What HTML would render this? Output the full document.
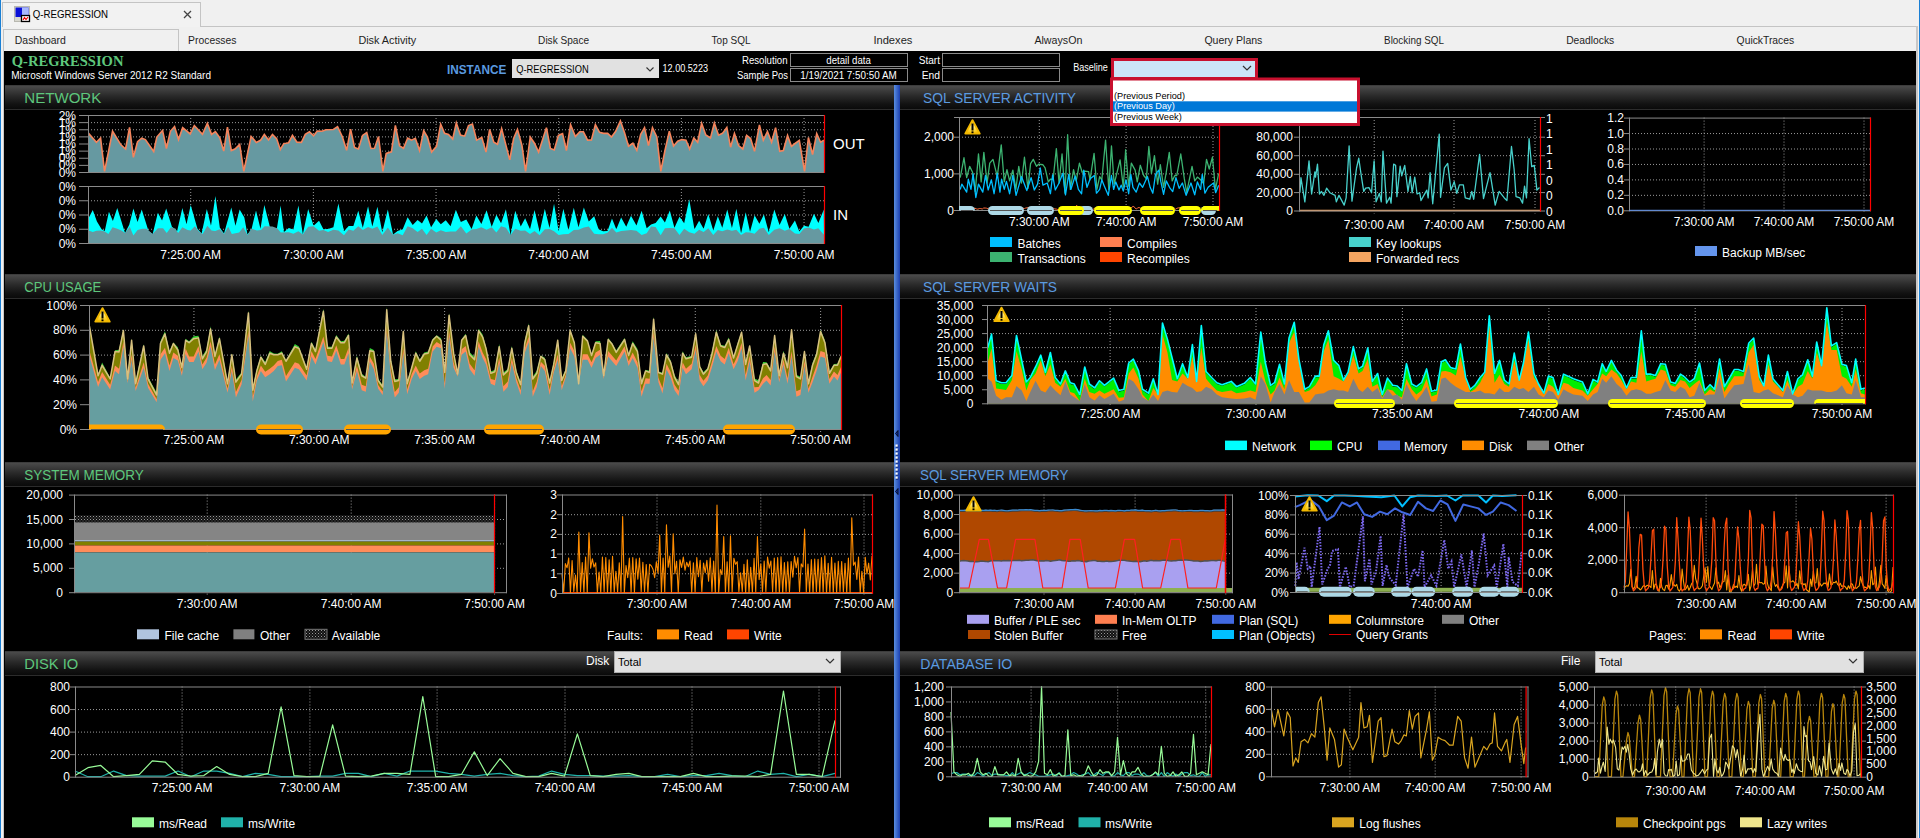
<!DOCTYPE html>
<html><head><meta charset="utf-8"><style>
html,body{margin:0;padding:0;width:1920px;height:838px;overflow:hidden;background:#f0f0f0;font-family:"Liberation Sans",sans-serif;}
.a{position:absolute;white-space:nowrap;}
</style></head><body>
<div class="a" style="left:0;top:0;width:1px;height:838px;background:#1a7fd4"></div><div class="a" style="left:1919px;top:0;width:1px;height:838px;background:#1a7fd4"></div><div class="a" style="left:200px;top:26px;width:1718px;height:1px;background:#c4c4c4"></div><div class="a" style="left:2px;top:2px;width:199px;height:25px;background:#f2f2f2;border:1px solid #c4c4c4;border-bottom:none;box-sizing:border-box"></div><div class="a" style="left:3px;top:29px;width:176px;height:22px;background:#f0f0f0;border:1px solid #c4c4c4;border-bottom:none;box-sizing:border-box"></div><div class="a" style="left:1916px;top:26px;width:2px;height:812px;background:#c8c8c8"></div><div class="a" style="left:3px;top:50px;width:1px;height:788px;background:#c8c8c8"></div><div class="a" style="left:4px;top:51px;width:1912px;height:787px;background:#000"></div>
<svg class="a" style="left:0;top:0" width="1920" height="838" shape-rendering="auto">
<defs>
<pattern id="dots" width="3" height="3" patternUnits="userSpaceOnUse"><rect width="3" height="3" fill="#111"/><rect x="0" y="0" width="1" height="1" fill="#9a9a9a"/><rect x="1.5" y="1.5" width="1" height="1" fill="#666"/></pattern>
<linearGradient id="hdr" x1="0" y1="0" x2="0" y2="1">
<stop offset="0" stop-color="#333"/><stop offset="0.05" stop-color="#4a4a4a"/><stop offset="0.45" stop-color="#2a2a2a"/><stop offset="0.8" stop-color="#121212"/><stop offset="1" stop-color="#0a0a0a"/>
</linearGradient>
<radialGradient id="wgrad" cx="0.5" cy="0.45" r="0.6"><stop offset="0" stop-color="#fff6b0"/><stop offset="0.5" stop-color="#ffd83a"/><stop offset="1" stop-color="#f4bc00"/></radialGradient>
<linearGradient id="split" x1="0" y1="0" x2="1" y2="0">
<stop offset="0" stop-color="#5a8ee0"/><stop offset="1" stop-color="#1a3fb0"/>
</linearGradient>
</defs>
<text x="32.8" y="17.8" font-size="11" fill="#000" text-anchor="start" font-weight="normal" font-family='"Liberation Sans", sans-serif' textLength="75.3" lengthAdjust="spacingAndGlyphs" >Q-REGRESSION</text><path d="M184,11 L191,18 M191,11 L184,18" stroke="#444" stroke-width="1.3"/><rect x="14.5" y="6.5" width="15" height="15" fill="#d8d8d0" stroke="#b8b8b0" stroke-width="1"/><rect x="15.5" y="7.5" width="13" height="9.5" fill="#0a10d8"/><rect x="22" y="7.5" width="6.5" height="9.5" fill="#a8b8ff"/><rect x="21.5" y="15.5" width="8" height="6" fill="#fff" stroke="#000" stroke-width="1.3"/><polyline points="23,20 24.5,17.5 26,19.5 28,17" fill="none" stroke="#e00" stroke-width="1.2"/><text x="14.8" y="43.8" font-size="11.2" fill="#1e1e1e" text-anchor="start" font-weight="normal" font-family='"Liberation Sans", sans-serif' textLength="51.1" lengthAdjust="spacingAndGlyphs" >Dashboard</text><text x="188.1" y="43.8" font-size="11.2" fill="#1e1e1e" text-anchor="start" font-weight="normal" font-family='"Liberation Sans", sans-serif' textLength="48.4" lengthAdjust="spacingAndGlyphs" >Processes</text><text x="358.4" y="43.8" font-size="11.2" fill="#1e1e1e" text-anchor="start" font-weight="normal" font-family='"Liberation Sans", sans-serif' textLength="57.8" lengthAdjust="spacingAndGlyphs" >Disk Activity</text><text x="538.1" y="43.8" font-size="11.2" fill="#1e1e1e" text-anchor="start" font-weight="normal" font-family='"Liberation Sans", sans-serif' textLength="51" lengthAdjust="spacingAndGlyphs" >Disk Space</text><text x="711.6" y="43.8" font-size="11.2" fill="#1e1e1e" text-anchor="start" font-weight="normal" font-family='"Liberation Sans", sans-serif' textLength="39" lengthAdjust="spacingAndGlyphs" >Top SQL</text><text x="873.4" y="43.8" font-size="11.2" fill="#1e1e1e" text-anchor="start" font-weight="normal" font-family='"Liberation Sans", sans-serif' textLength="39" lengthAdjust="spacingAndGlyphs" >Indexes</text><text x="1034.4" y="43.8" font-size="11.2" fill="#1e1e1e" text-anchor="start" font-weight="normal" font-family='"Liberation Sans", sans-serif' textLength="48" lengthAdjust="spacingAndGlyphs" >AlwaysOn</text><text x="1204.4" y="43.8" font-size="11.2" fill="#1e1e1e" text-anchor="start" font-weight="normal" font-family='"Liberation Sans", sans-serif' textLength="58" lengthAdjust="spacingAndGlyphs" >Query Plans</text><text x="1384.1" y="43.8" font-size="11.2" fill="#1e1e1e" text-anchor="start" font-weight="normal" font-family='"Liberation Sans", sans-serif' textLength="59.8" lengthAdjust="spacingAndGlyphs" >Blocking SQL</text><text x="1566.2" y="43.8" font-size="11.2" fill="#1e1e1e" text-anchor="start" font-weight="normal" font-family='"Liberation Sans", sans-serif' textLength="48" lengthAdjust="spacingAndGlyphs" >Deadlocks</text><text x="1736.6" y="43.8" font-size="11.2" fill="#1e1e1e" text-anchor="start" font-weight="normal" font-family='"Liberation Sans", sans-serif' textLength="57.6" lengthAdjust="spacingAndGlyphs" >QuickTraces</text><text x="11.8" y="65.8" font-size="14.5" fill="#5ec77c" text-anchor="start" font-weight="bold" font-family='"Liberation Serif", serif' textLength="111.6" lengthAdjust="spacingAndGlyphs" >Q-REGRESSION</text><text x="11.3" y="78.6" font-size="10" fill="#fff" text-anchor="start" font-weight="normal" font-family='"Liberation Sans", sans-serif' textLength="199.7" lengthAdjust="spacingAndGlyphs" >Microsoft Windows Server 2012 R2 Standard</text><text x="447" y="74.3" font-size="13" fill="#5b9be0" text-anchor="start" font-weight="bold" font-family='"Liberation Sans", sans-serif' textLength="59.3" lengthAdjust="spacingAndGlyphs" >INSTANCE</text><rect x="512" y="59" width="147" height="19" fill="#e1e1e1"/><text x="516.2" y="72.5" font-size="11" fill="#000" text-anchor="start" font-weight="normal" font-family='"Liberation Sans", sans-serif' textLength="72.5" lengthAdjust="spacingAndGlyphs" >Q-REGRESSION</text><polyline points="646.5,67.5 650,71 653.5,67.5" fill="none" stroke="#333" stroke-width="1.1"/><text x="662.5" y="71.7" font-size="10" fill="#fff" text-anchor="start" font-weight="normal" font-family='"Liberation Sans", sans-serif' textLength="45.5" lengthAdjust="spacingAndGlyphs" >12.00.5223</text><text x="742" y="64.2" font-size="10" fill="#fff" text-anchor="start" font-weight="normal" font-family='"Liberation Sans", sans-serif' textLength="45.5" lengthAdjust="spacingAndGlyphs" >Resolution</text><text x="737" y="79.2" font-size="10" fill="#fff" text-anchor="start" font-weight="normal" font-family='"Liberation Sans", sans-serif' textLength="51" lengthAdjust="spacingAndGlyphs" >Sample Pos</text><rect x="790.5" y="53.5" width="117" height="13" fill="#000" stroke="#8a8a8a" stroke-width="1"/><text x="826.3" y="64.2" font-size="10" fill="#fff" text-anchor="start" font-weight="normal" font-family='"Liberation Sans", sans-serif' textLength="44.5" lengthAdjust="spacingAndGlyphs" >detail data</text><rect x="790.5" y="68.5" width="117" height="13" fill="#000" stroke="#8a8a8a" stroke-width="1"/><text x="800.3" y="79.2" font-size="10" fill="#fff" text-anchor="start" font-weight="normal" font-family='"Liberation Sans", sans-serif' textLength="96.4" lengthAdjust="spacingAndGlyphs" >1/19/2021 7:50:50 AM</text><text x="918.7" y="64.2" font-size="10" fill="#fff" text-anchor="start" font-weight="normal" font-family='"Liberation Sans", sans-serif' textLength="21.3" lengthAdjust="spacingAndGlyphs" >Start</text><text x="921.7" y="79.2" font-size="10" fill="#fff" text-anchor="start" font-weight="normal" font-family='"Liberation Sans", sans-serif' textLength="18.3" lengthAdjust="spacingAndGlyphs" >End</text><rect x="942.5" y="53.5" width="117" height="13" fill="#000" stroke="#8a8a8a" stroke-width="1"/><rect x="942.5" y="68.5" width="117" height="13" fill="#000" stroke="#8a8a8a" stroke-width="1"/><text x="1073.2" y="71" font-size="10" fill="#fff" text-anchor="start" font-weight="normal" font-family='"Liberation Sans", sans-serif' textLength="34.7" lengthAdjust="spacingAndGlyphs" >Baseline</text><rect x="5" y="85" width="889" height="24" fill="url(#hdr)"/><rect x="5" y="109" width="889" height="1" fill="#2c2c2c"/><text x="24.3" y="103" font-size="15" fill="#5ec77c" text-anchor="start" font-weight="normal" font-family='"Liberation Sans", sans-serif' textLength="77" lengthAdjust="spacingAndGlyphs" >NETWORK</text><rect x="900" y="85" width="1016" height="24" fill="url(#hdr)"/><rect x="900" y="109" width="1016" height="1" fill="#2c2c2c"/><text x="923" y="103" font-size="15" fill="#5b9be0" text-anchor="start" font-weight="normal" font-family='"Liberation Sans", sans-serif' textLength="153" lengthAdjust="spacingAndGlyphs" >SQL SERVER ACTIVITY</text><rect x="5" y="274" width="889" height="24" fill="url(#hdr)"/><rect x="5" y="298" width="889" height="1" fill="#2c2c2c"/><text x="24.3" y="292" font-size="15" fill="#5ec77c" text-anchor="start" font-weight="normal" font-family='"Liberation Sans", sans-serif' textLength="77" lengthAdjust="spacingAndGlyphs" >CPU USAGE</text><rect x="900" y="274" width="1016" height="24" fill="url(#hdr)"/><rect x="900" y="298" width="1016" height="1" fill="#2c2c2c"/><text x="923" y="292" font-size="15" fill="#5b9be0" text-anchor="start" font-weight="normal" font-family='"Liberation Sans", sans-serif' textLength="134" lengthAdjust="spacingAndGlyphs" >SQL SERVER WAITS</text><rect x="5" y="462" width="889" height="24" fill="url(#hdr)"/><rect x="5" y="486" width="889" height="1" fill="#2c2c2c"/><text x="24.3" y="480" font-size="15" fill="#5ec77c" text-anchor="start" font-weight="normal" font-family='"Liberation Sans", sans-serif' textLength="119.5" lengthAdjust="spacingAndGlyphs" >SYSTEM MEMORY</text><rect x="900" y="462" width="1016" height="24" fill="url(#hdr)"/><rect x="900" y="486" width="1016" height="1" fill="#2c2c2c"/><text x="920" y="480" font-size="15" fill="#5b9be0" text-anchor="start" font-weight="normal" font-family='"Liberation Sans", sans-serif' textLength="148.4" lengthAdjust="spacingAndGlyphs" >SQL SERVER MEMORY</text><rect x="5" y="651" width="889" height="24" fill="url(#hdr)"/><rect x="5" y="675" width="889" height="1" fill="#2c2c2c"/><text x="24.3" y="669" font-size="15" fill="#5ec77c" text-anchor="start" font-weight="normal" font-family='"Liberation Sans", sans-serif' textLength="54" lengthAdjust="spacingAndGlyphs" >DISK IO</text><rect x="900" y="651" width="1016" height="24" fill="url(#hdr)"/><rect x="900" y="675" width="1016" height="1" fill="#2c2c2c"/><text x="920.3" y="669" font-size="15" fill="#5b9be0" text-anchor="start" font-weight="normal" font-family='"Liberation Sans", sans-serif' textLength="92" lengthAdjust="spacingAndGlyphs" >DATABASE IO</text><rect x="894" y="85" width="6" height="753" fill="url(#split)"/><path d="M895.5,433.5 L898,430.5 L898,436.5 Z" fill="#1030a0" stroke="#000" stroke-width="0.8"/><path d="M895.5,491.5 L898,488.5 L898,494.5 Z" fill="#1030a0" stroke="#000" stroke-width="0.8"/><rect x="896" y="445.3" width="2.4" height="2.4" fill="#102a80"/><rect x="895.5" y="444.5" width="2.2" height="2.2" fill="#fff"/><rect x="896" y="449.3" width="2.4" height="2.4" fill="#102a80"/><rect x="895.5" y="448.5" width="2.2" height="2.2" fill="#fff"/><rect x="896" y="453.3" width="2.4" height="2.4" fill="#102a80"/><rect x="895.5" y="452.5" width="2.2" height="2.2" fill="#fff"/><rect x="896" y="457.3" width="2.4" height="2.4" fill="#102a80"/><rect x="895.5" y="456.5" width="2.2" height="2.2" fill="#fff"/><rect x="896" y="461.3" width="2.4" height="2.4" fill="#102a80"/><rect x="895.5" y="460.5" width="2.2" height="2.2" fill="#fff"/><rect x="896" y="465.3" width="2.4" height="2.4" fill="#102a80"/><rect x="895.5" y="464.5" width="2.2" height="2.2" fill="#fff"/><rect x="896" y="469.3" width="2.4" height="2.4" fill="#102a80"/><rect x="895.5" y="468.5" width="2.2" height="2.2" fill="#fff"/><rect x="896" y="473.3" width="2.4" height="2.4" fill="#102a80"/><rect x="895.5" y="472.5" width="2.2" height="2.2" fill="#fff"/><rect x="896" y="477.3" width="2.4" height="2.4" fill="#102a80"/><rect x="895.5" y="476.5" width="2.2" height="2.2" fill="#fff"/><line x1="88" y1="122.625" x2="824" y2="122.625" stroke="#9a9a9a" stroke-width="1" stroke-dasharray="1 2"/><line x1="88" y1="129.75" x2="824" y2="129.75" stroke="#9a9a9a" stroke-width="1" stroke-dasharray="1 2"/><line x1="88" y1="136.875" x2="824" y2="136.875" stroke="#9a9a9a" stroke-width="1" stroke-dasharray="1 2"/><line x1="88" y1="144.0" x2="824" y2="144.0" stroke="#9a9a9a" stroke-width="1" stroke-dasharray="1 2"/><line x1="88" y1="151.125" x2="824" y2="151.125" stroke="#9a9a9a" stroke-width="1" stroke-dasharray="1 2"/><line x1="88" y1="158.25" x2="824" y2="158.25" stroke="#9a9a9a" stroke-width="1" stroke-dasharray="1 2"/><line x1="88" y1="165.375" x2="824" y2="165.375" stroke="#9a9a9a" stroke-width="1" stroke-dasharray="1 2"/><line x1="190.72222222222223" y1="115" x2="190.72222222222223" y2="175" stroke="#9a9a9a" stroke-width="1" stroke-dasharray="1 2"/><line x1="313.3888888888889" y1="115" x2="313.3888888888889" y2="175" stroke="#9a9a9a" stroke-width="1" stroke-dasharray="1 2"/><line x1="436.05555555555554" y1="115" x2="436.05555555555554" y2="175" stroke="#9a9a9a" stroke-width="1" stroke-dasharray="1 2"/><line x1="558.7222222222222" y1="115" x2="558.7222222222222" y2="175" stroke="#9a9a9a" stroke-width="1" stroke-dasharray="1 2"/><line x1="681.3888888888889" y1="115" x2="681.3888888888889" y2="175" stroke="#9a9a9a" stroke-width="1" stroke-dasharray="1 2"/><line x1="804.0555555555555" y1="115" x2="804.0555555555555" y2="175" stroke="#9a9a9a" stroke-width="1" stroke-dasharray="1 2"/><path d="M88,172 L88,133.35 L88.6,133.35 L96.42,142.21 L100.58,138.04 L104.54,171.38 L112.56,131.27 L120.9,144.81 L125.58,148.98 L129.54,127.42 L133.4,157.31 L137.56,141.69 L141.73,138.25 L145.38,139.6 L153.71,151.58 L156.83,137.0 L162.56,130.54 L166.42,148.46 L170.38,131.27 L174.54,126.58 L178.5,139.6 L182.67,127.62 L190.17,133.88 L194.33,125.54 L202.46,134.4 L207.35,123.46 L211.52,134.4 L215.38,131.58 L219.85,137.83 L223.71,151.06 L227.46,127.1 L231.31,150.54 L234.96,148.98 L239.65,144.5 L243.81,171.38 L251.1,136.48 L256.31,142.42 L260.48,140.33 L264.33,134.4 L268.5,139.92 L272.46,134.4 L276.62,138.56 L280.27,149.5 L283.92,143.46 L286.0,143.25 L288.6,142.73 L292.46,135.44 L296.94,142.21 L301.42,142.42 L305.27,134.4 L309.44,131.79 L313.6,135.75 L317.25,131.06 L321.94,131.27 L326.1,129.71 L333.4,129.5 L337.56,126.58 L342.25,136.48 L346.62,150.33 L350.58,129.19 L354.54,147.42 L358.4,148.98 L362.56,135.44 L366.73,132.62 L370.9,148.46 L374.54,148.25 L378.5,136.48 L382.88,171.38 L386.21,153.46 L391.42,151.79 L395.38,125.33 L399.54,145.85 L403.5,148.25 L407.67,138.04 L411.52,140.12 L415.38,138.25 L419.54,150.54 L423.71,130.75 L427.46,137.0 L431.62,152.1 L436.52,146.38 L440.69,124.29 L444.54,133.35 L448.5,134.4 L452.67,139.08 L456.31,122.94 L460.48,135.12 L464.65,136.17 L468.5,125.54 L472.46,123.98 L476.62,140.12 L481.83,137.52 L486.0,152.1 L489.65,129.5 L493.81,142.21 L497.46,144.29 L501.62,128.67 L509.75,159.92 L513.6,138.56 L517.46,129.5 L521.94,145.33 L525.58,171.38 L530.27,137.0 L534.44,143.25 L538.6,152.1 L546.42,127.62 L550.38,148.46 L554.23,150.02 L558.4,135.44 L562.56,133.67 L566.42,150.54 L570.58,124.71 L575.38,136.48 L579.75,131.79 L583.4,131.79 L587.56,140.12 L591.42,139.92 L595.38,124.71 L599.54,132.31 L603.5,133.35 L607.67,133.35 L611.52,137.0 L615.69,131.27 L620.38,120.85 L624.54,132.83 L628.5,146.17 L632.88,143.25 L636.83,150.33 L640.69,134.4 L644.54,127.62 L648.5,145.54 L652.46,127.62 L656.83,137.0 L660.79,171.38 L664.96,150.54 L669.33,131.27 L673.5,146.17 L677.67,141.17 L681.83,139.6 L686.0,140.12 L689.65,148.98 L693.81,138.04 L697.67,142.21 L701.62,123.25 L705.79,134.92 L710.48,138.04 L714.33,122.94 L718.5,135.12 L722.46,133.35 L726.83,127.42 L730.58,147.21 L734.44,133.35 L738.6,145.54 L742.77,148.98 L746.62,135.44 L750.58,138.56 L754.54,151.38 L759.44,125.02 L763.29,140.12 L767.46,131.58 L771.62,142.21 L775.58,127.62 L779.75,151.38 L783.4,150.54 L787.56,135.44 L791.42,146.38 L795.38,143.25 L799.33,140.33 L804.54,171.38 L808.4,137.52 L812.56,154.5 L816.73,133.67 L820.58,142.21 L824,140.12 L824,172 Z" fill="#6699a1" stroke="none"/><polyline points="88,133.35 88.6,133.35 96.42,142.21 100.58,138.04 104.54,171.38 112.56,131.27 120.9,144.81 125.58,148.98 129.54,127.42 133.4,157.31 137.56,141.69 141.73,138.25 145.38,139.6 153.71,151.58 156.83,137.0 162.56,130.54 166.42,148.46 170.38,131.27 174.54,126.58 178.5,139.6 182.67,127.62 190.17,133.88 194.33,125.54 202.46,134.4 207.35,123.46 211.52,134.4 215.38,131.58 219.85,137.83 223.71,151.06 227.46,127.1 231.31,150.54 234.96,148.98 239.65,144.5 243.81,171.38 251.1,136.48 256.31,142.42 260.48,140.33 264.33,134.4 268.5,139.92 272.46,134.4 276.62,138.56 280.27,149.5 283.92,143.46 286.0,143.25 288.6,142.73 292.46,135.44 296.94,142.21 301.42,142.42 305.27,134.4 309.44,131.79 313.6,135.75 317.25,131.06 321.94,131.27 326.1,129.71 333.4,129.5 337.56,126.58 342.25,136.48 346.62,150.33 350.58,129.19 354.54,147.42 358.4,148.98 362.56,135.44 366.73,132.62 370.9,148.46 374.54,148.25 378.5,136.48 382.88,171.38 386.21,153.46 391.42,151.79 395.38,125.33 399.54,145.85 403.5,148.25 407.67,138.04 411.52,140.12 415.38,138.25 419.54,150.54 423.71,130.75 427.46,137.0 431.62,152.1 436.52,146.38 440.69,124.29 444.54,133.35 448.5,134.4 452.67,139.08 456.31,122.94 460.48,135.12 464.65,136.17 468.5,125.54 472.46,123.98 476.62,140.12 481.83,137.52 486.0,152.1 489.65,129.5 493.81,142.21 497.46,144.29 501.62,128.67 509.75,159.92 513.6,138.56 517.46,129.5 521.94,145.33 525.58,171.38 530.27,137.0 534.44,143.25 538.6,152.1 546.42,127.62 550.38,148.46 554.23,150.02 558.4,135.44 562.56,133.67 566.42,150.54 570.58,124.71 575.38,136.48 579.75,131.79 583.4,131.79 587.56,140.12 591.42,139.92 595.38,124.71 599.54,132.31 603.5,133.35 607.67,133.35 611.52,137.0 615.69,131.27 620.38,120.85 624.54,132.83 628.5,146.17 632.88,143.25 636.83,150.33 640.69,134.4 644.54,127.62 648.5,145.54 652.46,127.62 656.83,137.0 660.79,171.38 664.96,150.54 669.33,131.27 673.5,146.17 677.67,141.17 681.83,139.6 686.0,140.12 689.65,148.98 693.81,138.04 697.67,142.21 701.62,123.25 705.79,134.92 710.48,138.04 714.33,122.94 718.5,135.12 722.46,133.35 726.83,127.42 730.58,147.21 734.44,133.35 738.6,145.54 742.77,148.98 746.62,135.44 750.58,138.56 754.54,151.38 759.44,125.02 763.29,140.12 767.46,131.58 771.62,142.21 775.58,127.62 779.75,151.38 783.4,150.54 787.56,135.44 791.42,146.38 795.38,143.25 799.33,140.33 804.54,171.38 808.4,137.52 812.56,154.5 816.73,133.67 820.58,142.21 824,140.12" fill="none" stroke="#f4845c" stroke-width="1.6" stroke-linejoin="miter"/><line x1="79" y1="115.5" x2="88" y2="115.5" stroke="#8a8a8a" stroke-width="1"/><line x1="79" y1="122.625" x2="88" y2="122.625" stroke="#8a8a8a" stroke-width="1"/><line x1="79" y1="129.75" x2="88" y2="129.75" stroke="#8a8a8a" stroke-width="1"/><line x1="79" y1="136.875" x2="88" y2="136.875" stroke="#8a8a8a" stroke-width="1"/><line x1="79" y1="144.0" x2="88" y2="144.0" stroke="#8a8a8a" stroke-width="1"/><line x1="79" y1="151.125" x2="88" y2="151.125" stroke="#8a8a8a" stroke-width="1"/><line x1="79" y1="158.25" x2="88" y2="158.25" stroke="#8a8a8a" stroke-width="1"/><line x1="79" y1="165.375" x2="88" y2="165.375" stroke="#8a8a8a" stroke-width="1"/><line x1="79" y1="172.5" x2="88" y2="172.5" stroke="#8a8a8a" stroke-width="1"/><line x1="88.5" y1="115" x2="88.5" y2="173" stroke="#8a8a8a" stroke-width="1"/><line x1="88" y1="115.5" x2="825" y2="115.5" stroke="#8a8a8a" stroke-width="1"/><line x1="88" y1="172.5" x2="825" y2="172.5" stroke="#8a8a8a" stroke-width="1"/><line x1="824.5" y1="115" x2="824.5" y2="173" stroke="#ff0000" stroke-width="1.2"/><text x="76" y="119.5" font-size="12" fill="#fff" text-anchor="end" font-weight="normal" font-family='"Liberation Sans", sans-serif' >2%</text><text x="76" y="126.6" font-size="12" fill="#fff" text-anchor="end" font-weight="normal" font-family='"Liberation Sans", sans-serif' >1%</text><text x="76" y="133.8" font-size="12" fill="#fff" text-anchor="end" font-weight="normal" font-family='"Liberation Sans", sans-serif' >1%</text><text x="76" y="140.9" font-size="12" fill="#fff" text-anchor="end" font-weight="normal" font-family='"Liberation Sans", sans-serif' >1%</text><text x="76" y="148.0" font-size="12" fill="#fff" text-anchor="end" font-weight="normal" font-family='"Liberation Sans", sans-serif' >1%</text><text x="76" y="155.1" font-size="12" fill="#fff" text-anchor="end" font-weight="normal" font-family='"Liberation Sans", sans-serif' >1%</text><text x="76" y="162.2" font-size="12" fill="#fff" text-anchor="end" font-weight="normal" font-family='"Liberation Sans", sans-serif' >0%</text><text x="76" y="169.4" font-size="12" fill="#fff" text-anchor="end" font-weight="normal" font-family='"Liberation Sans", sans-serif' >0%</text><text x="76" y="176.5" font-size="12" fill="#fff" text-anchor="end" font-weight="normal" font-family='"Liberation Sans", sans-serif' >0%</text><line x1="88" y1="200.75" x2="824" y2="200.75" stroke="#9a9a9a" stroke-width="1" stroke-dasharray="1 2"/><line x1="88" y1="215.0" x2="824" y2="215.0" stroke="#9a9a9a" stroke-width="1" stroke-dasharray="1 2"/><line x1="88" y1="229.25" x2="824" y2="229.25" stroke="#9a9a9a" stroke-width="1" stroke-dasharray="1 2"/><line x1="190.72222222222223" y1="186" x2="190.72222222222223" y2="246" stroke="#9a9a9a" stroke-width="1" stroke-dasharray="1 2"/><line x1="313.3888888888889" y1="186" x2="313.3888888888889" y2="246" stroke="#9a9a9a" stroke-width="1" stroke-dasharray="1 2"/><line x1="436.05555555555554" y1="186" x2="436.05555555555554" y2="246" stroke="#9a9a9a" stroke-width="1" stroke-dasharray="1 2"/><line x1="558.7222222222222" y1="186" x2="558.7222222222222" y2="246" stroke="#9a9a9a" stroke-width="1" stroke-dasharray="1 2"/><line x1="681.3888888888889" y1="186" x2="681.3888888888889" y2="246" stroke="#9a9a9a" stroke-width="1" stroke-dasharray="1 2"/><line x1="804.0555555555555" y1="186" x2="804.0555555555555" y2="246" stroke="#9a9a9a" stroke-width="1" stroke-dasharray="1 2"/><path d="M88,243 L88,217.9 L88.6,217.9 L92.77,210.08 L96.94,221.54 L101.62,229.35 L104.75,230.92 L108.92,211.65 L112.88,221.02 L117.25,208.0 L125.06,233.0 L129.23,224.67 L133.4,208.52 L137.56,222.06 L141.73,209.56 L148.5,230.92 L152.67,234.04 L157.88,212.69 L162.04,220.5 L166.21,208.52 L171.94,226.75 L177.15,230.92 L182.35,208.0 L186.52,224.15 L190.69,204.88 L197.46,228.83 L201.62,233.52 L206.83,209.04 L211.0,225.71 L215.38,196.02 L219.85,227.79 L224.02,233.52 L231.31,207.48 L235.48,225.71 L239.65,209.56 L244.33,217.38 L247.46,234.56 L251.62,228.83 L256.0,210.6 L260.48,228.83 L264.33,204.88 L269.85,226.75 L276.83,228.83 L280.58,205.4 L283.92,231.96 L288.78,228.0 L293.37,229.55 L298.41,205.62 L302.84,234.25 L308.18,209.07 L313.56,225.81 L319.04,220.77 L323.4,229.21 L328.04,228.88 L333.38,227.29 L338.42,203.55 L343.97,231.29 L348.67,226.04 L353.38,226.0 L358.28,210.74 L362.79,227.73 L368.07,206.2 L372.32,226.56 L377.41,206.76 L382.28,232.22 L387.82,209.56 L393.07,234.62 L397.64,231.08 L402.71,229.36 L407.61,217.17 L412.71,225.02 L417.58,220.04 L422.0,223.53 L426.59,215.53 L431.09,227.18 L436.25,218.96 L440.79,224.26 L445.77,220.32 L450.56,226.18 L455.86,209.63 L460.85,221.9 L466.31,219.39 L471.62,229.02 L476.31,215.4 L481.38,223.98 L486.57,210.32 L491.72,226.8 L496.36,214.87 L501.07,223.36 L505.9,209.14 L510.55,234.92 L515.26,210.78 L520.74,226.57 L525.17,218.17 L530.02,229.13 L534.53,210.12 L539.66,231.91 L544.82,208.8 L549.52,228.1 L554.04,203.83 L558.64,231.3 L563.38,208.78 L568.48,230.35 L573.78,207.74 L578.51,227.26 L583.84,207.58 L588.77,221.49 L594.19,216.22 L598.59,229.22 L603.08,231.33 L607.51,231.02 L611.98,218.52 L616.32,229.29 L621.15,217.41 L626.24,226.63 L630.98,215.87 L636.48,225.54 L641.64,210.68 L646.69,228.13 L651.07,224.54 L655.62,222.96 L660.68,216.44 L664.92,222.61 L669.79,210.62 L674.43,227.77 L679.48,216.77 L684.19,223.29 L689.23,199.37 L694.45,229.3 L699.13,220.81 L703.6,228.72 L708.31,214.02 L713.26,230.58 L717.82,216.27 L722.26,227.63 L727.27,209.39 L731.93,228.01 L736.37,208.8 L741.06,233.13 L745.73,212.28 L750.03,231.77 L754.58,215.13 L759.39,223.64 L763.92,214.47 L768.79,232.36 L774.3,209.47 L779.56,225.12 L784.77,214.09 L789.47,228.76 L794.92,220.41 L799.33,231.42 L803.97,225.76 L808.6,226.77 L813.96,213.82 L818.37,223.0 L823.84,209.61 L824,229.96 L824,243 Z" fill="#00ffff" stroke="none"/><path d="M88,243 L88,230.4 L88.6,230.4 L92.77,231.96 L96.42,230.71 L100.58,230.4 L104.75,231.44 L108.4,234.04 L112.56,227.27 L117.25,228.83 L121.42,230.4 L125.06,233.0 L129.75,226.75 L133.4,235.6 L137.56,229.88 L142.25,228.83 L146.42,228.83 L152.67,234.04 L157.88,228.31 L163.08,228.31 L166.73,233.0 L170.9,227.27 L174.54,228.31 L178.19,233.0 L182.35,227.27 L187.56,229.88 L190.69,230.4 L194.85,226.23 L199.54,231.96 L202.67,234.04 L207.35,225.71 L211.52,230.4 L215.17,230.92 L219.85,229.35 L224.02,234.04 L228.19,226.75 L231.83,234.04 L239.12,232.48 L243.29,227.27 L247.46,235.08 L251.62,228.83 L256.83,230.4 L261.0,229.88 L264.65,226.23 L272.46,226.54 L277.15,228.31 L280.79,232.48 L288.78,232.25 L293.37,233.7 L298.41,231.3 L302.84,234.61 L308.18,226.71 L313.56,226.18 L319.04,230.83 L323.4,230.02 L328.04,231.9 L333.38,229.8 L338.42,230.53 L343.97,235.27 L348.67,229.45 L353.38,230.86 L358.28,226.27 L362.79,230.06 L368.07,226.97 L372.32,228.63 L377.41,226.49 L382.28,235.11 L387.82,227.59 L393.07,234.66 L397.64,233.32 L402.71,235.35 L407.61,226.23 L412.71,228.18 L417.58,231.96 L422.0,228.77 L426.59,234.97 L431.09,228.71 L436.25,232.59 L440.79,230.14 L445.77,231.94 L450.56,231.59 L455.86,231.51 L460.85,226.16 L466.31,233.58 L471.62,229.6 L476.31,228.97 L481.38,227.18 L486.57,229.74 L491.72,227.35 L496.36,232.61 L501.07,226.28 L505.9,227.7 L510.55,234.97 L515.26,228.66 L520.74,230.76 L525.17,230.41 L530.02,234.12 L534.53,231.11 L539.66,235.24 L544.82,229.33 L549.52,228.92 L554.04,231.17 L558.64,234.89 L563.38,234.29 L568.48,234.01 L573.78,229.92 L578.51,229.65 L583.84,227.61 L588.77,226.5 L594.19,233.8 L598.59,234.22 L603.08,234.36 L607.51,232.8 L611.98,227.75 L616.32,232.51 L621.15,231.01 L626.24,230.44 L630.98,229.94 L636.48,230.67 L641.64,235.09 L646.69,233.16 L651.07,226.59 L655.62,227.08 L660.68,235.17 L664.92,228.17 L669.79,227.96 L674.43,228.3 L679.48,235.05 L684.19,228.83 L689.23,232.36 L694.45,233.85 L699.13,229.63 L703.6,231.93 L708.31,228.19 L713.26,235.05 L717.82,229.98 L722.26,231.21 L727.27,229.59 L731.93,230.77 L736.37,229.8 L741.06,234.91 L745.73,232.25 L750.03,232.38 L754.58,233.69 L759.39,228.69 L763.92,227.86 L768.79,235.11 L774.3,229.72 L779.56,228.27 L784.77,230.76 L789.47,228.91 L794.92,233.5 L799.33,233.95 L803.97,228.46 L808.6,227.51 L813.96,229.61 L818.37,228.17 L823.84,234.85 L824,233.27 L824,243 Z" fill="#6699a1" stroke="none"/><line x1="79" y1="186.5" x2="88" y2="186.5" stroke="#8a8a8a" stroke-width="1"/><line x1="79" y1="200.75" x2="88" y2="200.75" stroke="#8a8a8a" stroke-width="1"/><line x1="79" y1="215.0" x2="88" y2="215.0" stroke="#8a8a8a" stroke-width="1"/><line x1="79" y1="229.25" x2="88" y2="229.25" stroke="#8a8a8a" stroke-width="1"/><line x1="79" y1="243.5" x2="88" y2="243.5" stroke="#8a8a8a" stroke-width="1"/><line x1="88.5" y1="186" x2="88.5" y2="244" stroke="#8a8a8a" stroke-width="1"/><line x1="88" y1="186.5" x2="825" y2="186.5" stroke="#8a8a8a" stroke-width="1"/><line x1="88" y1="243.5" x2="825" y2="243.5" stroke="#8a8a8a" stroke-width="1"/><line x1="824.5" y1="186" x2="824.5" y2="244" stroke="#ff0000" stroke-width="1.2"/><text x="76" y="190.5" font-size="12" fill="#fff" text-anchor="end" font-weight="normal" font-family='"Liberation Sans", sans-serif' >0%</text><text x="76" y="204.8" font-size="12" fill="#fff" text-anchor="end" font-weight="normal" font-family='"Liberation Sans", sans-serif' >0%</text><text x="76" y="219.0" font-size="12" fill="#fff" text-anchor="end" font-weight="normal" font-family='"Liberation Sans", sans-serif' >0%</text><text x="76" y="233.2" font-size="12" fill="#fff" text-anchor="end" font-weight="normal" font-family='"Liberation Sans", sans-serif' >0%</text><text x="76" y="247.5" font-size="12" fill="#fff" text-anchor="end" font-weight="normal" font-family='"Liberation Sans", sans-serif' >0%</text><text x="190.72222222222223" y="259.1" font-size="12" fill="#fff" text-anchor="middle" font-weight="normal" font-family='"Liberation Sans", sans-serif' >7:25:00 AM</text><text x="313.3888888888889" y="259.1" font-size="12" fill="#fff" text-anchor="middle" font-weight="normal" font-family='"Liberation Sans", sans-serif' >7:30:00 AM</text><text x="436.05555555555554" y="259.1" font-size="12" fill="#fff" text-anchor="middle" font-weight="normal" font-family='"Liberation Sans", sans-serif' >7:35:00 AM</text><text x="558.7222222222222" y="259.1" font-size="12" fill="#fff" text-anchor="middle" font-weight="normal" font-family='"Liberation Sans", sans-serif' >7:40:00 AM</text><text x="681.3888888888889" y="259.1" font-size="12" fill="#fff" text-anchor="middle" font-weight="normal" font-family='"Liberation Sans", sans-serif' >7:45:00 AM</text><text x="804.0555555555555" y="259.1" font-size="12" fill="#fff" text-anchor="middle" font-weight="normal" font-family='"Liberation Sans", sans-serif' >7:50:00 AM</text><text x="833" y="149" font-size="15" fill="#fff" text-anchor="start" font-weight="normal" font-family='"Liberation Sans", sans-serif' >OUT</text><text x="833" y="220" font-size="15" fill="#fff" text-anchor="start" font-weight="normal" font-family='"Liberation Sans", sans-serif' >IN</text><line x1="89" y1="330.3" x2="841" y2="330.3" stroke="#9a9a9a" stroke-width="1" stroke-dasharray="1 2"/><line x1="89" y1="355.1" x2="841" y2="355.1" stroke="#9a9a9a" stroke-width="1" stroke-dasharray="1 2"/><line x1="89" y1="379.9" x2="841" y2="379.9" stroke="#9a9a9a" stroke-width="1" stroke-dasharray="1 2"/><line x1="89" y1="404.7" x2="841" y2="404.7" stroke="#9a9a9a" stroke-width="1" stroke-dasharray="1 2"/><line x1="193.94444444444446" y1="305" x2="193.94444444444446" y2="432" stroke="#9a9a9a" stroke-width="1" stroke-dasharray="1 2"/><line x1="319.27777777777777" y1="305" x2="319.27777777777777" y2="432" stroke="#9a9a9a" stroke-width="1" stroke-dasharray="1 2"/><line x1="444.6111111111111" y1="305" x2="444.6111111111111" y2="432" stroke="#9a9a9a" stroke-width="1" stroke-dasharray="1 2"/><line x1="569.9444444444443" y1="305" x2="569.9444444444443" y2="432" stroke="#9a9a9a" stroke-width="1" stroke-dasharray="1 2"/><line x1="695.2777777777778" y1="305" x2="695.2777777777778" y2="432" stroke="#9a9a9a" stroke-width="1" stroke-dasharray="1 2"/><line x1="820.6111111111111" y1="305" x2="820.6111111111111" y2="432" stroke="#9a9a9a" stroke-width="1" stroke-dasharray="1 2"/><path d="M89,429 L89,323.8652231163289 L89.55,325.3373365378625 L98.09,374.70749093515013 L102.12,362.47246482338875 L110.17,377.6383434377349 L115.01,350.3529342862124 L119.04,349.7174417669957 L123.39,328.99783929238737 L127.58,376.3688083083676 L131.61,338.8728653180251 L135.64,381.0729268886939 L143.7,344.35498669060325 L148.05,376.8879438805398 L156.59,392.402242312181 L160.46,341.2765313369063 L164.97,331.1770714964418 L169.48,350.9053930345889 L173.35,342.42280739874496 L177.86,347.37353870601675 L181.89,365.6287995297078 L185.6,338.73077383161535 L189.14,341.3677609365809 L193.66,336.15034474014624 L198.49,335.8209169954396 L202.36,356.13161997085814 L206.55,349.17688614569994 L210.58,326.27985431231247 L214.93,354.3906367493413 L219.44,336.42290644535734 L227.5,381.6978156834642 L231.85,353.32486036261906 L235.88,379.4679093555531 L241.52,372.5675497294864 L248.45,310.4840027328783 L252.8,387.531658191078 L256.83,368.7384231250918 L260.86,355.95399789792936 L265.21,361.9745932742425 L269.72,350.9784986286953 L273.75,353.45694893406755 L277.78,353.70157480615114 L281.81,351.22273017181305 L286.0,360.1819242012881 L294.86,344.074854384863 L298.89,346.43869656390183 L306.63,367.36883903601745 L311.46,341.77300417993155 L315.49,349.38020029884547 L323.39,308.63036560049096 L327.58,346.7968486576238 L331.93,346.67719874892396 L336.28,335.0213310414153 L340.79,341.17482667300135 L344.34,340.6378579234306 L348.53,333.48238307335345 L352.08,381.21975068477104 L356.91,355.8081721077965 L361.75,373.79916671537444 L365.77,377.00140297798055 L369.8,347.9763285321092 L373.83,349.92974057333595 L378.18,378.80283318634173 L382.7,385.304954310771 L386.73,306.9968924540719 L390.75,358.52611778948824 L394.78,379.4684117547442 L398.81,378.85881368836635 L403.32,330.25618147711333 L407.19,381.1880992788956 L411.71,366.38148738343807 L415.73,351.19607315184726 L419.76,359.6115502044414 L424.28,352.3990815138996 L428.14,351.5370253257962 L432.66,338.94573139936887 L436.68,335.193444563202 L441.04,338.32618549822075 L444.74,370.0873668831444 L449.09,313.14526030085773 L453.61,351.81728654250475 L457.64,371.88142290456744 L461.66,339.19623424834685 L465.69,333.7206560571522 L469.72,352.2994186509727 L474.56,356.9721728278939 L478.59,328.7909633106158 L482.62,334.546240235447 L486.0,346.4526430392732 L490.83,371.3868801086841 L494.86,369.66782231963003 L499.22,343.95568824476794 L503.41,372.60137915294604 L507.76,369.05853225903877 L511.79,346.0409428066123 L516.3,370.36211810614645 L520.65,382.9732080948461 L524.68,341.0984860426233 L528.71,323.31436864484937 L532.74,376.8748658842893 L536.77,370.6330899106333 L540.79,355.37725895601295 L544.82,357.72998472012245 L549.66,380.85776172343424 L553.69,362.8469671808552 L557.72,338.98151818057727 L561.75,378.3342595082938 L565.77,369.1280813322969 L570.13,329.135805963284 L574.32,341.6346392060996 L578.67,381.05915807528027 L582.7,334.6258977506913 L587.53,339.8874356464473 L591.56,354.21057536332347 L595.59,341.2510933026973 L600.1,340.95084650335866 L603.65,374.4248237442823 L608.16,337.98254223082546 L612.19,343.14476246620967 L616.22,350.5340708444029 L624.6,338.1061159500109 L628.63,353.9805635272594 L632.66,341.1871713149942 L637.49,348.90489171754876 L641.52,381.2985259046797 L645.55,369.8410924781274 L649.58,370.84004187171143 L653.61,316.81190301623747 L658.44,371.4606496854921 L662.47,372.76423135759893 L666.5,352.9080154506635 L670.53,360.3616241314378 L674.56,375.00947809994307 L678.59,382.3173562044287 L682.62,351.34396893816483 L686.0,357.3717675235813 L691.64,355.7946694543764 L695.67,332.36070570543063 L699.7,365.76262929711163 L703.41,371.9316391350408 L707.76,368.01597223489756 L711.79,352.1890666200886 L716.3,330.0672858839191 L720.65,344.82777998138994 L724.68,345.64223437186297 L728.71,337.39340200078465 L733.54,356.943941419089 L737.57,343.2438840292337 L741.6,331.1762773613726 L745.63,362.0807029045866 L749.66,344.922675930354 L754.49,378.442415305817 L758.52,380.2260150073817 L763.03,361.93651866830726 L766.58,362.24002437355006 L770.61,368.94781612982126 L774.64,334.2082777234962 L779.15,374.13387794445265 L783.5,350.62504696467477 L787.53,365.21807969718776 L791.56,328.79362185906456 L796.39,374.86621098298565 L800.42,376.81757803236707 L804.45,350.25413101194107 L808.48,381.3552753216179 L812.51,362.662468578235 L816.54,352.7974827837564 L820.57,329.77827556236133 L824.92,340.18269378215047 L829.43,371.40690557335637 L833.95,363.93097449014596 L837.49,363.77001917372826 L841,355.1235696707202 L841,429 Z" fill="#33cc33" stroke="none"/><path d="M89,429 L89,326.59 L89.55,326.59 L98.09,375.75 L102.12,365.27 L110.17,378.97 L115.01,351.57 L119.04,351.89 L123.39,330.62 L127.58,378.97 L131.61,340.29 L135.64,383.8 L143.7,345.93 L148.05,378.97 L156.59,395.08 L160.46,343.51 L164.97,333.84 L169.48,353.18 L173.35,343.51 L177.86,349.96 L181.89,367.69 L185.6,340.29 L189.14,342.71 L193.66,338.68 L198.49,337.87 L202.36,358.82 L206.55,351.57 L210.58,329.01 L214.93,356.41 L219.44,338.68 L227.5,383.8 L231.85,354.79 L235.88,382.19 L241.52,374.13 L248.45,312.89 L252.8,390.25 L256.83,370.91 L260.86,357.21 L265.21,364.46 L269.72,353.18 L273.75,354.79 L277.78,354.79 L281.81,353.18 L286.0,361.24 L294.86,346.74 L298.89,348.35 L306.63,369.3 L311.46,343.51 L315.49,351.57 L323.39,311.28 L327.58,348.35 L331.93,348.35 L336.28,337.07 L340.79,342.71 L344.34,342.71 L348.53,335.46 L352.08,383.0 L356.91,358.02 L361.75,375.75 L365.77,378.16 L369.8,350.77 L373.83,351.57 L378.18,380.58 L382.7,387.03 L386.73,309.67 L390.75,361.24 L394.78,381.39 L398.81,380.58 L403.32,331.43 L407.19,383.8 L411.71,367.69 L415.73,353.18 L419.76,361.24 L424.28,353.99 L428.14,353.18 L432.66,340.29 L436.68,336.26 L441.04,340.29 L444.74,372.52 L449.09,315.31 L453.61,353.18 L457.64,374.13 L461.66,340.29 L465.69,335.46 L469.72,354.79 L474.56,359.63 L478.59,330.62 L482.62,337.07 L486.0,348.35 L490.83,373.33 L494.86,371.72 L499.22,346.74 L503.41,374.94 L507.76,370.91 L511.79,348.35 L516.3,372.52 L520.65,384.61 L524.68,343.51 L528.71,325.79 L532.74,378.97 L536.77,373.33 L540.79,356.41 L544.82,359.63 L549.66,383.0 L553.69,364.46 L557.72,340.29 L561.75,380.58 L565.77,370.91 L570.13,330.62 L574.32,342.71 L578.67,383.8 L582.7,336.26 L587.53,341.1 L591.56,355.6 L595.59,342.71 L600.1,343.51 L603.65,375.75 L608.16,339.48 L612.19,344.32 L616.22,352.38 L624.6,339.48 L628.63,355.6 L632.66,343.51 L637.49,351.57 L641.52,383.8 L645.55,370.91 L649.58,372.52 L653.61,319.34 L658.44,372.52 L662.47,374.13 L666.5,354.79 L670.53,362.05 L674.56,377.36 L678.59,384.61 L682.62,353.18 L686.0,358.82 L691.64,357.21 L695.67,333.84 L699.7,366.88 L703.41,374.13 L707.76,369.3 L711.79,354.79 L716.3,332.23 L720.65,345.93 L724.68,347.54 L728.71,339.48 L733.54,358.02 L737.57,345.12 L741.6,332.23 L745.63,364.46 L749.66,345.93 L754.49,380.58 L758.52,383.0 L763.03,364.46 L766.58,363.66 L770.61,370.91 L774.64,335.46 L779.15,375.75 L783.5,353.18 L787.53,367.69 L791.56,329.81 L796.39,376.55 L800.42,378.97 L804.45,351.57 L808.48,383.8 L812.51,365.27 L816.54,354.79 L820.57,331.43 L824.92,342.71 L829.43,373.33 L833.95,365.27 L837.49,365.27 L841,356.41 L841,429 Z" fill="#808000" stroke="none"/><path d="M89,429 L89,350.91 L89.55,350.91 L98.09,381.954 L102.12,371.91949999999997 L110.17,384.7285 L115.01,365.41 L119.04,368.63 L123.39,341.24 L127.58,381.1865 L131.61,354.13 L135.64,387.793 L143.7,362.19 L148.05,383.843 L156.59,399.073 L160.46,354.13 L164.97,347.68 L169.48,365.41 L173.35,352.52 L177.86,355.724 L181.89,372.123 L185.6,348.49 L189.14,356.55 L193.66,356.55 L198.49,346.07 L202.36,364.584 L206.55,357.774 L210.58,341.24 L214.93,364.6 L219.44,354.13 L227.5,388.6785 L231.85,365.41 L235.88,392.0 L241.52,379.894 L248.45,329.96 L252.8,396.454 L256.83,376.2285 L260.86,365.41 L265.21,371.86 L269.72,368.63 L273.75,365.41 L277.78,360.9995 L281.81,359.8295 L286.0,375.89 L294.86,362.19 L298.89,363.8 L306.63,375.504 L311.46,350.91 L315.49,358.96 L323.39,336.4 L327.58,355.74 L331.93,356.55 L336.28,345.27 L340.79,358.96 L344.34,358.96 L348.53,347.68 L352.08,386.542 L356.91,365.41 L361.75,384.75 L365.77,386.36 L369.8,356.5285 L373.83,363.8 L378.18,385.013 L382.7,391.4575 L386.73,326.73 L390.75,368.63 L394.78,392.0 L398.81,387.22950000000003 L403.32,347.68 L407.19,389.56399999999996 L411.71,373.894 L415.73,365.41 L419.76,373.47 L424.28,370.25 L428.14,368.63 L432.66,346.494 L436.68,342.024 L441.04,344.723 L444.74,383.14 L449.09,330.76 L453.61,362.19 L457.64,375.461 L461.66,349.29 L465.69,346.07 L469.72,363.8 L474.56,370.25 L478.59,341.24 L482.62,352.52 L486.0,358.96 L490.83,379.0885 L494.86,379.91 L499.22,357.35 L503.41,386.36 L507.76,381.53 L511.79,357.35 L516.3,377.8385 L520.65,390.3685 L524.68,348.8285 L528.71,336.4 L532.74,391.2 L536.77,381.53 L540.79,361.7285 L544.82,365.834 L549.66,389.644 L553.69,368.893 L557.72,354.13 L561.75,385.8985 L565.77,374.45750000000004 L570.13,342.85 L574.32,350.91 L578.67,384.3 L582.7,354.13 L587.53,354.13 L591.56,362.2495 L595.59,352.52 L600.1,349.714 L603.65,377.521 L608.16,350.91 L612.19,355.74 L616.22,360.58 L624.6,346.1295 L628.63,361.364 L632.66,352.52 L637.49,362.19 L641.52,391.2 L645.55,378.3 L649.58,378.724 L653.61,331.57 L658.44,377.8385 L662.47,387.97 L666.5,363.8 L670.53,371.86 L674.56,384.75 L678.59,390.814 L682.62,362.19 L686.0,368.63 L691.64,363.8595 L695.67,344.46 L699.7,375.08 L703.41,380.7795 L707.76,375.504 L711.79,362.19 L716.3,346.07 L720.65,355.74 L724.68,358.96 L728.71,347.68 L733.54,364.224 L737.57,355.74 L741.6,342.85 L745.63,375.08 L749.66,355.74 L754.49,387.22950000000003 L758.52,386.9875 L763.03,378.3 L766.58,375.08 L770.61,379.91 L774.64,346.07 L779.15,379.292 L783.5,359.384 L787.53,378.3 L791.56,350.91 L796.39,391.2 L800.42,389.58 L804.45,360.58 L808.48,388.6785 L812.51,376.69 L816.54,365.41 L820.57,350.91 L824.92,352.52 L829.43,379.0885 L833.95,371.474 L837.49,375.08 L841,367.02 L841,429 Z" fill="#ff8c5a" stroke="none"/><path d="M89,429 L89,356.41 L89.55,356.41 L98.09,387.03 L102.12,377.36 L110.17,389.44 L115.01,370.91 L119.04,374.13 L123.39,346.74 L127.58,383.0 L131.61,359.63 L135.64,391.06 L143.7,367.69 L148.05,387.83 L156.59,402.34 L160.46,359.63 L164.97,353.18 L169.48,370.91 L173.35,358.02 L177.86,360.44 L181.89,375.75 L185.6,353.99 L189.14,362.05 L193.66,362.05 L198.49,351.57 L202.36,369.3 L206.55,362.85 L210.58,346.74 L214.93,370.1 L219.44,359.63 L227.5,392.67 L231.85,370.91 L235.88,397.5 L241.52,384.61 L248.45,335.46 L252.8,401.53 L256.83,380.58 L260.86,370.91 L265.21,377.36 L269.72,374.13 L273.75,370.91 L277.78,366.08 L281.81,365.27 L286.0,381.39 L294.86,367.69 L298.89,369.3 L306.63,380.58 L311.46,356.41 L315.49,364.46 L323.39,341.9 L327.58,361.24 L331.93,362.05 L336.28,350.77 L340.79,364.46 L344.34,364.46 L348.53,353.18 L352.08,389.44 L356.91,370.91 L361.75,390.25 L365.77,391.86 L369.8,361.24 L373.83,369.3 L378.18,388.64 L382.7,395.08 L386.73,332.23 L390.75,374.13 L394.78,397.5 L398.81,392.67 L403.32,353.18 L407.19,394.28 L411.71,378.97 L415.73,370.91 L419.76,378.97 L424.28,375.75 L428.14,374.13 L432.66,351.57 L436.68,346.74 L441.04,348.35 L444.74,388.64 L449.09,336.26 L453.61,367.69 L457.64,376.55 L461.66,354.79 L465.69,351.57 L469.72,369.3 L474.56,375.75 L478.59,346.74 L482.62,358.02 L486.0,364.46 L490.83,383.8 L494.86,385.41 L499.22,362.85 L503.41,391.86 L507.76,387.03 L511.79,362.85 L516.3,382.19 L520.65,395.08 L524.68,353.18 L528.71,341.9 L532.74,396.7 L536.77,387.03 L540.79,366.08 L544.82,370.91 L549.66,395.08 L553.69,372.52 L557.72,359.63 L561.75,390.25 L565.77,377.36 L570.13,348.35 L574.32,356.41 L578.67,383.8 L582.7,359.63 L587.53,359.63 L591.56,367.69 L595.59,358.02 L600.1,354.79 L603.65,378.97 L608.16,356.41 L612.19,361.24 L616.22,366.08 L624.6,351.57 L628.63,366.08 L632.66,358.02 L637.49,367.69 L641.52,396.7 L645.55,383.8 L649.58,383.8 L653.61,337.07 L658.44,382.19 L662.47,393.47 L666.5,369.3 L670.53,377.36 L674.56,390.25 L678.59,395.89 L682.62,367.69 L686.0,374.13 L691.64,369.3 L695.67,349.96 L699.7,380.58 L703.41,386.22 L707.76,380.58 L711.79,367.69 L716.3,351.57 L720.65,361.24 L724.68,364.46 L728.71,353.18 L733.54,369.3 L737.57,361.24 L741.6,348.35 L745.63,380.58 L749.66,361.24 L754.49,392.67 L758.52,390.25 L763.03,383.8 L766.58,380.58 L770.61,385.41 L774.64,351.57 L779.15,382.19 L783.5,364.46 L787.53,383.8 L791.56,356.41 L796.39,396.7 L800.42,395.08 L804.45,366.08 L808.48,392.67 L812.51,382.19 L816.54,370.91 L820.57,356.41 L824.92,358.02 L829.43,383.8 L833.95,376.55 L837.49,380.58 L841,372.52 L841,429 Z" fill="#669ea0" stroke="none"/><polyline points="89,326.59 89.55,326.59 98.09,375.75 102.12,365.27 110.17,378.97 115.01,351.57 119.04,351.89 123.39,330.62 127.58,378.97 131.61,340.29 135.64,383.8 143.7,345.93 148.05,378.97 156.59,395.08 160.46,343.51 164.97,333.84 169.48,353.18 173.35,343.51 177.86,349.96 181.89,367.69 185.6,340.29 189.14,342.71 193.66,338.68 198.49,337.87 202.36,358.82 206.55,351.57 210.58,329.01 214.93,356.41 219.44,338.68 227.5,383.8 231.85,354.79 235.88,382.19 241.52,374.13 248.45,312.89 252.8,390.25 256.83,370.91 260.86,357.21 265.21,364.46 269.72,353.18 273.75,354.79 277.78,354.79 281.81,353.18 286.0,361.24 294.86,346.74 298.89,348.35 306.63,369.3 311.46,343.51 315.49,351.57 323.39,311.28 327.58,348.35 331.93,348.35 336.28,337.07 340.79,342.71 344.34,342.71 348.53,335.46 352.08,383.0 356.91,358.02 361.75,375.75 365.77,378.16 369.8,350.77 373.83,351.57 378.18,380.58 382.7,387.03 386.73,309.67 390.75,361.24 394.78,381.39 398.81,380.58 403.32,331.43 407.19,383.8 411.71,367.69 415.73,353.18 419.76,361.24 424.28,353.99 428.14,353.18 432.66,340.29 436.68,336.26 441.04,340.29 444.74,372.52 449.09,315.31 453.61,353.18 457.64,374.13 461.66,340.29 465.69,335.46 469.72,354.79 474.56,359.63 478.59,330.62 482.62,337.07 486.0,348.35 490.83,373.33 494.86,371.72 499.22,346.74 503.41,374.94 507.76,370.91 511.79,348.35 516.3,372.52 520.65,384.61 524.68,343.51 528.71,325.79 532.74,378.97 536.77,373.33 540.79,356.41 544.82,359.63 549.66,383.0 553.69,364.46 557.72,340.29 561.75,380.58 565.77,370.91 570.13,330.62 574.32,342.71 578.67,383.8 582.7,336.26 587.53,341.1 591.56,355.6 595.59,342.71 600.1,343.51 603.65,375.75 608.16,339.48 612.19,344.32 616.22,352.38 624.6,339.48 628.63,355.6 632.66,343.51 637.49,351.57 641.52,383.8 645.55,370.91 649.58,372.52 653.61,319.34 658.44,372.52 662.47,374.13 666.5,354.79 670.53,362.05 674.56,377.36 678.59,384.61 682.62,353.18 686.0,358.82 691.64,357.21 695.67,333.84 699.7,366.88 703.41,374.13 707.76,369.3 711.79,354.79 716.3,332.23 720.65,345.93 724.68,347.54 728.71,339.48 733.54,358.02 737.57,345.12 741.6,332.23 745.63,364.46 749.66,345.93 754.49,380.58 758.52,383.0 763.03,364.46 766.58,363.66 770.61,370.91 774.64,335.46 779.15,375.75 783.5,353.18 787.53,367.69 791.56,329.81 796.39,376.55 800.42,378.97 804.45,351.57 808.48,383.8 812.51,365.27 816.54,354.79 820.57,331.43 824.92,342.71 829.43,373.33 833.95,365.27 837.49,365.27 841,356.41" fill="none" stroke="#d8c080" stroke-width="1.5" stroke-linejoin="round" /><line x1="80" y1="305.5" x2="89" y2="305.5" stroke="#8a8a8a" stroke-width="1"/><line x1="80" y1="330.3" x2="89" y2="330.3" stroke="#8a8a8a" stroke-width="1"/><line x1="80" y1="355.1" x2="89" y2="355.1" stroke="#8a8a8a" stroke-width="1"/><line x1="80" y1="379.9" x2="89" y2="379.9" stroke="#8a8a8a" stroke-width="1"/><line x1="80" y1="404.7" x2="89" y2="404.7" stroke="#8a8a8a" stroke-width="1"/><line x1="80" y1="429.5" x2="89" y2="429.5" stroke="#8a8a8a" stroke-width="1"/><line x1="89.5" y1="305" x2="89.5" y2="430" stroke="#8a8a8a" stroke-width="1"/><line x1="89" y1="305.5" x2="842" y2="305.5" stroke="#8a8a8a" stroke-width="1"/><line x1="89" y1="429.5" x2="842" y2="429.5" stroke="#8a8a8a" stroke-width="1"/><line x1="841.5" y1="305" x2="841.5" y2="430" stroke="#ff0000" stroke-width="1.2"/><text x="77" y="309.5" font-size="12" fill="#fff" text-anchor="end" font-weight="normal" font-family='"Liberation Sans", sans-serif' >100%</text><text x="77" y="334.3" font-size="12" fill="#fff" text-anchor="end" font-weight="normal" font-family='"Liberation Sans", sans-serif' >80%</text><text x="77" y="359.1" font-size="12" fill="#fff" text-anchor="end" font-weight="normal" font-family='"Liberation Sans", sans-serif' >60%</text><text x="77" y="383.9" font-size="12" fill="#fff" text-anchor="end" font-weight="normal" font-family='"Liberation Sans", sans-serif' >40%</text><text x="77" y="408.7" font-size="12" fill="#fff" text-anchor="end" font-weight="normal" font-family='"Liberation Sans", sans-serif' >20%</text><text x="77" y="433.5" font-size="12" fill="#fff" text-anchor="end" font-weight="normal" font-family='"Liberation Sans", sans-serif' >0%</text><text x="193.94444444444446" y="444.4" font-size="12" fill="#fff" text-anchor="middle" font-weight="normal" font-family='"Liberation Sans", sans-serif' >7:25:00 AM</text><text x="319.27777777777777" y="444.4" font-size="12" fill="#fff" text-anchor="middle" font-weight="normal" font-family='"Liberation Sans", sans-serif' >7:30:00 AM</text><text x="444.6111111111111" y="444.4" font-size="12" fill="#fff" text-anchor="middle" font-weight="normal" font-family='"Liberation Sans", sans-serif' >7:35:00 AM</text><text x="569.9444444444443" y="444.4" font-size="12" fill="#fff" text-anchor="middle" font-weight="normal" font-family='"Liberation Sans", sans-serif' >7:40:00 AM</text><text x="695.2777777777778" y="444.4" font-size="12" fill="#fff" text-anchor="middle" font-weight="normal" font-family='"Liberation Sans", sans-serif' >7:45:00 AM</text><text x="820.6111111111111" y="444.4" font-size="12" fill="#fff" text-anchor="middle" font-weight="normal" font-family='"Liberation Sans", sans-serif' >7:50:00 AM</text><path d="M102.5,308.2 L109.7,321.6 L95.3,321.6 Z" fill="url(#wgrad)" stroke="#f2b800" stroke-width="2" stroke-linejoin="round"/><rect x="101.5" y="311.5" width="2" height="7" fill="#000"/><rect x="101.5" y="319.4" width="2" height="1.8" fill="#000"/><path d="M89,429.5 L89,424.5 L160.0,424.5 A5.0,5.0 0 0 1 165,429.5 Z" fill="#ffa500"/><line x1="91" y1="429.5" x2="163" y2="429.5" stroke="#555" stroke-width="1"/><rect x="256" y="424.5" width="47" height="10" rx="5.0" ry="5.0" fill="#ffa500"/><line x1="258" y1="429.5" x2="301" y2="429.5" stroke="#555" stroke-width="1"/><rect x="344" y="424.5" width="47" height="10" rx="5.0" ry="5.0" fill="#ffa500"/><line x1="346" y1="429.5" x2="389" y2="429.5" stroke="#555" stroke-width="1"/><rect x="484" y="424.5" width="60" height="10" rx="5.0" ry="5.0" fill="#ffa500"/><line x1="486" y1="429.5" x2="542" y2="429.5" stroke="#555" stroke-width="1"/><rect x="723" y="424.5" width="72" height="10" rx="5.0" ry="5.0" fill="#ffa500"/><line x1="725" y1="429.5" x2="793" y2="429.5" stroke="#555" stroke-width="1"/><line x1="74" y1="519.5" x2="506" y2="519.5" stroke="#9a9a9a" stroke-width="1" stroke-dasharray="1 2"/><line x1="74" y1="543.9000000000001" x2="506" y2="543.9000000000001" stroke="#9a9a9a" stroke-width="1" stroke-dasharray="1 2"/><line x1="74" y1="568.3000000000001" x2="506" y2="568.3000000000001" stroke="#9a9a9a" stroke-width="1" stroke-dasharray="1 2"/><line x1="207.2" y1="494.6" x2="207.2" y2="595.2" stroke="#9a9a9a" stroke-width="1" stroke-dasharray="1 2"/><line x1="351.2" y1="494.6" x2="351.2" y2="595.2" stroke="#9a9a9a" stroke-width="1" stroke-dasharray="1 2"/><line x1="494.6" y1="494.6" x2="494.6" y2="595.2" stroke="#9a9a9a" stroke-width="1" stroke-dasharray="1 2"/><rect x="74" y="515.4" width="420" height="7" fill="url(#dots)"/><rect x="74" y="522.4" width="420" height="18" fill="#858585"/><rect x="74" y="540.1" width="420" height="1.5" fill="#b0c4de"/><rect x="74" y="541.6" width="420" height="3.8" fill="#808000"/><rect x="74" y="545.4" width="420" height="7" fill="#ff8c5a"/><rect x="74" y="552.4" width="420" height="39.80000000000007" fill="#669ea0"/><line x1="69" y1="495.1" x2="74" y2="495.1" stroke="#8a8a8a" stroke-width="1"/><line x1="69" y1="519.5" x2="74" y2="519.5" stroke="#8a8a8a" stroke-width="1"/><line x1="69" y1="543.9000000000001" x2="74" y2="543.9000000000001" stroke="#8a8a8a" stroke-width="1"/><line x1="69" y1="568.3000000000001" x2="74" y2="568.3000000000001" stroke="#8a8a8a" stroke-width="1"/><line x1="69" y1="592.7" x2="74" y2="592.7" stroke="#8a8a8a" stroke-width="1"/><line x1="74.5" y1="494.6" x2="74.5" y2="593.2" stroke="#8a8a8a" stroke-width="1"/><line x1="74" y1="495.1" x2="507" y2="495.1" stroke="#8a8a8a" stroke-width="1"/><line x1="74" y1="592.7" x2="507" y2="592.7" stroke="#8a8a8a" stroke-width="1"/><line x1="506.5" y1="494.6" x2="506.5" y2="593.2" stroke="#8a8a8a" stroke-width="1"/><line x1="494.5" y1="494.6" x2="494.5" y2="593.2" stroke="#ff0000" stroke-width="1.2"/><text x="63" y="499.1" font-size="12" fill="#fff" text-anchor="end" font-weight="normal" font-family='"Liberation Sans", sans-serif' >20,000</text><text x="63" y="523.5" font-size="12" fill="#fff" text-anchor="end" font-weight="normal" font-family='"Liberation Sans", sans-serif' >15,000</text><text x="63" y="547.9" font-size="12" fill="#fff" text-anchor="end" font-weight="normal" font-family='"Liberation Sans", sans-serif' >10,000</text><text x="63" y="572.3" font-size="12" fill="#fff" text-anchor="end" font-weight="normal" font-family='"Liberation Sans", sans-serif' >5,000</text><text x="63" y="596.7" font-size="12" fill="#fff" text-anchor="end" font-weight="normal" font-family='"Liberation Sans", sans-serif' >0</text><text x="207.2" y="607.9" font-size="12" fill="#fff" text-anchor="middle" font-weight="normal" font-family='"Liberation Sans", sans-serif' >7:30:00 AM</text><text x="351.2" y="607.9" font-size="12" fill="#fff" text-anchor="middle" font-weight="normal" font-family='"Liberation Sans", sans-serif' >7:40:00 AM</text><text x="494.6" y="607.9" font-size="12" fill="#fff" text-anchor="middle" font-weight="normal" font-family='"Liberation Sans", sans-serif' >7:50:00 AM</text><rect x="137" y="629.3" width="22" height="10" fill="#b0c4de"/><text x="164.5" y="640.1" font-size="12" fill="#fff" text-anchor="start" font-weight="normal" font-family='"Liberation Sans", sans-serif' >File cache</text><rect x="233.4" y="629.3" width="21" height="10" fill="#808080"/><text x="260" y="640.1" font-size="12" fill="#fff" text-anchor="start" font-weight="normal" font-family='"Liberation Sans", sans-serif' >Other</text><rect x="305" y="629.3" width="22" height="10" fill="url(#dots)" stroke="#777" stroke-width="1"/><text x="331.8" y="640.1" font-size="12" fill="#fff" text-anchor="start" font-weight="normal" font-family='"Liberation Sans", sans-serif' >Available</text><line x1="562" y1="514.7" x2="872" y2="514.7" stroke="#9a9a9a" stroke-width="1" stroke-dasharray="1 2"/><line x1="562" y1="534.4" x2="872" y2="534.4" stroke="#9a9a9a" stroke-width="1" stroke-dasharray="1 2"/><line x1="562" y1="554.1" x2="872" y2="554.1" stroke="#9a9a9a" stroke-width="1" stroke-dasharray="1 2"/><line x1="562" y1="573.8" x2="872" y2="573.8" stroke="#9a9a9a" stroke-width="1" stroke-dasharray="1 2"/><line x1="657.0" y1="494.5" x2="657.0" y2="596" stroke="#9a9a9a" stroke-width="1" stroke-dasharray="1 2"/><line x1="760.8" y1="494.5" x2="760.8" y2="596" stroke="#9a9a9a" stroke-width="1" stroke-dasharray="1 2"/><line x1="864.0" y1="494.5" x2="864.0" y2="596" stroke="#9a9a9a" stroke-width="1" stroke-dasharray="1 2"/><line x1="562" y1="592.5" x2="872" y2="592.5" stroke="#ff4500" stroke-width="1"/><polyline points="562.0,574.16 563.68,591.92 565.37,563.61 567.05,567.75 568.74,557.92 570.42,592.78 572.11,560.57 573.79,591.43 575.48,575.07 577.16,592.36 578.85,531.93 580.53,591.49 582.22,562.67 583.9,592.14 585.59,557.03 587.27,592.68 588.96,532.72 590.64,568.15 592.33,558.73 594.01,567.06 595.7,562.88 597.38,592.65 599.07,571.96 600.75,592.38 602.43,557.05 604.12,591.46 605.8,557.47 607.49,592.72 609.17,559.69 610.86,592.85 612.54,556.29 614.23,591.9 615.91,571.34 617.6,591.98 619.28,562.85 620.97,591.74 622.65,516.56 624.34,592.81 626.02,565.59 627.71,577.74 629.39,558.17 631.08,592.25 632.76,557.49 634.45,592.41 636.13,558.87 637.82,579.19 639.5,558.06 641.18,591.47 642.87,562.32 644.55,591.45 646.24,564.53 647.92,592.55 649.61,564.22 651.29,565.84 652.98,569.22 654.66,577.75 656.35,561.92 658.03,573.12 659.72,535.08 661.4,592.37 663.09,558.13 664.77,591.87 666.46,524.84 668.14,567.3 669.83,556.09 671.51,592.09 673.2,533.9 674.88,573.65 676.57,561.18 678.25,592.33 679.93,559.72 681.62,567.37 683.3,557.14 684.99,570.28 686.67,562.29 688.36,566.75 690.04,561.0 691.73,592.39 693.41,562.69 695.1,591.9 696.78,557.64 698.47,576.76 700.15,560.29 701.84,591.53 703.52,562.99 705.21,572.63 706.89,560.34 708.58,581.18 710.26,557.77 711.95,591.56 713.63,560.98 715.32,592.63 717.0,505.14 718.68,592.5 720.37,569.61 722.05,574.56 723.74,536.66 725.42,592.18 727.11,561.84 728.79,591.93 730.48,535.87 732.16,591.7 733.85,558.24 735.53,564.25 737.22,561.7 738.9,591.74 740.59,572.82 742.27,591.43 743.96,564.2 745.64,592.93 747.33,559.75 749.01,592.78 750.7,567.36 752.38,592.24 754.07,558.42 755.75,591.7 757.43,536.66 759.12,579.59 760.8,564.12 762.49,591.57 764.17,561.11 765.86,591.51 767.54,557.03 769.23,568.23 770.91,560.99 772.6,591.84 774.28,557.94 775.97,592.33 777.65,557.52 779.34,592.78 781.02,556.74 782.71,592.8 784.39,562.56 786.08,591.49 787.76,561.79 789.45,592.31 791.13,561.53 792.82,577.17 794.5,556.42 796.18,567.81 797.87,557.51 799.55,591.77 801.24,563.92 802.92,567.0 804.61,529.17 806.29,591.91 807.98,564.07 809.66,592.51 811.35,559.66 813.03,592.81 814.72,559.1 816.4,591.61 818.09,559.27 819.77,592.58 821.46,557.5 823.14,592.15 824.83,555.79 826.51,592.88 828.2,563.29 829.88,592.25 831.57,557.23 833.25,592.78 834.93,563.0 836.62,592.79 838.3,561.41 839.99,591.59 841.67,561.59 843.36,591.95 845.04,563.4 846.73,592.74 848.41,557.94 850.1,592.45 851.78,517.75 853.47,565.27 855.15,562.01 856.84,579.44 858.52,556.95 860.21,592.72 861.89,571.19 863.58,592.92 865.26,557.19 866.95,574.02 868.63,563.17 870.32,579.86 872.0,555.8" fill="none" stroke="#ff8c00" stroke-width="1.1" stroke-linejoin="round" /><line x1="557" y1="495.0" x2="562" y2="495.0" stroke="#8a8a8a" stroke-width="1"/><line x1="557" y1="514.7" x2="562" y2="514.7" stroke="#8a8a8a" stroke-width="1"/><line x1="557" y1="534.4" x2="562" y2="534.4" stroke="#8a8a8a" stroke-width="1"/><line x1="557" y1="554.1" x2="562" y2="554.1" stroke="#8a8a8a" stroke-width="1"/><line x1="557" y1="573.8" x2="562" y2="573.8" stroke="#8a8a8a" stroke-width="1"/><line x1="557" y1="593.5" x2="562" y2="593.5" stroke="#8a8a8a" stroke-width="1"/><line x1="562.5" y1="494.5" x2="562.5" y2="594" stroke="#8a8a8a" stroke-width="1"/><line x1="562" y1="495.0" x2="873" y2="495.0" stroke="#8a8a8a" stroke-width="1"/><line x1="562" y1="593.5" x2="873" y2="593.5" stroke="#8a8a8a" stroke-width="1"/><line x1="872.5" y1="494.5" x2="872.5" y2="594" stroke="#ff0000" stroke-width="1.2"/><text x="557" y="499.0" font-size="12" fill="#fff" text-anchor="end" font-weight="normal" font-family='"Liberation Sans", sans-serif' >3</text><text x="557" y="518.7" font-size="12" fill="#fff" text-anchor="end" font-weight="normal" font-family='"Liberation Sans", sans-serif' >2</text><text x="557" y="538.4" font-size="12" fill="#fff" text-anchor="end" font-weight="normal" font-family='"Liberation Sans", sans-serif' >2</text><text x="557" y="558.1" font-size="12" fill="#fff" text-anchor="end" font-weight="normal" font-family='"Liberation Sans", sans-serif' >1</text><text x="557" y="577.8" font-size="12" fill="#fff" text-anchor="end" font-weight="normal" font-family='"Liberation Sans", sans-serif' >1</text><text x="557" y="597.5" font-size="12" fill="#fff" text-anchor="end" font-weight="normal" font-family='"Liberation Sans", sans-serif' >0</text><text x="657.0" y="607.8" font-size="12" fill="#fff" text-anchor="middle" font-weight="normal" font-family='"Liberation Sans", sans-serif' >7:30:00 AM</text><text x="760.8" y="607.8" font-size="12" fill="#fff" text-anchor="middle" font-weight="normal" font-family='"Liberation Sans", sans-serif' >7:40:00 AM</text><text x="864.0" y="607.8" font-size="12" fill="#fff" text-anchor="middle" font-weight="normal" font-family='"Liberation Sans", sans-serif' >7:50:00 AM</text><text x="607" y="640" font-size="12" fill="#fff" text-anchor="start" font-weight="normal" font-family='"Liberation Sans", sans-serif' >Faults:</text><rect x="657" y="629.4" width="22" height="10" fill="#ff8c00"/><text x="684" y="640.2" font-size="12" fill="#fff" text-anchor="start" font-weight="normal" font-family='"Liberation Sans", sans-serif' >Read</text><rect x="727" y="629.4" width="22" height="10" fill="#ff4500"/><text x="754" y="640.2" font-size="12" fill="#fff" text-anchor="start" font-weight="normal" font-family='"Liberation Sans", sans-serif' >Write</text><line x1="75" y1="709.55" x2="840" y2="709.55" stroke="#9a9a9a" stroke-width="1" stroke-dasharray="1 2"/><line x1="75" y1="732.1" x2="840" y2="732.1" stroke="#9a9a9a" stroke-width="1" stroke-dasharray="1 2"/><line x1="75" y1="754.6500000000001" x2="840" y2="754.6500000000001" stroke="#9a9a9a" stroke-width="1" stroke-dasharray="1 2"/><line x1="182.1" y1="686.5" x2="182.1" y2="779.7" stroke="#9a9a9a" stroke-width="1" stroke-dasharray="1 2"/><line x1="309.9" y1="686.5" x2="309.9" y2="779.7" stroke="#9a9a9a" stroke-width="1" stroke-dasharray="1 2"/><line x1="437.1" y1="686.5" x2="437.1" y2="779.7" stroke="#9a9a9a" stroke-width="1" stroke-dasharray="1 2"/><line x1="565.0" y1="686.5" x2="565.0" y2="779.7" stroke="#9a9a9a" stroke-width="1" stroke-dasharray="1 2"/><line x1="692.0" y1="686.5" x2="692.0" y2="779.7" stroke="#9a9a9a" stroke-width="1" stroke-dasharray="1 2"/><line x1="819.0" y1="686.5" x2="819.0" y2="779.7" stroke="#9a9a9a" stroke-width="1" stroke-dasharray="1 2"/><polyline points="75.0,771.06 87.88,776.7 100.76,776.7 113.64,771.06 126.53,775.57 139.41,776.14 152.29,776.14 165.17,776.14 178.05,771.06 190.93,776.7 203.81,771.06 216.69,771.06 229.58,773.32 242.46,776.7 255.34,773.32 268.22,774.45 281.1,776.7 293.98,776.7 306.86,776.7 319.75,776.14 332.63,776.14 345.51,773.32 358.39,773.32 371.27,776.7 384.15,773.32 397.03,776.14 409.92,771.06 422.8,771.06 435.68,771.06 448.56,773.32 461.44,774.45 474.32,776.14 487.2,774.45 500.08,773.32 512.97,775.57 525.85,776.7 538.73,776.14 551.61,771.06 564.49,774.45 577.37,775.57 590.25,775.57 603.14,776.14 616.02,776.14 628.9,775.57 641.78,776.7 654.66,776.7 667.54,774.45 680.42,776.7 693.31,775.57 706.19,775.57 719.07,773.32 731.95,775.57 744.83,776.7 757.71,771.06 770.59,774.45 783.47,773.32 796.36,776.7 809.24,774.45 822.12,776.7 835.0,773.32" fill="none" stroke="#20b2aa" stroke-width="1.2" stroke-linejoin="round" /><polyline points="75.0,775.57 87.88,767.68 100.76,765.43 113.64,776.7 126.53,775.57 139.41,774.45 152.29,760.92 165.17,762.04 178.05,774.45 190.93,776.14 203.81,775.57 216.69,766.55 229.58,774.45 242.46,776.7 255.34,776.7 268.22,773.32 281.1,706.8 293.98,775.57 306.86,776.7 319.75,776.7 332.63,724.84 345.51,776.14 358.39,776.7 371.27,776.14 384.15,773.32 397.03,773.32 409.92,774.45 422.8,696.65 435.68,776.7 448.56,776.7 461.44,774.45 474.32,751.89 487.2,775.57 500.08,758.66 512.97,773.32 525.85,776.7 538.73,776.7 551.61,773.32 564.49,776.14 577.37,733.86 590.25,775.57 603.14,776.7 616.02,774.45 628.9,773.32 641.78,776.7 654.66,776.7 667.54,776.7 680.42,776.7 693.31,773.32 706.19,776.7 719.07,776.7 731.95,776.14 744.83,776.14 757.71,776.7 770.59,774.45 783.47,691.01 796.36,774.45 809.24,774.45 822.12,776.7 835.0,720.33" fill="none" stroke="#98fb98" stroke-width="1.2" stroke-linejoin="round" /><line x1="70" y1="687.0" x2="75" y2="687.0" stroke="#8a8a8a" stroke-width="1"/><line x1="70" y1="709.55" x2="75" y2="709.55" stroke="#8a8a8a" stroke-width="1"/><line x1="70" y1="732.1" x2="75" y2="732.1" stroke="#8a8a8a" stroke-width="1"/><line x1="70" y1="754.6500000000001" x2="75" y2="754.6500000000001" stroke="#8a8a8a" stroke-width="1"/><line x1="70" y1="777.2" x2="75" y2="777.2" stroke="#8a8a8a" stroke-width="1"/><line x1="75.5" y1="686.5" x2="75.5" y2="777.7" stroke="#8a8a8a" stroke-width="1"/><line x1="75" y1="687.0" x2="841" y2="687.0" stroke="#8a8a8a" stroke-width="1"/><line x1="75" y1="777.2" x2="841" y2="777.2" stroke="#8a8a8a" stroke-width="1"/><line x1="840.5" y1="686.5" x2="840.5" y2="777.7" stroke="#8a8a8a" stroke-width="1"/><line x1="835.5" y1="686.5" x2="835.5" y2="777.7" stroke="#ff0000" stroke-width="1.2"/><text x="70" y="691.0" font-size="12" fill="#fff" text-anchor="end" font-weight="normal" font-family='"Liberation Sans", sans-serif' >800</text><text x="70" y="713.5" font-size="12" fill="#fff" text-anchor="end" font-weight="normal" font-family='"Liberation Sans", sans-serif' >600</text><text x="70" y="736.1" font-size="12" fill="#fff" text-anchor="end" font-weight="normal" font-family='"Liberation Sans", sans-serif' >400</text><text x="70" y="758.7" font-size="12" fill="#fff" text-anchor="end" font-weight="normal" font-family='"Liberation Sans", sans-serif' >200</text><text x="70" y="781.2" font-size="12" fill="#fff" text-anchor="end" font-weight="normal" font-family='"Liberation Sans", sans-serif' >0</text><text x="182.1" y="791.8" font-size="12" fill="#fff" text-anchor="middle" font-weight="normal" font-family='"Liberation Sans", sans-serif' >7:25:00 AM</text><text x="309.9" y="791.8" font-size="12" fill="#fff" text-anchor="middle" font-weight="normal" font-family='"Liberation Sans", sans-serif' >7:30:00 AM</text><text x="437.1" y="791.8" font-size="12" fill="#fff" text-anchor="middle" font-weight="normal" font-family='"Liberation Sans", sans-serif' >7:35:00 AM</text><text x="565.0" y="791.8" font-size="12" fill="#fff" text-anchor="middle" font-weight="normal" font-family='"Liberation Sans", sans-serif' >7:40:00 AM</text><text x="692.0" y="791.8" font-size="12" fill="#fff" text-anchor="middle" font-weight="normal" font-family='"Liberation Sans", sans-serif' >7:45:00 AM</text><text x="819.0" y="791.8" font-size="12" fill="#fff" text-anchor="middle" font-weight="normal" font-family='"Liberation Sans", sans-serif' >7:50:00 AM</text><text x="586" y="665" font-size="12" fill="#fff" text-anchor="start" font-weight="normal" font-family='"Liberation Sans", sans-serif' >Disk</text><rect x="614.5" y="651.5" width="226" height="21" fill="#e1e1e1" stroke="#adadad" stroke-width="1"/><text x="618" y="666" font-size="11" fill="#000" text-anchor="start" font-weight="normal" font-family='"Liberation Sans", sans-serif' >Total</text><polyline points="826,659 830,663 834,659" fill="none" stroke="#333" stroke-width="1.2"/><rect x="132" y="817.3" width="22" height="10" fill="#98fb98"/><text x="159" y="828.1" font-size="12" fill="#fff" text-anchor="start" font-weight="normal" font-family='"Liberation Sans", sans-serif' >ms/Read</text><rect x="221" y="817.3" width="22" height="10" fill="#20b2aa"/><text x="248" y="828.1" font-size="12" fill="#fff" text-anchor="start" font-weight="normal" font-family='"Liberation Sans", sans-serif' >ms/Write</text><line x1="959" y1="137.2" x2="1219" y2="137.2" stroke="#9a9a9a" stroke-width="1" stroke-dasharray="1 2"/><line x1="959" y1="173.9" x2="1219" y2="173.9" stroke="#9a9a9a" stroke-width="1" stroke-dasharray="1 2"/><line x1="1039.3" y1="117" x2="1039.3" y2="213" stroke="#9a9a9a" stroke-width="1" stroke-dasharray="1 2"/><line x1="1126.1" y1="117" x2="1126.1" y2="213" stroke="#9a9a9a" stroke-width="1" stroke-dasharray="1 2"/><line x1="1213.0" y1="117" x2="1213.0" y2="213" stroke="#9a9a9a" stroke-width="1" stroke-dasharray="1 2"/><polyline points="959.0,208.32 960.45,208.04 961.91,207.86 963.36,209.04 964.81,208.34 966.26,209.04 967.72,209.28 969.17,208.64 970.62,207.7 972.07,208.87 973.53,208.81 974.98,208.2 976.43,208.86 977.88,209.19 979.34,208.55 980.79,208.58 982.24,209.04 983.69,208.02 985.15,208.02 986.6,208.23 988.05,208.93 989.5,208.87 990.96,209.39 992.41,209.03 993.86,209.35 995.31,208.97 996.77,208.64 998.22,207.76 999.67,208.89 1001.12,208.59 1002.58,208.79 1004.03,209.11 1005.48,208.05 1006.93,208.92 1008.39,209.01 1009.84,208.9 1011.29,208.84 1012.74,208.39 1014.2,208.98 1015.65,209.19 1017.1,208.67 1018.55,209.37 1020.01,209.78 1021.46,209.12 1022.91,208.55 1024.36,208.5 1025.82,208.01 1027.27,207.76 1028.72,207.38 1030.17,207.41 1031.63,208.64 1033.08,208.63 1034.53,206.41 1035.98,209.02 1037.44,208.86 1038.89,208.79 1040.34,208.48 1041.79,208.74 1043.25,209.31 1044.7,209.22 1046.15,209.05 1047.6,208.15 1049.06,209.15 1050.51,209.09 1051.96,208.34 1053.41,208.5 1054.87,208.92 1056.32,209.09 1057.77,209.49 1059.22,209.32 1060.68,206.91 1062.13,209.06 1063.58,208.98 1065.03,207.98 1066.49,208.96 1067.94,208.72 1069.39,208.66 1070.84,207.8 1072.3,207.29 1073.75,208.51 1075.2,208.78 1076.65,205.29 1078.11,207.36 1079.56,207.9 1081.01,208.52 1082.46,207.75 1083.92,207.42 1085.37,208.35 1086.82,208.24 1088.27,208.83 1089.73,208.2 1091.18,209.19 1092.63,209.72 1094.08,208.7 1095.54,208.3 1096.99,207.68 1098.44,207.99 1099.89,208.44 1101.35,209.29 1102.8,208.29 1104.25,208.62 1105.7,208.38 1107.16,208.45 1108.61,209.16 1110.06,209.46 1111.51,208.2 1112.97,208.57 1114.42,208.41 1115.87,207.63 1117.32,207.91 1118.78,208.67 1120.23,207.8 1121.68,208.22 1123.13,207.93 1124.59,208.32 1126.04,208.09 1127.49,208.1 1128.94,207.73 1130.4,207.58 1131.85,207.59 1133.3,205.98 1134.75,207.78 1136.21,208.9 1137.66,208.05 1139.11,207.39 1140.56,208.65 1142.02,208.74 1143.47,208.38 1144.92,208.63 1146.37,208.89 1147.83,208.21 1149.28,208.99 1150.73,208.82 1152.18,209.15 1153.64,208.73 1155.09,208.91 1156.54,207.92 1157.99,207.37 1159.45,208.38 1160.9,208.38 1162.35,208.8 1163.8,208.48 1165.26,208.29 1166.71,208.9 1168.16,206.34 1169.61,209.05 1171.07,208.19 1172.52,207.51 1173.97,208.84 1175.42,209.22 1176.88,208.33 1178.33,207.85 1179.78,207.82 1181.23,208.29 1182.69,207.71 1184.14,207.35 1185.59,208.25 1187.04,209.31 1188.5,208.1 1189.95,207.77 1191.4,208.57 1192.85,209.41 1194.31,209.18 1195.76,209.64 1197.21,209.67 1198.66,208.65 1200.12,209.11 1201.57,209.48 1203.02,209.35 1204.47,208.38 1205.93,207.62 1207.38,207.59 1208.83,208.84 1210.28,208.33 1211.74,208.3 1213.19,207.67 1214.64,208.38 1216.09,207.58 1217.55,208.61 1219.0,208.54" fill="none" stroke="#ff6a3a" stroke-width="1.0" stroke-linejoin="round" /><polyline points="960.22,177.63 963.98,157.76 966.67,177.63 969.67,166.35 972.57,172.26 975.26,191.6 978.48,154.0 981.17,181.93 983.85,152.39 987.08,183.0 989.76,163.13 992.98,159.37 997.28,176.56 1001.25,144.87 1004.26,181.93 1006.95,169.58 1009.63,180.85 1012.85,170.11 1015.86,189.45 1018.76,166.35 1021.45,183.0 1024.45,157.22 1027.89,188.37 1030.58,163.67 1033.26,159.37 1036.48,166.35 1038.63,164.21 1042.93,164.74 1045.08,167.96 1048.3,181.93 1050.45,179.24 1053.13,179.24 1056.36,148.63 1059.04,183.0 1062.05,154.0 1064.95,193.21 1067.63,134.67 1070.32,189.45 1073.54,169.58 1076.23,180.85 1079.45,163.13 1082.13,172.26 1084.82,171.19 1088.58,171.72 1090.0,179.78 1094.08,153.46 1096.98,189.45 1099.67,176.56 1101.82,179.78 1105.57,140.04 1108.8,189.45 1111.48,145.95 1114.17,184.08 1120.08,159.91 1123.3,187.3 1125.66,149.7 1128.67,186.22 1131.35,163.13 1135.11,170.11 1137.26,181.93 1140.27,165.28 1143.71,175.48 1146.39,178.71 1148.86,146.48 1151.44,173.34 1154.45,155.61 1157.67,184.08 1160.35,164.74 1163.58,187.3 1166.26,172.26 1169.27,152.39 1172.17,180.85 1174.85,175.48 1176.79,175.48 1180.76,154.0 1184.31,178.71 1186.67,192.67 1192.04,166.35 1194.73,180.85 1197.41,177.09 1200.63,179.78 1203.64,183.54 1206.54,159.37 1209.23,169.04 1212.45,157.22 1215.46,189.45 1218.68,173.34" fill="none" stroke="#3cb371" stroke-width="1.3" stroke-linejoin="round" /><polyline points="960.22,189.45 961.83,184.08 966.67,192.13 968.28,179.24 970.96,189.45 973.11,173.87 975.8,197.5 978.48,184.08 982.78,192.13 985.46,175.48 988.15,189.98 991.37,179.78 994.06,193.74 997.28,173.34 999.96,192.13 1001.58,179.24 1004.26,189.45 1006.41,181.39 1009.63,193.74 1012.85,175.48 1016.08,195.35 1019.3,184.08 1021.45,176.56 1024.13,183.54 1026.82,190.52 1031.11,177.63 1034.34,189.98 1037.56,184.08 1040.24,167.96 1042.93,185.15 1047.23,183.0 1050.45,193.74 1052.6,174.95 1055.28,189.98 1059.04,183.0 1062.8,173.34 1065.49,194.82 1068.71,174.41 1070.86,189.45 1075.15,176.02 1078.37,189.45 1081.6,193.74 1083.75,170.11 1086.97,187.3 1090.19,178.71 1094.3,175.48 1096.44,193.21 1099.67,189.45 1101.82,179.78 1103.96,185.15 1108.26,195.35 1111.48,175.48 1113.63,189.45 1115.78,181.93 1119.0,189.98 1121.15,185.15 1123.3,191.06 1125.98,179.78 1128.67,193.74 1130.82,174.41 1132.96,187.3 1136.19,192.13 1139.41,183.0 1142.63,187.3 1147.47,176.56 1150.15,187.3 1152.84,193.21 1155.52,174.41 1158.74,170.11 1160.89,181.93 1163.58,194.28 1166.26,180.85 1169.48,187.3 1172.71,191.6 1175.93,177.63 1179.15,188.37 1182.37,183.0 1186.13,195.35 1190.97,183.0 1194.73,194.82 1197.41,181.93 1200.63,189.45 1202.24,174.41 1204.93,193.21 1208.15,187.3 1213.52,183.0 1215.67,192.67 1218.68,185.15" fill="none" stroke="#00bfff" stroke-width="1.3" stroke-linejoin="round" /><line x1="954" y1="117.5" x2="959" y2="117.5" stroke="#8a8a8a" stroke-width="1"/><line x1="954" y1="137.2" x2="959" y2="137.2" stroke="#8a8a8a" stroke-width="1"/><line x1="954" y1="173.9" x2="959" y2="173.9" stroke="#8a8a8a" stroke-width="1"/><line x1="954" y1="210.5" x2="959" y2="210.5" stroke="#8a8a8a" stroke-width="1"/><line x1="959.5" y1="117" x2="959.5" y2="211" stroke="#8a8a8a" stroke-width="1"/><line x1="959" y1="117.5" x2="1220" y2="117.5" stroke="#8a8a8a" stroke-width="1"/><line x1="959" y1="210.5" x2="1220" y2="210.5" stroke="#8a8a8a" stroke-width="1"/><line x1="1219.5" y1="117" x2="1219.5" y2="211" stroke="#ff0000" stroke-width="1.2"/><text x="954" y="141.2" font-size="12" fill="#fff" text-anchor="end" font-weight="normal" font-family='"Liberation Sans", sans-serif' >2,000</text><text x="954" y="177.9" font-size="12" fill="#fff" text-anchor="end" font-weight="normal" font-family='"Liberation Sans", sans-serif' >1,000</text><text x="954" y="214.5" font-size="12" fill="#fff" text-anchor="end" font-weight="normal" font-family='"Liberation Sans", sans-serif' >0</text><text x="1039.3" y="226.2" font-size="12" fill="#fff" text-anchor="middle" font-weight="normal" font-family='"Liberation Sans", sans-serif' >7:30:00 AM</text><text x="1126.1" y="226.2" font-size="12" fill="#fff" text-anchor="middle" font-weight="normal" font-family='"Liberation Sans", sans-serif' >7:40:00 AM</text><text x="1213.0" y="226.2" font-size="12" fill="#fff" text-anchor="middle" font-weight="normal" font-family='"Liberation Sans", sans-serif' >7:50:00 AM</text><path d="M972.5,120.2 L979.7,133.6 L965.3,133.6 Z" fill="url(#wgrad)" stroke="#f2b800" stroke-width="2" stroke-linejoin="round"/><rect x="971.5" y="123.5" width="2" height="7" fill="#000"/><rect x="971.5" y="131.4" width="2" height="1.8" fill="#000"/><path d="M959,210.5 L959,206.0 L970.5,206.0 A4.5,4.5 0 0 1 975,210.5 Z" fill="#add8e6"/><line x1="961" y1="210.5" x2="973" y2="210.5" stroke="#555" stroke-width="1"/><rect x="988" y="206.0" width="36" height="9" rx="4.5" ry="4.5" fill="#add8e6"/><line x1="990" y1="210.5" x2="1022" y2="210.5" stroke="#555" stroke-width="1"/><rect x="1027" y="206.0" width="27" height="9" rx="4.5" ry="4.5" fill="#add8e6"/><line x1="1029" y1="210.5" x2="1052" y2="210.5" stroke="#555" stroke-width="1"/><rect x="1079" y="206.0" width="14" height="9" rx="4.5" ry="4.5" fill="#add8e6"/><line x1="1081" y1="210.5" x2="1091" y2="210.5" stroke="#555" stroke-width="1"/><rect x="1201" y="206.0" width="15" height="9" rx="4.5" ry="4.5" fill="#add8e6"/><line x1="1203" y1="210.5" x2="1214" y2="210.5" stroke="#555" stroke-width="1"/><rect x="1058" y="206.0" width="26" height="9" rx="4.5" ry="4.5" fill="#ffff00"/><line x1="1060" y1="210.5" x2="1082" y2="210.5" stroke="#555" stroke-width="1"/><rect x="1094" y="206.0" width="38" height="9" rx="4.5" ry="4.5" fill="#ffff00"/><line x1="1096" y1="210.5" x2="1130" y2="210.5" stroke="#555" stroke-width="1"/><rect x="1140" y="206.0" width="35" height="9" rx="4.5" ry="4.5" fill="#ffff00"/><line x1="1142" y1="210.5" x2="1173" y2="210.5" stroke="#555" stroke-width="1"/><rect x="1179" y="206.0" width="22" height="9" rx="4.5" ry="4.5" fill="#ffff00"/><line x1="1181" y1="210.5" x2="1199" y2="210.5" stroke="#555" stroke-width="1"/><path d="M1219,210.5 L1219,206.0 L1205.5,206.0 A4.5,4.5 0 0 0 1201,210.5 Z" fill="#ffff00"/><line x1="1203" y1="210.5" x2="1217" y2="210.5" stroke="#555" stroke-width="1"/><rect x="990" y="237" width="22" height="10" fill="#00bfff"/><text x="1017.4" y="247.8" font-size="12" fill="#fff" text-anchor="start" font-weight="normal" font-family='"Liberation Sans", sans-serif' >Batches</text><rect x="990" y="252" width="22" height="10" fill="#3cb371"/><text x="1017.4" y="262.8" font-size="12" fill="#fff" text-anchor="start" font-weight="normal" font-family='"Liberation Sans", sans-serif' >Transactions</text><rect x="1100" y="237" width="22" height="10" fill="#ff7f50"/><text x="1127" y="247.8" font-size="12" fill="#fff" text-anchor="start" font-weight="normal" font-family='"Liberation Sans", sans-serif' >Compiles</text><rect x="1100" y="252" width="22" height="10" fill="#ff4500"/><text x="1127" y="262.8" font-size="12" fill="#fff" text-anchor="start" font-weight="normal" font-family='"Liberation Sans", sans-serif' >Recompiles</text><line x1="1299" y1="137.2" x2="1540" y2="137.2" stroke="#9a9a9a" stroke-width="1" stroke-dasharray="1 2"/><line x1="1299" y1="155.7" x2="1540" y2="155.7" stroke="#9a9a9a" stroke-width="1" stroke-dasharray="1 2"/><line x1="1299" y1="174.3" x2="1540" y2="174.3" stroke="#9a9a9a" stroke-width="1" stroke-dasharray="1 2"/><line x1="1299" y1="192.6" x2="1540" y2="192.6" stroke="#9a9a9a" stroke-width="1" stroke-dasharray="1 2"/><line x1="1374.2" y1="117" x2="1374.2" y2="213.5" stroke="#9a9a9a" stroke-width="1" stroke-dasharray="1 2"/><line x1="1454.0" y1="117" x2="1454.0" y2="213.5" stroke="#9a9a9a" stroke-width="1" stroke-dasharray="1 2"/><line x1="1535.0" y1="117" x2="1535.0" y2="213.5" stroke="#9a9a9a" stroke-width="1" stroke-dasharray="1 2"/><polyline points="1299.91,192.73 1300.95,177.76 1304.85,201.84 1309.02,160.83 1311.62,194.03 1314.88,171.9 1315.53,177.1 1317.48,164.08 1319.44,194.03 1321.39,191.43 1323.99,195.33 1326.6,188.17 1329.85,192.73 1335.06,195.33 1336.36,201.84 1338.97,195.33 1344.18,205.1 1346.13,197.94 1349.12,145.85 1351.99,201.19 1356.55,167.99 1358.76,158.22 1361.1,174.5 1363.71,191.43 1365.66,188.17 1368.92,187.52 1371.52,192.73 1374.12,160.83 1376.08,201.84 1379.33,193.38 1381.29,201.84 1382.98,151.06 1386.49,203.15 1389.75,197.29 1391.05,203.15 1393.66,164.08 1395.61,165.39 1396.91,196.64 1400.17,166.04 1401.73,175.8 1404.72,165.39 1407.98,191.43 1410.32,176.45 1412.15,192.73 1414.75,177.1 1417.09,194.03 1419.7,192.73 1421.0,200.54 1424.26,194.68 1426.86,190.12 1428.16,197.94 1430.11,172.55 1432.72,203.8 1439.23,134.14 1440.53,197.29 1444.44,167.99 1447.69,163.43 1450.95,190.12 1454.2,181.66 1456.81,193.38 1459.41,184.92 1463.32,184.92 1465.27,197.94 1469.83,199.24 1471.78,191.43 1473.73,199.24 1479.59,154.32 1483.5,198.59 1490.01,172.55 1495.22,205.1 1499.12,191.43 1504.33,197.94 1506.94,200.54 1511.49,146.51 1514.1,169.29 1516.05,196.64 1519.96,197.94 1522.56,203.15 1524.52,186.22 1526.47,197.94 1529.07,138.69 1531.68,166.69 1534.28,165.39 1536.89,190.12 1539.49,187.52" fill="none" stroke="#48d1cc" stroke-width="1.3" stroke-linejoin="round" /><line x1="1299" y1="210.5" x2="1540" y2="210.5" stroke="#f4a460" stroke-width="1.5"/><line x1="1294" y1="117.5" x2="1299" y2="117.5" stroke="#8a8a8a" stroke-width="1"/><line x1="1294" y1="137.2" x2="1299" y2="137.2" stroke="#8a8a8a" stroke-width="1"/><line x1="1294" y1="155.7" x2="1299" y2="155.7" stroke="#8a8a8a" stroke-width="1"/><line x1="1294" y1="174.3" x2="1299" y2="174.3" stroke="#8a8a8a" stroke-width="1"/><line x1="1294" y1="192.6" x2="1299" y2="192.6" stroke="#8a8a8a" stroke-width="1"/><line x1="1294" y1="211.0" x2="1299" y2="211.0" stroke="#8a8a8a" stroke-width="1"/><line x1="1540" y1="117.5" x2="1545" y2="117.5" stroke="#8a8a8a" stroke-width="1"/><line x1="1540" y1="137.2" x2="1545" y2="137.2" stroke="#8a8a8a" stroke-width="1"/><line x1="1540" y1="155.7" x2="1545" y2="155.7" stroke="#8a8a8a" stroke-width="1"/><line x1="1540" y1="174.3" x2="1545" y2="174.3" stroke="#8a8a8a" stroke-width="1"/><line x1="1540" y1="192.6" x2="1545" y2="192.6" stroke="#8a8a8a" stroke-width="1"/><line x1="1540" y1="211.0" x2="1545" y2="211.0" stroke="#8a8a8a" stroke-width="1"/><line x1="1299.5" y1="117" x2="1299.5" y2="211.5" stroke="#8a8a8a" stroke-width="1"/><line x1="1299" y1="117.5" x2="1541" y2="117.5" stroke="#8a8a8a" stroke-width="1"/><line x1="1299" y1="211.0" x2="1541" y2="211.0" stroke="#8a8a8a" stroke-width="1"/><line x1="1540.5" y1="117" x2="1540.5" y2="211.5" stroke="#ff0000" stroke-width="1.2"/><text x="1293" y="141.2" font-size="12" fill="#fff" text-anchor="end" font-weight="normal" font-family='"Liberation Sans", sans-serif' >80,000</text><text x="1293" y="159.7" font-size="12" fill="#fff" text-anchor="end" font-weight="normal" font-family='"Liberation Sans", sans-serif' >60,000</text><text x="1293" y="178.3" font-size="12" fill="#fff" text-anchor="end" font-weight="normal" font-family='"Liberation Sans", sans-serif' >40,000</text><text x="1293" y="196.6" font-size="12" fill="#fff" text-anchor="end" font-weight="normal" font-family='"Liberation Sans", sans-serif' >20,000</text><text x="1293" y="215.0" font-size="12" fill="#fff" text-anchor="end" font-weight="normal" font-family='"Liberation Sans", sans-serif' >0</text><text x="1546" y="123.1" font-size="12" fill="#fff" text-anchor="start" font-weight="normal" font-family='"Liberation Sans", sans-serif' >1</text><text x="1546" y="138.4" font-size="12" fill="#fff" text-anchor="start" font-weight="normal" font-family='"Liberation Sans", sans-serif' >1</text><text x="1546" y="153.6" font-size="12" fill="#fff" text-anchor="start" font-weight="normal" font-family='"Liberation Sans", sans-serif' >1</text><text x="1546" y="168.9" font-size="12" fill="#fff" text-anchor="start" font-weight="normal" font-family='"Liberation Sans", sans-serif' >1</text><text x="1546" y="184.7" font-size="12" fill="#fff" text-anchor="start" font-weight="normal" font-family='"Liberation Sans", sans-serif' >0</text><text x="1546" y="200.0" font-size="12" fill="#fff" text-anchor="start" font-weight="normal" font-family='"Liberation Sans", sans-serif' >0</text><text x="1546" y="215.7" font-size="12" fill="#fff" text-anchor="start" font-weight="normal" font-family='"Liberation Sans", sans-serif' >0</text><text x="1374.2" y="229.0" font-size="12" fill="#fff" text-anchor="middle" font-weight="normal" font-family='"Liberation Sans", sans-serif' >7:30:00 AM</text><text x="1454.0" y="229.0" font-size="12" fill="#fff" text-anchor="middle" font-weight="normal" font-family='"Liberation Sans", sans-serif' >7:40:00 AM</text><text x="1535.0" y="229.0" font-size="12" fill="#fff" text-anchor="middle" font-weight="normal" font-family='"Liberation Sans", sans-serif' >7:50:00 AM</text><rect x="1349" y="237" width="22" height="10" fill="#48d1cc"/><text x="1376" y="247.8" font-size="12" fill="#fff" text-anchor="start" font-weight="normal" font-family='"Liberation Sans", sans-serif' >Key lookups</text><rect x="1349" y="252" width="22" height="10" fill="#f4a460"/><text x="1376" y="262.8" font-size="12" fill="#fff" text-anchor="start" font-weight="normal" font-family='"Liberation Sans", sans-serif' >Forwarded recs</text><line x1="1629" y1="133.55" x2="1870" y2="133.55" stroke="#9a9a9a" stroke-width="1" stroke-dasharray="1 2"/><line x1="1629" y1="149.0" x2="1870" y2="149.0" stroke="#9a9a9a" stroke-width="1" stroke-dasharray="1 2"/><line x1="1629" y1="164.45" x2="1870" y2="164.45" stroke="#9a9a9a" stroke-width="1" stroke-dasharray="1 2"/><line x1="1629" y1="179.9" x2="1870" y2="179.9" stroke="#9a9a9a" stroke-width="1" stroke-dasharray="1 2"/><line x1="1629" y1="195.35000000000002" x2="1870" y2="195.35000000000002" stroke="#9a9a9a" stroke-width="1" stroke-dasharray="1 2"/><line x1="1704.1" y1="117.6" x2="1704.1" y2="213.3" stroke="#9a9a9a" stroke-width="1" stroke-dasharray="1 2"/><line x1="1784.0" y1="117.6" x2="1784.0" y2="213.3" stroke="#9a9a9a" stroke-width="1" stroke-dasharray="1 2"/><line x1="1864.0" y1="117.6" x2="1864.0" y2="213.3" stroke="#9a9a9a" stroke-width="1" stroke-dasharray="1 2"/><line x1="1624" y1="118.1" x2="1629" y2="118.1" stroke="#8a8a8a" stroke-width="1"/><line x1="1624" y1="133.55" x2="1629" y2="133.55" stroke="#8a8a8a" stroke-width="1"/><line x1="1624" y1="149.0" x2="1629" y2="149.0" stroke="#8a8a8a" stroke-width="1"/><line x1="1624" y1="164.45" x2="1629" y2="164.45" stroke="#8a8a8a" stroke-width="1"/><line x1="1624" y1="179.9" x2="1629" y2="179.9" stroke="#8a8a8a" stroke-width="1"/><line x1="1624" y1="195.35000000000002" x2="1629" y2="195.35000000000002" stroke="#8a8a8a" stroke-width="1"/><line x1="1624" y1="210.8" x2="1629" y2="210.8" stroke="#8a8a8a" stroke-width="1"/><line x1="1629.5" y1="117.6" x2="1629.5" y2="211.3" stroke="#8a8a8a" stroke-width="1"/><line x1="1629" y1="118.1" x2="1871" y2="118.1" stroke="#8a8a8a" stroke-width="1"/><line x1="1629" y1="210.8" x2="1871" y2="210.8" stroke="#8a8a8a" stroke-width="1"/><line x1="1870.5" y1="117.6" x2="1870.5" y2="211.3" stroke="#ff0000" stroke-width="1.2"/><line x1="1629" y1="210.3" x2="1870" y2="210.3" stroke="#6495ed" stroke-width="1"/><text x="1624" y="122.1" font-size="12" fill="#fff" text-anchor="end" font-weight="normal" font-family='"Liberation Sans", sans-serif' >1.2</text><text x="1624" y="137.6" font-size="12" fill="#fff" text-anchor="end" font-weight="normal" font-family='"Liberation Sans", sans-serif' >1.0</text><text x="1624" y="153.0" font-size="12" fill="#fff" text-anchor="end" font-weight="normal" font-family='"Liberation Sans", sans-serif' >0.8</text><text x="1624" y="168.4" font-size="12" fill="#fff" text-anchor="end" font-weight="normal" font-family='"Liberation Sans", sans-serif' >0.6</text><text x="1624" y="183.9" font-size="12" fill="#fff" text-anchor="end" font-weight="normal" font-family='"Liberation Sans", sans-serif' >0.4</text><text x="1624" y="199.4" font-size="12" fill="#fff" text-anchor="end" font-weight="normal" font-family='"Liberation Sans", sans-serif' >0.2</text><text x="1624" y="214.8" font-size="12" fill="#fff" text-anchor="end" font-weight="normal" font-family='"Liberation Sans", sans-serif' >0.0</text><text x="1704.1" y="226.2" font-size="12" fill="#fff" text-anchor="middle" font-weight="normal" font-family='"Liberation Sans", sans-serif' >7:30:00 AM</text><text x="1784.0" y="226.2" font-size="12" fill="#fff" text-anchor="middle" font-weight="normal" font-family='"Liberation Sans", sans-serif' >7:40:00 AM</text><text x="1864.0" y="226.2" font-size="12" fill="#fff" text-anchor="middle" font-weight="normal" font-family='"Liberation Sans", sans-serif' >7:50:00 AM</text><rect x="1695" y="246" width="22" height="10" fill="#6495ed"/><text x="1722" y="256.8" font-size="12" fill="#fff" text-anchor="start" font-weight="normal" font-family='"Liberation Sans", sans-serif' >Backup MB/sec</text><line x1="987" y1="319.54285714285714" x2="1865" y2="319.54285714285714" stroke="#9a9a9a" stroke-width="1" stroke-dasharray="1 2"/><line x1="987" y1="333.5857142857143" x2="1865" y2="333.5857142857143" stroke="#9a9a9a" stroke-width="1" stroke-dasharray="1 2"/><line x1="987" y1="347.62857142857143" x2="1865" y2="347.62857142857143" stroke="#9a9a9a" stroke-width="1" stroke-dasharray="1 2"/><line x1="987" y1="361.6714285714286" x2="1865" y2="361.6714285714286" stroke="#9a9a9a" stroke-width="1" stroke-dasharray="1 2"/><line x1="987" y1="375.7142857142857" x2="1865" y2="375.7142857142857" stroke="#9a9a9a" stroke-width="1" stroke-dasharray="1 2"/><line x1="987" y1="389.75714285714287" x2="1865" y2="389.75714285714287" stroke="#9a9a9a" stroke-width="1" stroke-dasharray="1 2"/><line x1="1110.1" y1="305" x2="1110.1" y2="406.3" stroke="#9a9a9a" stroke-width="1" stroke-dasharray="1 2"/><line x1="1256.0" y1="305" x2="1256.0" y2="406.3" stroke="#9a9a9a" stroke-width="1" stroke-dasharray="1 2"/><line x1="1402.4" y1="305" x2="1402.4" y2="406.3" stroke="#9a9a9a" stroke-width="1" stroke-dasharray="1 2"/><line x1="1548.9" y1="305" x2="1548.9" y2="406.3" stroke="#9a9a9a" stroke-width="1" stroke-dasharray="1 2"/><line x1="1695.2" y1="305" x2="1695.2" y2="406.3" stroke="#9a9a9a" stroke-width="1" stroke-dasharray="1 2"/><line x1="1842.0" y1="305" x2="1842.0" y2="406.3" stroke="#9a9a9a" stroke-width="1" stroke-dasharray="1 2"/><path d="M987,403.3 L987,348.46 L987.89,348.46 L991.56,335.33 L996.16,381.93 L1001.41,383.9 L1006.0,383.9 L1011.91,376.68 L1016.5,336.64 L1021.76,361.58 L1026.35,383.24 L1030.29,378.65 L1035.54,368.15 L1040.79,356.33 L1045.38,373.4 L1050.37,353.71 L1055.23,378.65 L1060.48,385.21 L1065.34,372.08 L1070.32,383.9 L1074.26,385.21 L1079.78,395.71 L1084.76,368.15 L1089.36,385.21 L1094.61,389.15 L1099.47,381.93 L1104.45,386.52 L1113.64,379.3 L1118.89,391.77 L1123.88,390.46 L1128.74,364.21 L1133.33,360.27 L1138.58,372.08 L1142.52,390.46 L1148.43,394.4 L1153.29,379.96 L1158.01,395.71 L1162.47,324.17 L1167.46,340.58 L1172.06,358.96 L1177.31,379.96 L1182.56,364.87 L1187.81,378.65 L1192.4,345.83 L1196.6,382.59 L1201.33,326.8 L1206.05,372.74 L1211.56,378.65 L1216.81,383.9 L1222.06,385.87 L1231.25,382.59 L1236.5,387.84 L1244.38,384.56 L1250.29,378.65 L1255.54,385.21 L1260.79,333.36 L1265.38,364.21 L1270.63,386.52 L1274.57,383.9 L1279.56,365.52 L1284.42,385.21 L1289.01,339.27 L1294.26,323.52 L1298.86,360.27 L1304.76,390.46 L1309.36,387.84 L1315.27,377.34 L1319.2,377.34 L1323.8,345.83 L1328.39,332.05 L1333.64,361.58 L1338.89,366.83 L1343.49,381.27 L1348.08,373.4 L1353.33,347.8 L1358.58,370.12 L1362.52,367.49 L1367.77,349.11 L1372.37,382.59 L1377.62,374.71 L1382.21,395.71 L1387.46,379.3 L1392.71,386.52 L1397.31,387.18 L1401.9,391.77 L1406.5,364.87 L1411.75,385.21 L1416.34,387.84 L1421.59,383.9 L1426.58,370.12 L1431.56,392.43 L1436.81,391.12 L1441.41,362.9 L1445.35,360.93 L1450.6,368.8 L1455.85,370.12 L1460.44,345.17 L1465.69,378.65 L1470.29,390.46 L1474.88,386.52 L1480.13,378.65 L1484.73,373.4 L1489.32,316.95 L1494.57,374.71 L1499.56,361.58 L1504.42,381.27 L1509.01,385.21 L1514.26,354.36 L1519.25,381.27 L1523.45,364.21 L1528.44,333.36 L1533.95,374.71 L1538.55,385.21 L1543.8,394.4 L1548.39,377.34 L1552.99,378.65 L1558.24,395.71 L1563.49,375.37 L1568.08,377.34 L1573.33,379.96 L1582.52,383.24 L1587.77,395.06 L1593.02,380.62 L1597.62,383.24 L1602.21,364.87 L1606.15,372.74 L1611.4,361.58 L1616.65,371.43 L1621.25,376.68 L1626.5,389.15 L1631.09,378.65 L1636.34,378.65 L1641.33,332.05 L1646.31,375.37 L1650.91,375.37 L1655.5,376.68 L1660.75,364.87 L1665.35,365.52 L1670.6,383.24 L1675.19,384.56 L1680.44,375.37 L1685.04,378.65 L1689.63,383.24 L1694.23,379.96 L1699.48,364.21 L1704.73,391.77 L1709.98,385.87 L1714.57,390.46 L1719.56,360.27 L1724.42,387.84 L1729.01,379.96 L1734.26,370.77 L1738.2,370.77 L1743.45,372.74 L1748.7,344.52 L1753.69,339.27 L1759.2,377.34 L1763.8,387.18 L1768.39,356.33 L1772.99,379.96 L1782.83,391.77 L1787.43,372.74 L1792.68,395.06 L1797.93,379.96 L1802.52,376.02 L1807.77,360.93 L1812.37,377.34 L1816.7,343.21 L1821.56,366.83 L1826.81,309.08 L1831.4,347.14 L1836.65,343.86 L1841.9,365.52 L1846.5,366.83 L1851.75,383.9 L1855.69,360.27 L1860.94,390.46 L1864.87,389.15 L1864.87,403.3 Z" fill="#00ee00" stroke="none"/><path d="M987,403.3 L987,361.7 L987.89,361.7 L991.56,348.57 L996.16,388.61 L1001.41,389.26 L1006.0,389.92 L1011.91,380.07 L1016.5,351.19 L1021.76,369.57 L1026.35,390.57 L1030.29,380.07 L1035.54,373.51 L1040.79,360.38 L1045.38,376.14 L1050.37,364.32 L1055.23,382.7 L1060.48,386.64 L1065.34,378.76 L1070.32,391.89 L1074.26,393.2 L1079.78,401.08 L1084.76,378.76 L1089.36,391.89 L1094.61,393.86 L1099.47,390.57 L1104.45,393.86 L1113.64,389.26 L1118.89,397.79 L1123.88,397.14 L1128.74,373.51 L1133.33,367.6 L1138.58,378.76 L1142.52,394.51 L1148.43,401.08 L1153.29,387.95 L1158.01,394.51 L1162.47,334.13 L1167.46,352.51 L1172.06,380.07 L1177.31,381.39 L1182.56,373.51 L1187.81,378.76 L1192.4,356.45 L1196.6,381.39 L1201.33,347.26 L1206.05,378.76 L1211.56,385.32 L1216.81,390.57 L1222.06,391.89 L1231.25,390.57 L1236.5,393.2 L1244.38,391.89 L1250.29,390.57 L1255.54,391.89 L1260.79,361.7 L1265.38,381.39 L1270.63,394.51 L1274.57,390.57 L1279.56,377.45 L1284.42,389.26 L1289.01,343.32 L1294.26,331.5 L1298.86,361.7 L1304.76,391.89 L1309.36,390.57 L1315.27,385.32 L1319.2,378.76 L1323.8,351.19 L1328.39,339.38 L1333.64,376.14 L1338.89,378.76 L1343.49,381.39 L1348.08,373.51 L1353.33,355.13 L1358.58,373.51 L1362.52,370.88 L1367.77,359.07 L1372.37,386.64 L1377.62,384.01 L1382.21,397.14 L1387.46,389.26 L1392.71,390.57 L1397.31,395.83 L1401.9,397.14 L1406.5,378.76 L1411.75,389.26 L1416.34,394.51 L1421.59,390.57 L1426.58,378.76 L1431.56,396.48 L1436.81,394.51 L1441.41,371.54 L1445.35,370.88 L1450.6,372.2 L1455.85,375.48 L1460.44,356.45 L1465.69,378.76 L1470.29,391.89 L1474.88,389.26 L1480.13,382.7 L1484.73,373.51 L1489.32,324.94 L1494.57,382.7 L1499.56,374.82 L1504.42,384.01 L1509.01,386.64 L1514.26,360.38 L1519.25,381.39 L1523.45,364.32 L1528.44,339.38 L1533.95,377.45 L1538.55,384.01 L1543.8,394.51 L1548.39,384.01 L1552.99,386.64 L1558.24,394.51 L1563.49,382.7 L1568.08,384.01 L1573.33,387.95 L1582.52,390.57 L1587.77,395.83 L1593.02,389.26 L1597.62,384.01 L1602.21,373.51 L1606.15,376.14 L1611.4,369.57 L1616.65,373.51 L1621.25,380.07 L1626.5,389.26 L1631.09,381.39 L1636.34,382.7 L1641.33,351.19 L1646.31,381.39 L1650.91,380.07 L1655.5,378.76 L1660.75,369.57 L1665.35,370.88 L1670.6,385.32 L1675.19,386.64 L1680.44,380.07 L1685.04,381.39 L1689.63,387.95 L1694.23,384.01 L1699.48,380.07 L1704.73,394.51 L1709.98,389.26 L1714.57,391.89 L1719.56,368.26 L1724.42,391.89 L1729.01,384.01 L1734.26,376.14 L1738.2,376.14 L1743.45,376.14 L1748.7,352.51 L1753.69,344.63 L1759.2,380.07 L1763.8,386.64 L1768.39,364.32 L1772.99,381.39 L1782.83,391.89 L1787.43,380.07 L1792.68,394.51 L1797.93,386.64 L1802.52,384.01 L1807.77,370.88 L1812.37,378.76 L1816.7,352.51 L1821.56,366.95 L1826.81,322.32 L1831.4,349.88 L1836.65,349.88 L1841.9,376.14 L1846.5,378.76 L1851.75,386.64 L1855.69,369.57 L1860.94,393.2 L1864.87,394.51 L1864.87,403.3 Z" fill="#ff8c00" stroke="none"/><path d="M987,403.3 L987,378.76 L987.89,378.76 L991.56,381.39 L996.16,395.83 L1001.41,399.76 L1006.0,397.14 L1011.91,397.14 L1016.5,385.98 L1021.76,390.57 L1026.35,401.08 L1030.29,391.89 L1035.54,380.73 L1040.79,390.57 L1045.38,392.54 L1050.37,385.32 L1055.23,390.57 L1060.48,395.17 L1065.34,381.39 L1070.32,394.51 L1074.26,397.14 L1079.78,401.08 L1084.76,384.01 L1089.36,397.14 L1094.61,400.42 L1099.47,395.17 L1104.45,399.11 L1113.64,393.86 L1118.89,401.73 L1123.88,399.76 L1128.74,378.76 L1133.33,381.39 L1138.58,389.26 L1142.52,397.14 L1148.43,401.08 L1153.29,394.51 L1158.01,401.08 L1162.47,391.89 L1167.46,390.57 L1172.06,391.89 L1177.31,392.54 L1182.56,382.7 L1187.81,385.98 L1192.4,387.95 L1196.6,391.89 L1201.33,391.23 L1206.05,386.64 L1211.56,389.26 L1216.81,394.51 L1222.06,397.14 L1231.25,398.45 L1236.5,399.11 L1244.38,398.45 L1250.29,397.14 L1255.54,399.76 L1260.79,376.14 L1265.38,384.01 L1270.63,402.39 L1274.57,391.89 L1279.56,384.01 L1284.42,394.51 L1289.01,380.07 L1294.26,391.89 L1298.86,391.89 L1304.76,402.39 L1309.36,402.39 L1315.27,394.51 L1319.2,393.86 L1323.8,393.2 L1328.39,390.57 L1333.64,389.26 L1338.89,390.57 L1343.49,390.57 L1348.08,391.89 L1353.33,378.76 L1358.58,389.26 L1362.52,391.89 L1367.77,386.64 L1372.37,391.89 L1377.62,387.95 L1382.21,398.45 L1387.46,389.26 L1392.71,395.83 L1397.31,394.51 L1401.9,399.76 L1406.5,384.01 L1411.75,394.51 L1416.34,401.08 L1421.59,394.51 L1426.58,386.64 L1431.56,401.73 L1436.81,401.08 L1441.41,378.76 L1445.35,377.45 L1450.6,382.7 L1455.85,386.64 L1460.44,389.26 L1465.69,391.89 L1470.29,391.89 L1474.88,391.89 L1480.13,390.57 L1484.73,393.2 L1489.32,393.2 L1494.57,394.51 L1499.56,387.95 L1504.42,391.89 L1509.01,391.89 L1514.26,386.64 L1519.25,389.26 L1523.45,387.95 L1528.44,391.89 L1533.95,386.64 L1538.55,394.51 L1543.8,397.14 L1548.39,390.57 L1552.99,391.89 L1558.24,399.76 L1563.49,389.26 L1568.08,391.89 L1573.33,394.51 L1582.52,395.83 L1587.77,401.08 L1593.02,394.51 L1597.62,391.89 L1602.21,378.76 L1606.15,382.7 L1611.4,376.14 L1616.65,384.01 L1621.25,387.95 L1626.5,395.83 L1631.09,390.57 L1636.34,389.26 L1641.33,390.57 L1646.31,393.86 L1650.91,393.86 L1655.5,391.89 L1660.75,390.57 L1665.35,380.07 L1670.6,390.57 L1675.19,391.89 L1680.44,386.64 L1685.04,389.26 L1689.63,397.14 L1694.23,395.83 L1699.48,382.7 L1704.73,395.83 L1709.98,394.51 L1714.57,394.51 L1719.56,377.45 L1724.42,398.45 L1729.01,391.89 L1734.26,385.32 L1738.2,384.67 L1743.45,384.01 L1748.7,364.32 L1753.69,391.89 L1759.2,393.2 L1763.8,390.57 L1768.39,389.26 L1772.99,393.2 L1782.83,397.14 L1787.43,385.32 L1792.68,394.51 L1797.93,397.14 L1802.52,395.83 L1807.77,389.26 L1812.37,390.57 L1816.7,390.57 L1821.56,390.57 L1826.81,391.89 L1831.4,391.89 L1836.65,390.57 L1841.9,385.32 L1846.5,393.2 L1851.75,394.51 L1855.69,380.07 L1860.94,397.14 L1864.87,397.14 L1864.87,403.3 Z" fill="#808080" stroke="none"/><polyline points="987,347.26 987.89,347.26 991.56,334.13 996.16,380.73 1001.41,382.7 1006.0,382.7 1011.91,375.48 1016.5,335.44 1021.76,360.38 1026.35,382.04 1030.29,377.45 1035.54,366.95 1040.79,355.13 1045.38,372.2 1050.37,352.51 1055.23,377.45 1060.48,384.01 1065.34,370.88 1070.32,382.7 1074.26,384.01 1079.78,394.51 1084.76,366.95 1089.36,384.01 1094.61,387.95 1099.47,380.73 1104.45,385.32 1113.64,378.1 1118.89,390.57 1123.88,389.26 1128.74,363.01 1133.33,359.07 1138.58,370.88 1142.52,389.26 1148.43,393.2 1153.29,378.76 1158.01,394.51 1162.47,322.97 1167.46,339.38 1172.06,357.76 1177.31,378.76 1182.56,363.67 1187.81,377.45 1192.4,344.63 1196.6,381.39 1201.33,325.6 1206.05,371.54 1211.56,377.45 1216.81,382.7 1222.06,384.67 1231.25,381.39 1236.5,386.64 1244.38,383.36 1250.29,377.45 1255.54,384.01 1260.79,332.16 1265.38,363.01 1270.63,385.32 1274.57,382.7 1279.56,364.32 1284.42,384.01 1289.01,338.07 1294.26,322.32 1298.86,359.07 1304.76,389.26 1309.36,386.64 1315.27,376.14 1319.2,376.14 1323.8,344.63 1328.39,330.85 1333.64,360.38 1338.89,365.63 1343.49,380.07 1348.08,372.2 1353.33,346.6 1358.58,368.92 1362.52,366.29 1367.77,347.91 1372.37,381.39 1377.62,373.51 1382.21,394.51 1387.46,378.1 1392.71,385.32 1397.31,385.98 1401.9,390.57 1406.5,363.67 1411.75,384.01 1416.34,386.64 1421.59,382.7 1426.58,368.92 1431.56,391.23 1436.81,389.92 1441.41,361.7 1445.35,359.73 1450.6,367.6 1455.85,368.92 1460.44,343.97 1465.69,377.45 1470.29,389.26 1474.88,385.32 1480.13,377.45 1484.73,372.2 1489.32,315.75 1494.57,373.51 1499.56,360.38 1504.42,380.07 1509.01,384.01 1514.26,353.16 1519.25,380.07 1523.45,363.01 1528.44,332.16 1533.95,373.51 1538.55,384.01 1543.8,393.2 1548.39,376.14 1552.99,377.45 1558.24,394.51 1563.49,374.17 1568.08,376.14 1573.33,378.76 1582.52,382.04 1587.77,393.86 1593.02,379.42 1597.62,382.04 1602.21,363.67 1606.15,371.54 1611.4,360.38 1616.65,370.23 1621.25,375.48 1626.5,387.95 1631.09,377.45 1636.34,377.45 1641.33,330.85 1646.31,374.17 1650.91,374.17 1655.5,375.48 1660.75,363.67 1665.35,364.32 1670.6,382.04 1675.19,383.36 1680.44,374.17 1685.04,377.45 1689.63,382.04 1694.23,378.76 1699.48,363.01 1704.73,390.57 1709.98,384.67 1714.57,389.26 1719.56,359.07 1724.42,386.64 1729.01,378.76 1734.26,369.57 1738.2,369.57 1743.45,371.54 1748.7,343.32 1753.69,338.07 1759.2,376.14 1763.8,385.98 1768.39,355.13 1772.99,378.76 1782.83,390.57 1787.43,371.54 1792.68,393.86 1797.93,378.76 1802.52,374.82 1807.77,359.73 1812.37,376.14 1816.7,342.01 1821.56,365.63 1826.81,307.88 1831.4,345.94 1836.65,342.66 1841.9,364.32 1846.5,365.63 1851.75,382.7 1855.69,359.07 1860.94,389.26 1864.87,387.95" fill="none" stroke="#00ffff" stroke-width="1.6" stroke-linejoin="round" /><line x1="982" y1="305.5" x2="987" y2="305.5" stroke="#8a8a8a" stroke-width="1"/><line x1="982" y1="319.54285714285714" x2="987" y2="319.54285714285714" stroke="#8a8a8a" stroke-width="1"/><line x1="982" y1="333.5857142857143" x2="987" y2="333.5857142857143" stroke="#8a8a8a" stroke-width="1"/><line x1="982" y1="347.62857142857143" x2="987" y2="347.62857142857143" stroke="#8a8a8a" stroke-width="1"/><line x1="982" y1="361.6714285714286" x2="987" y2="361.6714285714286" stroke="#8a8a8a" stroke-width="1"/><line x1="982" y1="375.7142857142857" x2="987" y2="375.7142857142857" stroke="#8a8a8a" stroke-width="1"/><line x1="982" y1="389.75714285714287" x2="987" y2="389.75714285714287" stroke="#8a8a8a" stroke-width="1"/><line x1="982" y1="403.8" x2="987" y2="403.8" stroke="#8a8a8a" stroke-width="1"/><line x1="987.5" y1="305" x2="987.5" y2="404.3" stroke="#8a8a8a" stroke-width="1"/><line x1="987" y1="305.5" x2="1866" y2="305.5" stroke="#8a8a8a" stroke-width="1"/><line x1="987" y1="403.8" x2="1866" y2="403.8" stroke="#8a8a8a" stroke-width="1"/><line x1="1865.5" y1="305" x2="1865.5" y2="404.3" stroke="#ff0000" stroke-width="1.2"/><text x="973.5" y="309.5" font-size="12" fill="#fff" text-anchor="end" font-weight="normal" font-family='"Liberation Sans", sans-serif' >35,000</text><text x="973.5" y="323.5" font-size="12" fill="#fff" text-anchor="end" font-weight="normal" font-family='"Liberation Sans", sans-serif' >30,000</text><text x="973.5" y="337.6" font-size="12" fill="#fff" text-anchor="end" font-weight="normal" font-family='"Liberation Sans", sans-serif' >25,000</text><text x="973.5" y="351.6" font-size="12" fill="#fff" text-anchor="end" font-weight="normal" font-family='"Liberation Sans", sans-serif' >20,000</text><text x="973.5" y="365.7" font-size="12" fill="#fff" text-anchor="end" font-weight="normal" font-family='"Liberation Sans", sans-serif' >15,000</text><text x="973.5" y="379.7" font-size="12" fill="#fff" text-anchor="end" font-weight="normal" font-family='"Liberation Sans", sans-serif' >10,000</text><text x="973.5" y="393.8" font-size="12" fill="#fff" text-anchor="end" font-weight="normal" font-family='"Liberation Sans", sans-serif' >5,000</text><text x="973.5" y="407.8" font-size="12" fill="#fff" text-anchor="end" font-weight="normal" font-family='"Liberation Sans", sans-serif' >0</text><text x="1110.1" y="417.7" font-size="12" fill="#fff" text-anchor="middle" font-weight="normal" font-family='"Liberation Sans", sans-serif' >7:25:00 AM</text><text x="1256.0" y="417.7" font-size="12" fill="#fff" text-anchor="middle" font-weight="normal" font-family='"Liberation Sans", sans-serif' >7:30:00 AM</text><text x="1402.4" y="417.7" font-size="12" fill="#fff" text-anchor="middle" font-weight="normal" font-family='"Liberation Sans", sans-serif' >7:35:00 AM</text><text x="1548.9" y="417.7" font-size="12" fill="#fff" text-anchor="middle" font-weight="normal" font-family='"Liberation Sans", sans-serif' >7:40:00 AM</text><text x="1695.2" y="417.7" font-size="12" fill="#fff" text-anchor="middle" font-weight="normal" font-family='"Liberation Sans", sans-serif' >7:45:00 AM</text><text x="1842.0" y="417.7" font-size="12" fill="#fff" text-anchor="middle" font-weight="normal" font-family='"Liberation Sans", sans-serif' >7:50:00 AM</text><path d="M1001.5,307.7 L1008.7,321.1 L994.3,321.1 Z" fill="url(#wgrad)" stroke="#f2b800" stroke-width="2" stroke-linejoin="round"/><rect x="1000.5" y="311.0" width="2" height="7" fill="#000"/><rect x="1000.5" y="318.9" width="2" height="1.8" fill="#000"/><rect x="1334" y="399.0" width="61" height="9" rx="4.5" ry="4.5" fill="#ffff00"/><line x1="1336" y1="403.5" x2="1393" y2="403.5" stroke="#555" stroke-width="1"/><rect x="1454" y="399.0" width="104" height="9" rx="4.5" ry="4.5" fill="#ffff00"/><line x1="1456" y1="403.5" x2="1556" y2="403.5" stroke="#555" stroke-width="1"/><rect x="1608" y="399.0" width="98" height="9" rx="4.5" ry="4.5" fill="#ffff00"/><line x1="1610" y1="403.5" x2="1704" y2="403.5" stroke="#555" stroke-width="1"/><rect x="1740" y="399.0" width="54" height="9" rx="4.5" ry="4.5" fill="#ffff00"/><line x1="1742" y1="403.5" x2="1792" y2="403.5" stroke="#555" stroke-width="1"/><path d="M1865,403.5 L1865,399.0 L1818.5,399.0 A4.5,4.5 0 0 0 1814,403.5 Z" fill="#ffff00"/><line x1="1816" y1="403.5" x2="1863" y2="403.5" stroke="#555" stroke-width="1"/><rect x="1225" y="440.6" width="22" height="9.5" fill="#00ffff"/><text x="1252" y="451.2" font-size="12" fill="#fff" text-anchor="start" font-weight="normal" font-family='"Liberation Sans", sans-serif' >Network</text><rect x="1310" y="440.6" width="22" height="9.5" fill="#00ff00"/><text x="1337" y="451.2" font-size="12" fill="#fff" text-anchor="start" font-weight="normal" font-family='"Liberation Sans", sans-serif' >CPU</text><rect x="1378" y="440.6" width="22" height="9.5" fill="#4169e1"/><text x="1404" y="451.2" font-size="12" fill="#fff" text-anchor="start" font-weight="normal" font-family='"Liberation Sans", sans-serif' >Memory</text><rect x="1462" y="440.6" width="22" height="9.5" fill="#ff8c00"/><text x="1489" y="451.2" font-size="12" fill="#fff" text-anchor="start" font-weight="normal" font-family='"Liberation Sans", sans-serif' >Disk</text><rect x="1527" y="440.6" width="22" height="9.5" fill="#808080"/><text x="1554" y="451.2" font-size="12" fill="#fff" text-anchor="start" font-weight="normal" font-family='"Liberation Sans", sans-serif' >Other</text><line x1="959" y1="514.54" x2="1232" y2="514.54" stroke="#9a9a9a" stroke-width="1" stroke-dasharray="1 2"/><line x1="959" y1="534.08" x2="1232" y2="534.08" stroke="#9a9a9a" stroke-width="1" stroke-dasharray="1 2"/><line x1="959" y1="553.62" x2="1232" y2="553.62" stroke="#9a9a9a" stroke-width="1" stroke-dasharray="1 2"/><line x1="959" y1="573.1600000000001" x2="1232" y2="573.1600000000001" stroke="#9a9a9a" stroke-width="1" stroke-dasharray="1 2"/><line x1="1044.0" y1="494.5" x2="1044.0" y2="595.2" stroke="#9a9a9a" stroke-width="1" stroke-dasharray="1 2"/><line x1="1135.1" y1="494.5" x2="1135.1" y2="595.2" stroke="#9a9a9a" stroke-width="1" stroke-dasharray="1 2"/><line x1="1225.8" y1="494.5" x2="1225.8" y2="595.2" stroke="#9a9a9a" stroke-width="1" stroke-dasharray="1 2"/><path d="M959.0,592.2 L959.0,509.93 L961.24,510.02 L963.47,510.04 L965.71,509.69 L967.94,509.92 L970.18,509.91 L972.41,509.56 L974.65,509.8 L976.88,510.05 L979.12,510.06 L981.35,509.84 L983.59,509.99 L985.82,509.8 L988.06,509.9 L990.29,509.66 L992.53,510.06 L994.76,509.85 L997.0,510.25 L999.24,509.88 L1001.47,509.83 L1003.71,510.08 L1005.94,510.35 L1008.18,510.28 L1010.41,509.99 L1012.65,509.82 L1014.88,509.8 L1017.12,509.83 L1019.35,509.5 L1021.59,509.39 L1023.82,509.41 L1026.06,509.18 L1028.29,509.39 L1030.53,509.31 L1032.76,509.65 L1035.0,509.99 L1037.24,510.05 L1039.47,510.24 L1041.71,509.98 L1043.94,510.05 L1046.18,510.07 L1048.41,509.68 L1050.65,509.63 L1052.88,509.62 L1055.12,509.92 L1057.35,510.08 L1059.59,510.28 L1061.82,510.23 L1064.06,509.77 L1066.29,509.62 L1068.53,509.45 L1070.76,509.3 L1073.0,509.13 L1075.24,509.02 L1077.47,509.25 L1079.71,509.78 L1081.94,510.09 L1084.18,510.39 L1086.41,510.53 L1088.65,510.36 L1090.88,510.11 L1093.12,510.36 L1095.35,510.5 L1097.59,510.53 L1099.82,510.06 L1102.06,510.3 L1104.29,510.02 L1106.53,510.01 L1108.76,510.28 L1111.0,510.06 L1113.24,510.2 L1115.47,510.43 L1117.71,510.06 L1119.94,509.91 L1122.18,510.12 L1124.41,510.43 L1126.65,509.92 L1128.88,510.08 L1131.12,509.67 L1133.35,509.67 L1135.59,509.45 L1137.82,509.97 L1140.06,510.0 L1142.29,509.76 L1144.53,510.13 L1146.76,510.22 L1149.0,510.32 L1151.24,510.58 L1153.47,510.15 L1155.71,509.84 L1157.94,510.24 L1160.18,510.5 L1162.41,510.32 L1164.65,510.31 L1166.88,509.92 L1169.12,509.86 L1171.35,509.73 L1173.59,509.6 L1175.82,509.59 L1178.06,509.96 L1180.29,510.19 L1182.53,510.38 L1184.76,510.16 L1187.0,510.1 L1189.24,509.93 L1191.47,510.01 L1193.71,510.3 L1195.94,510.33 L1198.18,510.25 L1200.41,509.98 L1202.65,509.89 L1204.88,510.28 L1207.12,510.12 L1209.35,510.45 L1211.59,510.23 L1213.82,509.82 L1216.06,509.63 L1218.29,509.71 L1220.53,509.75 L1222.76,509.48 L1225.0,509.72 L1225.0,592.2 Z" fill="#5a6a7a" stroke="none"/><path d="M959.0,592.2 L959.0,511.1 L961.24,511.2 L963.47,511.21 L965.71,510.86 L967.94,511.09 L970.18,511.08 L972.41,510.73 L974.65,510.98 L976.88,511.22 L979.12,511.23 L981.35,511.01 L983.59,511.16 L985.82,510.97 L988.06,511.07 L990.29,510.84 L992.53,511.23 L994.76,511.02 L997.0,511.42 L999.24,511.06 L1001.47,511.01 L1003.71,511.25 L1005.94,511.52 L1008.18,511.46 L1010.41,511.16 L1012.65,511.0 L1014.88,510.97 L1017.12,511.0 L1019.35,510.68 L1021.59,510.56 L1023.82,510.58 L1026.06,510.35 L1028.29,510.57 L1030.53,510.48 L1032.76,510.82 L1035.0,511.16 L1037.24,511.23 L1039.47,511.42 L1041.71,511.15 L1043.94,511.23 L1046.18,511.24 L1048.41,510.86 L1050.65,510.8 L1052.88,510.79 L1055.12,511.09 L1057.35,511.25 L1059.59,511.45 L1061.82,511.41 L1064.06,510.94 L1066.29,510.79 L1068.53,510.62 L1070.76,510.47 L1073.0,510.31 L1075.24,510.19 L1077.47,510.43 L1079.71,510.96 L1081.94,511.26 L1084.18,511.56 L1086.41,511.7 L1088.65,511.53 L1090.88,511.29 L1093.12,511.53 L1095.35,511.67 L1097.59,511.7 L1099.82,511.24 L1102.06,511.47 L1104.29,511.19 L1106.53,511.18 L1108.76,511.45 L1111.0,511.23 L1113.24,511.37 L1115.47,511.6 L1117.71,511.23 L1119.94,511.08 L1122.18,511.3 L1124.41,511.6 L1126.65,511.09 L1128.88,511.25 L1131.12,510.84 L1133.35,510.84 L1135.59,510.62 L1137.82,511.15 L1140.06,511.17 L1142.29,510.93 L1144.53,511.31 L1146.76,511.39 L1149.0,511.49 L1151.24,511.75 L1153.47,511.32 L1155.71,511.02 L1157.94,511.41 L1160.18,511.67 L1162.41,511.49 L1164.65,511.49 L1166.88,511.1 L1169.12,511.03 L1171.35,510.91 L1173.59,510.77 L1175.82,510.76 L1178.06,511.13 L1180.29,511.37 L1182.53,511.56 L1184.76,511.33 L1187.0,511.28 L1189.24,511.1 L1191.47,511.19 L1193.71,511.48 L1195.94,511.5 L1198.18,511.42 L1200.41,511.16 L1202.65,511.06 L1204.88,511.46 L1207.12,511.3 L1209.35,511.62 L1211.59,511.4 L1213.82,510.99 L1216.06,510.81 L1218.29,510.89 L1220.53,510.92 L1222.76,510.65 L1225.0,510.89 L1225.0,592.2 Z" fill="#b04800" stroke="none"/><path d="M959.0,592.2 L959.0,561.35 L961.24,560.72 L963.47,560.55 L965.71,560.71 L967.94,560.98 L970.18,561.46 L972.41,561.36 L974.65,561.86 L976.88,561.63 L979.12,561.56 L981.35,560.96 L983.59,561.19 L985.82,561.38 L988.06,561.73 L990.29,561.05 L992.53,560.54 L994.76,560.85 L997.0,560.67 L999.24,560.77 L1001.47,560.91 L1003.71,560.52 L1005.94,560.66 L1008.18,560.49 L1010.41,560.73 L1012.65,560.58 L1014.88,560.42 L1017.12,560.6 L1019.35,560.21 L1021.59,560.64 L1023.82,560.42 L1026.06,560.3 L1028.29,560.24 L1030.53,559.9 L1032.76,559.75 L1035.0,560.24 L1037.24,560.87 L1039.47,561.05 L1041.71,560.81 L1043.94,561.09 L1046.18,560.58 L1048.41,560.77 L1050.65,561.34 L1052.88,560.81 L1055.12,560.56 L1057.35,560.17 L1059.59,559.79 L1061.82,560.53 L1064.06,560.7 L1066.29,560.87 L1068.53,561.22 L1070.76,561.13 L1073.0,560.78 L1075.24,561.06 L1077.47,560.61 L1079.71,560.86 L1081.94,561.37 L1084.18,561.4 L1086.41,561.75 L1088.65,561.05 L1090.88,560.77 L1093.12,560.41 L1095.35,560.52 L1097.59,561.16 L1099.82,561.25 L1102.06,561.51 L1104.29,561.62 L1106.53,561.08 L1108.76,561.52 L1111.0,561.39 L1113.24,561.29 L1115.47,560.93 L1117.71,560.55 L1119.94,560.09 L1122.18,560.35 L1124.41,560.27 L1126.65,560.65 L1128.88,560.91 L1131.12,561.22 L1133.35,561.38 L1135.59,561.27 L1137.82,561.57 L1140.06,561.7 L1142.29,561.2 L1144.53,560.67 L1146.76,561.31 L1149.0,560.81 L1151.24,560.33 L1153.47,560.77 L1155.71,560.62 L1157.94,560.79 L1160.18,560.67 L1162.41,560.16 L1164.65,559.9 L1166.88,560.18 L1169.12,560.82 L1171.35,561.1 L1173.59,560.83 L1175.82,560.67 L1178.06,560.31 L1180.29,560.04 L1182.53,560.19 L1184.76,559.83 L1187.0,559.99 L1189.24,560.35 L1191.47,560.56 L1193.71,560.89 L1195.94,560.91 L1198.18,561.07 L1200.41,561.48 L1202.65,561.35 L1204.88,560.74 L1207.12,560.89 L1209.35,560.66 L1211.59,560.56 L1213.82,560.47 L1216.06,560.66 L1218.29,560.27 L1220.53,560.26 L1222.76,560.87 L1225.0,561.15 L1225.0,592.2 Z" fill="#a9a0f0" stroke="none"/><polyline points="959.0,511.1 961.24,511.2 963.47,511.21 965.71,510.86 967.94,511.09 970.18,511.08 972.41,510.73 974.65,510.98 976.88,511.22 979.12,511.23 981.35,511.01 983.59,511.16 985.82,510.97 988.06,511.07 990.29,510.84 992.53,511.23 994.76,511.02 997.0,511.42 999.24,511.06 1001.47,511.01 1003.71,511.25 1005.94,511.52 1008.18,511.46 1010.41,511.16 1012.65,511.0 1014.88,510.97 1017.12,511.0 1019.35,510.68 1021.59,510.56 1023.82,510.58 1026.06,510.35 1028.29,510.57 1030.53,510.48 1032.76,510.82 1035.0,511.16 1037.24,511.23 1039.47,511.42 1041.71,511.15 1043.94,511.23 1046.18,511.24 1048.41,510.86 1050.65,510.8 1052.88,510.79 1055.12,511.09 1057.35,511.25 1059.59,511.45 1061.82,511.41 1064.06,510.94 1066.29,510.79 1068.53,510.62 1070.76,510.47 1073.0,510.31 1075.24,510.19 1077.47,510.43 1079.71,510.96 1081.94,511.26 1084.18,511.56 1086.41,511.7 1088.65,511.53 1090.88,511.29 1093.12,511.53 1095.35,511.67 1097.59,511.7 1099.82,511.24 1102.06,511.47 1104.29,511.19 1106.53,511.18 1108.76,511.45 1111.0,511.23 1113.24,511.37 1115.47,511.6 1117.71,511.23 1119.94,511.08 1122.18,511.3 1124.41,511.6 1126.65,511.09 1128.88,511.25 1131.12,510.84 1133.35,510.84 1135.59,510.62 1137.82,511.15 1140.06,511.17 1142.29,510.93 1144.53,511.31 1146.76,511.39 1149.0,511.49 1151.24,511.75 1153.47,511.32 1155.71,511.02 1157.94,511.41 1160.18,511.67 1162.41,511.49 1164.65,511.49 1166.88,511.1 1169.12,511.03 1171.35,510.91 1173.59,510.77 1175.82,510.76 1178.06,511.13 1180.29,511.37 1182.53,511.56 1184.76,511.33 1187.0,511.28 1189.24,511.1 1191.47,511.19 1193.71,511.48 1195.94,511.5 1198.18,511.42 1200.41,511.16 1202.65,511.06 1204.88,511.46 1207.12,511.3 1209.35,511.62 1211.59,511.4 1213.82,510.99 1216.06,510.81 1218.29,510.89 1220.53,510.92 1222.76,510.65 1225.0,510.89" fill="none" stroke="#404040" stroke-width="1.5" stroke-linejoin="round" /><polyline points="959.0,510.32 961.24,510.41 963.47,510.43 965.71,510.08 967.94,510.31 970.18,510.3 972.41,509.95 974.65,510.19 976.88,510.44 979.12,510.45 981.35,510.23 983.59,510.38 985.82,510.19 988.06,510.29 990.29,510.05 992.53,510.45 994.76,510.24 997.0,510.64 999.24,510.27 1001.47,510.22 1003.71,510.47 1005.94,510.74 1008.18,510.67 1010.41,510.38 1012.65,510.21 1014.88,510.19 1017.12,510.22 1019.35,509.9 1021.59,509.78 1023.82,509.8 1026.06,509.57 1028.29,509.78 1030.53,509.7 1032.76,510.04 1035.0,510.38 1037.24,510.44 1039.47,510.64 1041.71,510.37 1043.94,510.45 1046.18,510.46 1048.41,510.07 1050.65,510.02 1052.88,510.01 1055.12,510.31 1057.35,510.47 1059.59,510.67 1061.82,510.62 1064.06,510.16 1066.29,510.01 1068.53,509.84 1070.76,509.69 1073.0,509.53 1075.24,509.41 1077.47,509.64 1079.71,510.17 1081.94,510.48 1084.18,510.78 1086.41,510.92 1088.65,510.75 1090.88,510.5 1093.12,510.75 1095.35,510.89 1097.59,510.92 1099.82,510.45 1102.06,510.69 1104.29,510.41 1106.53,510.4 1108.76,510.67 1111.0,510.45 1113.24,510.59 1115.47,510.82 1117.71,510.45 1119.94,510.3 1122.18,510.51 1124.41,510.82 1126.65,510.31 1128.88,510.47 1131.12,510.06 1133.35,510.06 1135.59,509.84 1137.82,510.36 1140.06,510.39 1142.29,510.15 1144.53,510.53 1146.76,510.61 1149.0,510.71 1151.24,510.97 1153.47,510.54 1155.71,510.23 1157.94,510.63 1160.18,510.89 1162.41,510.71 1164.65,510.71 1166.88,510.31 1169.12,510.25 1171.35,510.12 1173.59,509.99 1175.82,509.98 1178.06,510.35 1180.29,510.58 1182.53,510.77 1184.76,510.55 1187.0,510.5 1189.24,510.32 1191.47,510.4 1193.71,510.69 1195.94,510.72 1198.18,510.64 1200.41,510.37 1202.65,510.28 1204.88,510.68 1207.12,510.51 1209.35,510.84 1211.59,510.62 1213.82,510.21 1216.06,510.02 1218.29,510.11 1220.53,510.14 1222.76,509.87 1225.0,510.11" fill="none" stroke="#3a8ad0" stroke-width="1.2" stroke-linejoin="round" /><polyline points="959.0,561.35 961.24,560.72 963.47,560.55 965.71,560.71 967.94,560.98 970.18,561.46 972.41,561.36 974.65,561.86 976.88,561.63 979.12,561.56 981.35,560.96 983.59,561.19 985.82,561.38 988.06,561.73 990.29,561.05 992.53,560.54 994.76,560.85 997.0,560.67 999.24,560.77 1001.47,560.91 1003.71,560.52 1005.94,560.66 1008.18,560.49 1010.41,560.73 1012.65,560.58 1014.88,560.42 1017.12,560.6 1019.35,560.21 1021.59,560.64 1023.82,560.42 1026.06,560.3 1028.29,560.24 1030.53,559.9 1032.76,559.75 1035.0,560.24 1037.24,560.87 1039.47,561.05 1041.71,560.81 1043.94,561.09 1046.18,560.58 1048.41,560.77 1050.65,561.34 1052.88,560.81 1055.12,560.56 1057.35,560.17 1059.59,559.79 1061.82,560.53 1064.06,560.7 1066.29,560.87 1068.53,561.22 1070.76,561.13 1073.0,560.78 1075.24,561.06 1077.47,560.61 1079.71,560.86 1081.94,561.37 1084.18,561.4 1086.41,561.75 1088.65,561.05 1090.88,560.77 1093.12,560.41 1095.35,560.52 1097.59,561.16 1099.82,561.25 1102.06,561.51 1104.29,561.62 1106.53,561.08 1108.76,561.52 1111.0,561.39 1113.24,561.29 1115.47,560.93 1117.71,560.55 1119.94,560.09 1122.18,560.35 1124.41,560.27 1126.65,560.65 1128.88,560.91 1131.12,561.22 1133.35,561.38 1135.59,561.27 1137.82,561.57 1140.06,561.7 1142.29,561.2 1144.53,560.67 1146.76,561.31 1149.0,560.81 1151.24,560.33 1153.47,560.77 1155.71,560.62 1157.94,560.79 1160.18,560.67 1162.41,560.16 1164.65,559.9 1166.88,560.18 1169.12,560.82 1171.35,561.1 1173.59,560.83 1175.82,560.67 1178.06,560.31 1180.29,560.04 1182.53,560.19 1184.76,559.83 1187.0,559.99 1189.24,560.35 1191.47,560.56 1193.71,560.89 1195.94,560.91 1198.18,561.07 1200.41,561.48 1202.65,561.35 1204.88,560.74 1207.12,560.89 1209.35,560.66 1211.59,560.56 1213.82,560.47 1216.06,560.66 1218.29,560.27 1220.53,560.26 1222.76,560.87 1225.0,561.15" fill="none" stroke="#505050" stroke-width="1.5" stroke-linejoin="round" /><rect x="959" y="588" width="273" height="4.2" fill="#8db050"/><polyline points="959,588 969,588 979.3,539.3 988.4,539.3 997.5,588 1006.6,588 1015.6,539.3 1034.9,539.3 1042.8,588 1062.1,588 1070,539.3 1080.2,539.3 1088.2,588 1115.4,588 1124.4,539.3 1134.6,539.3 1142.6,588 1160.7,588 1170.9,539.3 1180,539.3 1187.9,588 1216.3,588 1225.3,539.3" fill="none" stroke="#ff2020" stroke-width="1.2" stroke-linejoin="round" /><line x1="954" y1="495.0" x2="959" y2="495.0" stroke="#8a8a8a" stroke-width="1"/><line x1="954" y1="514.54" x2="959" y2="514.54" stroke="#8a8a8a" stroke-width="1"/><line x1="954" y1="534.08" x2="959" y2="534.08" stroke="#8a8a8a" stroke-width="1"/><line x1="954" y1="553.62" x2="959" y2="553.62" stroke="#8a8a8a" stroke-width="1"/><line x1="954" y1="573.1600000000001" x2="959" y2="573.1600000000001" stroke="#8a8a8a" stroke-width="1"/><line x1="954" y1="592.7" x2="959" y2="592.7" stroke="#8a8a8a" stroke-width="1"/><line x1="959.5" y1="494.5" x2="959.5" y2="593.2" stroke="#8a8a8a" stroke-width="1"/><line x1="959" y1="495.0" x2="1233" y2="495.0" stroke="#8a8a8a" stroke-width="1"/><line x1="959" y1="592.7" x2="1233" y2="592.7" stroke="#8a8a8a" stroke-width="1"/><line x1="1232.5" y1="494.5" x2="1232.5" y2="593.2" stroke="#8a8a8a" stroke-width="1"/><line x1="1225.5" y1="494.5" x2="1225.5" y2="593.2" stroke="#ff0000" stroke-width="1.5"/><text x="953.3" y="499.0" font-size="12" fill="#fff" text-anchor="end" font-weight="normal" font-family='"Liberation Sans", sans-serif' >10,000</text><text x="953.3" y="518.5" font-size="12" fill="#fff" text-anchor="end" font-weight="normal" font-family='"Liberation Sans", sans-serif' >8,000</text><text x="953.3" y="538.1" font-size="12" fill="#fff" text-anchor="end" font-weight="normal" font-family='"Liberation Sans", sans-serif' >6,000</text><text x="953.3" y="557.6" font-size="12" fill="#fff" text-anchor="end" font-weight="normal" font-family='"Liberation Sans", sans-serif' >4,000</text><text x="953.3" y="577.2" font-size="12" fill="#fff" text-anchor="end" font-weight="normal" font-family='"Liberation Sans", sans-serif' >2,000</text><text x="953.3" y="596.7" font-size="12" fill="#fff" text-anchor="end" font-weight="normal" font-family='"Liberation Sans", sans-serif' >0</text><text x="1044.0" y="607.8" font-size="12" fill="#fff" text-anchor="middle" font-weight="normal" font-family='"Liberation Sans", sans-serif' >7:30:00 AM</text><text x="1135.1" y="607.8" font-size="12" fill="#fff" text-anchor="middle" font-weight="normal" font-family='"Liberation Sans", sans-serif' >7:40:00 AM</text><text x="1225.8" y="607.8" font-size="12" fill="#fff" text-anchor="middle" font-weight="normal" font-family='"Liberation Sans", sans-serif' >7:50:00 AM</text><path d="M973.5,497.2 L980.7,510.6 L966.3,510.6 Z" fill="url(#wgrad)" stroke="#f2b800" stroke-width="2" stroke-linejoin="round"/><rect x="972.5" y="500.5" width="2" height="7" fill="#000"/><rect x="972.5" y="508.4" width="2" height="1.8" fill="#000"/><rect x="967" y="614.8" width="22" height="9" fill="#a9a0f0"/><text x="994" y="625.1" font-size="12" fill="#fff" text-anchor="start" font-weight="normal" font-family='"Liberation Sans", sans-serif' >Buffer / PLE sec</text><rect x="968" y="630" width="22" height="9" fill="#b04800"/><text x="994" y="640.3" font-size="12" fill="#fff" text-anchor="start" font-weight="normal" font-family='"Liberation Sans", sans-serif' >Stolen Buffer</text><rect x="1095" y="614.8" width="22" height="9" fill="#ff7f50"/><text x="1122" y="625.1" font-size="12" fill="#fff" text-anchor="start" font-weight="normal" font-family='"Liberation Sans", sans-serif' >In-Mem OLTP</text><rect x="1095" y="630" width="22" height="9" fill="url(#dots)" stroke="#777" stroke-width="1"/><text x="1122" y="640.3" font-size="12" fill="#fff" text-anchor="start" font-weight="normal" font-family='"Liberation Sans", sans-serif' >Free</text><rect x="1212" y="614.8" width="22" height="9" fill="#4169e1"/><text x="1239" y="625.1" font-size="12" fill="#fff" text-anchor="start" font-weight="normal" font-family='"Liberation Sans", sans-serif' >Plan (SQL)</text><rect x="1212" y="630" width="22" height="9" fill="#00bfff"/><text x="1239" y="640.3" font-size="12" fill="#fff" text-anchor="start" font-weight="normal" font-family='"Liberation Sans", sans-serif' >Plan (Objects)</text><rect x="1329" y="614.8" width="22" height="9" fill="#ffa500"/><text x="1356" y="625.1" font-size="12" fill="#fff" text-anchor="start" font-weight="normal" font-family='"Liberation Sans", sans-serif' >Columnstore</text><line x1="1329" y1="634.5" x2="1351" y2="634.5" stroke="#e00000" stroke-width="1"/><text x="1356" y="638.8" font-size="12" fill="#fff" text-anchor="start" font-weight="normal" font-family='"Liberation Sans", sans-serif' >Query Grants</text><rect x="1442" y="614.8" width="22" height="9" fill="#808080"/><text x="1469" y="625.1" font-size="12" fill="#fff" text-anchor="start" font-weight="normal" font-family='"Liberation Sans", sans-serif' >Other</text><line x1="1295" y1="514.9" x2="1522" y2="514.9" stroke="#9a9a9a" stroke-width="1" stroke-dasharray="1 2"/><line x1="1295" y1="534.3" x2="1522" y2="534.3" stroke="#9a9a9a" stroke-width="1" stroke-dasharray="1 2"/><line x1="1295" y1="553.7" x2="1522" y2="553.7" stroke="#9a9a9a" stroke-width="1" stroke-dasharray="1 2"/><line x1="1295" y1="573.1" x2="1522" y2="573.1" stroke="#9a9a9a" stroke-width="1" stroke-dasharray="1 2"/><line x1="1441.1" y1="495" x2="1441.1" y2="595" stroke="#9a9a9a" stroke-width="1" stroke-dasharray="1 2"/><polyline points="1295.28,585.84 1296.59,562.21 1298.56,579.27 1304.47,547.77 1307.75,568.77 1310.38,566.15 1311.69,587.15 1319.57,526.76 1322.2,584.53 1327.45,569.43 1330.07,564.83 1332.04,551.05 1337.95,549.08 1339.92,587.15 1345.83,566.8 1349.77,587.15 1353.7,585.84 1362.89,516.26 1364.86,581.24 1369.46,558.92 1371.43,584.53 1376.02,571.4 1380.62,535.95 1382.59,585.84 1386.53,564.83 1389.15,577.3 1395.72,585.18 1403.59,514.29 1407.53,587.15 1414.1,568.77 1418.03,576.65 1422.63,550.39 1424.6,587.15 1431.16,575.34 1436.41,585.84 1444.29,539.89 1448.23,568.77 1451.51,561.55 1454.14,587.15 1461.36,554.33 1466.61,587.15 1471.86,550.39 1474.49,587.15 1479.08,562.21 1483.68,533.32 1487.62,575.34 1494.18,565.49 1496.81,587.15 1503.37,543.83 1507.31,587.15 1508.62,556.96 1512.56,581.9 1517.81,585.84 1521.75,551.7" fill="none" stroke="#7b68ee" stroke-width="2" stroke-dasharray="1.6 1.4"/><rect x="1295" y="587.8" width="227" height="4" fill="#8db050"/><polyline points="1294.89,507.07 1299.88,505.1 1310.38,499.85 1318.91,506.41 1326.79,520.2 1334.01,515.6 1341.89,502.47 1349.77,506.41 1356.99,502.47 1364.21,514.29 1372.08,516.91 1379.96,511.66 1387.18,514.29 1395.06,508.38 1402.28,512.32 1410.16,514.94 1418.03,501.82 1425.91,508.38 1433.13,511.01 1440.35,500.5 1447.57,504.44 1455.45,520.85 1463.33,504.44 1470.55,506.41 1478.43,508.38 1486.04,514.94 1492.87,511.66 1500.74,502.47 1508.62,505.1 1516.5,511.01" fill="none" stroke="#4169e1" stroke-width="2" stroke-linejoin="round" /><polyline points="1294.89,496.56 1307.75,495.25 1318.26,495.51 1326.79,501.16 1334.01,495.51 1344.51,495.51 1357.64,495.91 1365.52,496.56 1381.27,497.22 1394.4,495.51 1402.28,506.41 1410.16,497.22 1418.03,495.51 1436.41,495.91 1446.92,495.51 1455.45,500.5 1462.67,495.51 1478.43,495.51 1486.04,502.47 1492.87,495.51 1502.06,495.91 1516.5,495.25" fill="none" stroke="#00bfff" stroke-width="2" stroke-linejoin="round" /><path d="M1295,591.75 L1295,586.75 L1304.7,586.75 A5.0,5.0 0 0 1 1309.7,591.75 Z" fill="#add8e6"/><line x1="1297" y1="591.75" x2="1307.7" y2="591.75" stroke="#555" stroke-width="1"/><rect x="1318.91" y="586.75" width="32.819999999999936" height="10" rx="5.0" ry="5.0" fill="#add8e6"/><line x1="1320.91" y1="591.75" x2="1349.73" y2="591.75" stroke="#555" stroke-width="1"/><rect x="1353.05" y="586.75" width="21.660000000000082" height="10" rx="5.0" ry="5.0" fill="#add8e6"/><line x1="1355.05" y1="591.75" x2="1372.71" y2="591.75" stroke="#555" stroke-width="1"/><rect x="1391.12" y="586.75" width="20.350000000000136" height="10" rx="5.0" ry="5.0" fill="#add8e6"/><line x1="1393.12" y1="591.75" x2="1409.47" y2="591.75" stroke="#555" stroke-width="1"/><rect x="1411.47" y="586.75" width="23.62999999999988" height="10" rx="5.0" ry="5.0" fill="#add8e6"/><line x1="1413.47" y1="591.75" x2="1433.1" y2="591.75" stroke="#555" stroke-width="1"/><rect x="1452.17" y="586.75" width="21.0" height="10" rx="5.0" ry="5.0" fill="#add8e6"/><line x1="1454.17" y1="591.75" x2="1471.17" y2="591.75" stroke="#555" stroke-width="1"/><rect x="1479.08" y="586.75" width="20.350000000000136" height="10" rx="5.0" ry="5.0" fill="#add8e6"/><line x1="1481.08" y1="591.75" x2="1497.43" y2="591.75" stroke="#555" stroke-width="1"/><rect x="1498.77" y="586.75" width="20.34999999999991" height="10" rx="5.0" ry="5.0" fill="#add8e6"/><line x1="1500.77" y1="591.75" x2="1517.12" y2="591.75" stroke="#555" stroke-width="1"/><line x1="1290" y1="495.5" x2="1295" y2="495.5" stroke="#8a8a8a" stroke-width="1"/><line x1="1290" y1="514.9" x2="1295" y2="514.9" stroke="#8a8a8a" stroke-width="1"/><line x1="1290" y1="534.3" x2="1295" y2="534.3" stroke="#8a8a8a" stroke-width="1"/><line x1="1290" y1="553.7" x2="1295" y2="553.7" stroke="#8a8a8a" stroke-width="1"/><line x1="1290" y1="573.1" x2="1295" y2="573.1" stroke="#8a8a8a" stroke-width="1"/><line x1="1290" y1="592.5" x2="1295" y2="592.5" stroke="#8a8a8a" stroke-width="1"/><line x1="1522" y1="495.5" x2="1527" y2="495.5" stroke="#8a8a8a" stroke-width="1"/><line x1="1522" y1="514.9" x2="1527" y2="514.9" stroke="#8a8a8a" stroke-width="1"/><line x1="1522" y1="534.3" x2="1527" y2="534.3" stroke="#8a8a8a" stroke-width="1"/><line x1="1522" y1="553.7" x2="1527" y2="553.7" stroke="#8a8a8a" stroke-width="1"/><line x1="1522" y1="573.1" x2="1527" y2="573.1" stroke="#8a8a8a" stroke-width="1"/><line x1="1522" y1="592.5" x2="1527" y2="592.5" stroke="#8a8a8a" stroke-width="1"/><line x1="1295.5" y1="495" x2="1295.5" y2="593" stroke="#8a8a8a" stroke-width="1"/><line x1="1295" y1="495.5" x2="1523" y2="495.5" stroke="#8a8a8a" stroke-width="1"/><line x1="1295" y1="592.5" x2="1523" y2="592.5" stroke="#8a8a8a" stroke-width="1"/><line x1="1522.5" y1="495" x2="1522.5" y2="593" stroke="#ff0000" stroke-width="1.2"/><text x="1288.7" y="499.5" font-size="12" fill="#fff" text-anchor="end" font-weight="normal" font-family='"Liberation Sans", sans-serif' >100%</text><text x="1288.7" y="518.9" font-size="12" fill="#fff" text-anchor="end" font-weight="normal" font-family='"Liberation Sans", sans-serif' >80%</text><text x="1288.7" y="538.3" font-size="12" fill="#fff" text-anchor="end" font-weight="normal" font-family='"Liberation Sans", sans-serif' >60%</text><text x="1288.7" y="557.7" font-size="12" fill="#fff" text-anchor="end" font-weight="normal" font-family='"Liberation Sans", sans-serif' >40%</text><text x="1288.7" y="577.1" font-size="12" fill="#fff" text-anchor="end" font-weight="normal" font-family='"Liberation Sans", sans-serif' >20%</text><text x="1288.7" y="596.5" font-size="12" fill="#fff" text-anchor="end" font-weight="normal" font-family='"Liberation Sans", sans-serif' >0%</text><text x="1528" y="499.5" font-size="12" fill="#fff" text-anchor="start" font-weight="normal" font-family='"Liberation Sans", sans-serif' >0.1K</text><text x="1528" y="518.9" font-size="12" fill="#fff" text-anchor="start" font-weight="normal" font-family='"Liberation Sans", sans-serif' >0.1K</text><text x="1528" y="538.3" font-size="12" fill="#fff" text-anchor="start" font-weight="normal" font-family='"Liberation Sans", sans-serif' >0.1K</text><text x="1528" y="557.7" font-size="12" fill="#fff" text-anchor="start" font-weight="normal" font-family='"Liberation Sans", sans-serif' >0.0K</text><text x="1528" y="577.1" font-size="12" fill="#fff" text-anchor="start" font-weight="normal" font-family='"Liberation Sans", sans-serif' >0.0K</text><text x="1528" y="596.5" font-size="12" fill="#fff" text-anchor="start" font-weight="normal" font-family='"Liberation Sans", sans-serif' >0.0K</text><text x="1441.1" y="607.8" font-size="12" fill="#fff" text-anchor="middle" font-weight="normal" font-family='"Liberation Sans", sans-serif' >7:40:00 AM</text><path d="M1309.5,497.2 L1316.7,510.6 L1302.3,510.6 Z" fill="url(#wgrad)" stroke="#f2b800" stroke-width="2" stroke-linejoin="round"/><rect x="1308.5" y="500.5" width="2" height="7" fill="#000"/><rect x="1308.5" y="508.4" width="2" height="1.8" fill="#000"/><line x1="1624" y1="527.7" x2="1893" y2="527.7" stroke="#9a9a9a" stroke-width="1" stroke-dasharray="1 2"/><line x1="1624" y1="560.2" x2="1893" y2="560.2" stroke="#9a9a9a" stroke-width="1" stroke-dasharray="1 2"/><line x1="1706.1" y1="494.7" x2="1706.1" y2="595.2" stroke="#9a9a9a" stroke-width="1" stroke-dasharray="1 2"/><line x1="1796.1" y1="494.7" x2="1796.1" y2="595.2" stroke="#9a9a9a" stroke-width="1" stroke-dasharray="1 2"/><line x1="1886.1" y1="494.7" x2="1886.1" y2="595.2" stroke="#9a9a9a" stroke-width="1" stroke-dasharray="1 2"/><polyline points="1624.0,589.97 1625.35,586.39 1626.7,585.76 1628.06,586.25 1629.41,583.49 1630.76,569.19 1632.11,586.44 1633.46,589.12 1634.81,586.83 1636.17,576.4 1637.52,587.75 1638.87,588.16 1640.22,589.94 1641.57,588.74 1642.92,586.27 1644.28,585.53 1645.63,586.86 1646.98,585.39 1648.33,585.51 1649.68,586.12 1651.04,587.51 1652.39,570.65 1653.74,589.17 1655.09,584.15 1656.44,584.48 1657.79,589.01 1659.15,591.35 1660.5,578.22 1661.85,587.05 1663.2,589.66 1664.55,590.59 1665.9,585.65 1667.26,585.26 1668.61,589.09 1669.96,584.98 1671.31,574.5 1672.66,585.52 1674.02,584.68 1675.37,586.28 1676.72,584.36 1678.07,589.66 1679.42,591.09 1680.77,588.79 1682.13,569.01 1683.48,581.38 1684.83,590.03 1686.18,588.34 1687.53,585.36 1688.88,590.31 1690.24,587.49 1691.59,583.79 1692.94,581.84 1694.29,565.33 1695.64,578.69 1696.99,583.36 1698.35,588.63 1699.7,588.85 1701.05,587.88 1702.4,585.74 1703.75,575.73 1705.11,567.79 1706.46,582.18 1707.81,566.65 1709.16,585.56 1710.51,587.44 1711.86,589.45 1713.22,585.92 1714.57,583.06 1715.92,567.9 1717.27,583.79 1718.62,582.08 1719.97,587.79 1721.33,584.6 1722.68,582.0 1724.03,581.44 1725.38,570.54 1726.73,589.96 1728.09,574.94 1729.44,591.61 1730.79,592.2 1732.14,589.41 1733.49,584.64 1734.84,587.54 1736.2,586.07 1737.55,587.6 1738.9,575.67 1740.25,587.75 1741.6,591.2 1742.95,585.25 1744.31,584.26 1745.66,585.53 1747.01,585.15 1748.36,574.4 1749.71,590.63 1751.07,585.86 1752.42,569.35 1753.77,586.01 1755.12,583.82 1756.47,564.21 1757.82,584.19 1759.18,582.09 1760.53,582.82 1761.88,582.51 1763.23,584.26 1764.58,583.55 1765.93,565.96 1767.29,582.7 1768.64,587.8 1769.99,588.38 1771.34,590.67 1772.69,566.68 1774.05,582.05 1775.4,586.45 1776.75,584.5 1778.1,588.26 1779.45,589.98 1780.8,589.09 1782.16,586.22 1783.51,583.7 1784.86,582.13 1786.21,565.85 1787.56,587.97 1788.91,566.21 1790.27,582.0 1791.62,581.71 1792.97,580.75 1794.32,582.38 1795.67,585.47 1797.03,583.42 1798.38,588.93 1799.73,570.75 1801.08,584.02 1802.43,583.17 1803.78,584.73 1805.14,583.68 1806.49,589.78 1807.84,590.81 1809.19,592.2 1810.54,579.11 1811.89,586.38 1813.25,571.09 1814.6,583.07 1815.95,582.73 1817.3,568.47 1818.65,586.72 1820.01,583.19 1821.36,586.06 1822.71,584.59 1824.06,582.97 1825.41,583.68 1826.76,581.52 1828.12,587.09 1829.47,573.71 1830.82,584.79 1832.17,584.44 1833.52,582.28 1834.87,582.79 1836.23,581.15 1837.58,584.29 1838.93,585.73 1840.28,583.28 1841.63,586.38 1842.98,585.9 1844.34,585.99 1845.69,587.36 1847.04,589.52 1848.39,585.7 1849.74,588.58 1851.1,583.47 1852.45,584.25 1853.8,588.17 1855.15,587.81 1856.5,588.36 1857.85,586.95 1859.21,585.83 1860.56,576.6 1861.91,582.63 1863.26,585.69 1864.61,587.4 1865.96,587.34 1867.32,588.46 1868.67,585.54 1870.02,588.98 1871.37,570.66 1872.72,584.75 1874.08,583.53 1875.43,566.95 1876.78,586.7 1878.13,590.33 1879.48,580.92 1880.83,565.39 1882.19,583.87 1883.54,585.69 1884.89,588.34 1886.24,575.13 1887.59,590.62 1888.94,592.2 1890.3,592.2 1891.65,590.39 1893.0,567.06" fill="none" stroke="#ff9a00" stroke-width="1.1" stroke-linejoin="round" /><polyline points="1624.0,587.55 1625.35,581.56 1626.7,548.01 1628.06,511.96 1629.41,528.37 1630.76,563.47 1632.11,586.84 1633.46,590.86 1634.81,589.43 1636.17,587.36 1637.52,581.48 1638.87,547.92 1640.22,534.3 1641.57,535.07 1642.92,569.35 1644.28,585.57 1645.63,590.77 1646.98,589.23 1648.33,587.99 1649.68,579.55 1651.04,555.99 1652.39,530.69 1653.74,529.27 1655.09,567.15 1656.44,587.07 1657.79,590.51 1659.15,588.99 1660.5,587.41 1661.85,578.43 1663.2,556.12 1664.55,526.21 1665.9,529.45 1667.26,566.12 1668.61,585.8 1669.96,590.98 1671.31,589.23 1672.66,587.63 1674.02,580.88 1675.37,561.42 1676.72,517.7 1678.07,539.56 1679.42,564.48 1680.77,586.98 1682.13,590.96 1683.48,589.56 1684.83,588.43 1686.18,581.76 1687.53,551.99 1688.88,517.08 1690.24,530.92 1691.59,563.58 1692.94,586.24 1694.29,590.7 1695.64,588.77 1696.99,588.01 1698.35,578.49 1699.7,551.9 1701.05,518.26 1702.4,539.65 1703.75,569.4 1705.11,587.25 1706.46,590.78 1707.81,588.69 1709.16,587.05 1710.51,578.63 1711.86,560.04 1713.22,517.67 1714.57,520.85 1715.92,561.98 1717.27,585.52 1718.62,590.9 1719.97,589.56 1721.33,587.19 1722.68,579.09 1724.03,549.04 1725.38,524.46 1726.73,518.04 1728.09,568.84 1729.44,585.15 1730.79,590.48 1732.14,589.38 1733.49,588.43 1734.84,579.95 1736.2,551.93 1737.55,526.97 1738.9,538.39 1740.25,567.41 1741.6,585.45 1742.95,590.93 1744.31,588.7 1745.66,588.12 1747.01,581.52 1748.36,560.14 1749.71,510.47 1751.07,517.76 1752.42,567.0 1753.77,587.11 1755.12,590.61 1756.47,588.75 1757.82,588.52 1759.18,579.57 1760.53,549.55 1761.88,524.13 1763.23,525.87 1764.58,562.03 1765.93,586.78 1767.29,590.83 1768.64,589.01 1769.99,587.6 1771.34,580.01 1772.69,556.98 1774.05,511.62 1775.4,532.75 1776.75,563.31 1778.1,585.29 1779.45,590.75 1780.8,589.7 1782.16,588.17 1783.51,582.15 1784.86,559.63 1786.21,532.99 1787.56,531.42 1788.91,566.48 1790.27,586.31 1791.62,590.6 1792.97,588.99 1794.32,587.37 1795.67,580.79 1797.03,552.31 1798.38,521.75 1799.73,536.68 1801.08,564.67 1802.43,586.6 1803.78,590.6 1805.14,588.93 1806.49,588.13 1807.84,580.47 1809.19,555.26 1810.54,528.37 1811.89,538.8 1813.25,569.75 1814.6,585.07 1815.95,590.56 1817.3,589.26 1818.65,587.41 1820.01,581.23 1821.36,551.63 1822.71,511.26 1824.06,520.88 1825.41,565.5 1826.76,585.09 1828.12,590.46 1829.47,589.7 1830.82,587.84 1832.17,580.39 1833.52,557.83 1834.87,520.01 1836.23,536.29 1837.58,562.61 1838.93,585.37 1840.28,590.95 1841.63,588.98 1842.98,588.09 1844.34,579.55 1845.69,551.9 1847.04,510.59 1848.39,520.28 1849.74,566.79 1851.1,585.66 1852.45,590.9 1853.8,588.95 1855.15,587.83 1856.5,581.24 1857.85,558.34 1859.21,530.47 1860.56,520.32 1861.91,569.28 1863.26,586.8 1864.61,590.87 1865.96,589.58 1867.32,587.3 1868.67,579.78 1870.02,552.28 1871.37,512.58 1872.72,528.82 1874.08,569.88 1875.43,586.89 1876.78,590.69 1878.13,588.95 1879.48,586.98 1880.83,580.12 1882.19,558.51 1883.54,520.63 1884.89,516.93 1886.24,566.85 1887.59,585.21 1888.94,590.47 1890.3,589.11 1891.65,587.72 1893.0,581.86" fill="none" stroke="#ff4a0a" stroke-width="1.3" stroke-linejoin="round" /><line x1="1619" y1="495.2" x2="1624" y2="495.2" stroke="#8a8a8a" stroke-width="1"/><line x1="1619" y1="527.7" x2="1624" y2="527.7" stroke="#8a8a8a" stroke-width="1"/><line x1="1619" y1="560.2" x2="1624" y2="560.2" stroke="#8a8a8a" stroke-width="1"/><line x1="1619" y1="592.7" x2="1624" y2="592.7" stroke="#8a8a8a" stroke-width="1"/><line x1="1624.5" y1="494.7" x2="1624.5" y2="593.2" stroke="#8a8a8a" stroke-width="1"/><line x1="1624" y1="495.2" x2="1894" y2="495.2" stroke="#8a8a8a" stroke-width="1"/><line x1="1624" y1="592.7" x2="1894" y2="592.7" stroke="#8a8a8a" stroke-width="1"/><line x1="1893.5" y1="494.7" x2="1893.5" y2="593.2" stroke="#ff0000" stroke-width="1.2"/><text x="1617.6" y="499.2" font-size="12" fill="#fff" text-anchor="end" font-weight="normal" font-family='"Liberation Sans", sans-serif' >6,000</text><text x="1617.6" y="531.7" font-size="12" fill="#fff" text-anchor="end" font-weight="normal" font-family='"Liberation Sans", sans-serif' >4,000</text><text x="1617.6" y="564.2" font-size="12" fill="#fff" text-anchor="end" font-weight="normal" font-family='"Liberation Sans", sans-serif' >2,000</text><text x="1617.6" y="596.7" font-size="12" fill="#fff" text-anchor="end" font-weight="normal" font-family='"Liberation Sans", sans-serif' >0</text><text x="1706.1" y="607.8" font-size="12" fill="#fff" text-anchor="middle" font-weight="normal" font-family='"Liberation Sans", sans-serif' >7:30:00 AM</text><text x="1796.1" y="607.8" font-size="12" fill="#fff" text-anchor="middle" font-weight="normal" font-family='"Liberation Sans", sans-serif' >7:40:00 AM</text><text x="1886.1" y="607.8" font-size="12" fill="#fff" text-anchor="middle" font-weight="normal" font-family='"Liberation Sans", sans-serif' >7:50:00 AM</text><text x="1649" y="640" font-size="12" fill="#fff" text-anchor="start" font-weight="normal" font-family='"Liberation Sans", sans-serif' >Pages:</text><rect x="1700" y="629.4" width="22" height="10" fill="#ff8c00"/><text x="1727.6" y="640.2" font-size="12" fill="#fff" text-anchor="start" font-weight="normal" font-family='"Liberation Sans", sans-serif' >Read</text><rect x="1770" y="629.4" width="22" height="10" fill="#ff4500"/><text x="1797" y="640.2" font-size="12" fill="#fff" text-anchor="start" font-weight="normal" font-family='"Liberation Sans", sans-serif' >Write</text><line x1="951" y1="701.9666666666667" x2="1211" y2="701.9666666666667" stroke="#9a9a9a" stroke-width="1" stroke-dasharray="1 2"/><line x1="951" y1="716.9333333333333" x2="1211" y2="716.9333333333333" stroke="#9a9a9a" stroke-width="1" stroke-dasharray="1 2"/><line x1="951" y1="731.9" x2="1211" y2="731.9" stroke="#9a9a9a" stroke-width="1" stroke-dasharray="1 2"/><line x1="951" y1="746.8666666666667" x2="1211" y2="746.8666666666667" stroke="#9a9a9a" stroke-width="1" stroke-dasharray="1 2"/><line x1="951" y1="761.8333333333333" x2="1211" y2="761.8333333333333" stroke="#9a9a9a" stroke-width="1" stroke-dasharray="1 2"/><line x1="1031.1" y1="686.5" x2="1031.1" y2="779.3" stroke="#9a9a9a" stroke-width="1" stroke-dasharray="1 2"/><line x1="1117.7" y1="686.5" x2="1117.7" y2="779.3" stroke="#9a9a9a" stroke-width="1" stroke-dasharray="1 2"/><line x1="1205.7" y1="686.5" x2="1205.7" y2="779.3" stroke="#9a9a9a" stroke-width="1" stroke-dasharray="1 2"/><polyline points="951.0,774.05 953.92,772.56 956.84,772.56 959.76,774.8 962.69,774.05 965.61,774.05 968.53,775.55 971.45,774.8 974.37,775.55 977.29,772.56 980.21,774.05 983.13,776.3 986.06,774.05 988.98,772.56 991.9,775.55 994.82,774.05 997.74,774.05 1000.66,774.8 1003.58,774.8 1006.51,775.55 1009.43,775.55 1012.35,772.56 1015.27,775.55 1018.19,774.05 1021.11,772.56 1024.03,774.8 1026.96,774.05 1029.88,772.56 1032.8,774.05 1035.72,774.8 1038.64,776.3 1041.56,776.3 1044.48,776.3 1047.4,775.55 1050.33,774.8 1053.25,774.05 1056.17,776.3 1059.09,772.56 1062.01,776.3 1064.93,776.3 1067.85,775.55 1070.78,774.8 1073.7,772.56 1076.62,774.05 1079.54,776.3 1082.46,774.8 1085.38,774.05 1088.3,772.56 1091.22,775.55 1094.15,774.8 1097.07,772.56 1099.99,774.05 1102.91,775.55 1105.83,772.56 1108.75,772.56 1111.67,776.3 1114.6,775.55 1117.52,772.56 1120.44,774.8 1123.36,775.55 1126.28,772.56 1129.2,772.56 1132.12,775.55 1135.04,774.05 1137.97,774.05 1140.89,775.55 1143.81,772.56 1146.73,775.55 1149.65,776.3 1152.57,774.8 1155.49,772.56 1158.42,776.3 1161.34,772.56 1164.26,776.3 1167.18,772.56 1170.1,774.8 1173.02,776.3 1175.94,774.05 1178.87,776.3 1181.79,774.05 1184.71,772.56 1187.63,772.56 1190.55,775.55 1193.47,774.8 1196.39,776.3 1199.31,776.3 1202.24,772.56 1205.16,776.3 1208.08,774.8 1211.0,774.8" fill="none" stroke="#20b2aa" stroke-width="1.2" stroke-linejoin="round" /><polyline points="951.0,711.94 953.92,771.81 956.84,774.8 959.76,776.3 962.69,774.8 965.61,774.8 968.53,773.31 971.45,776.3 974.37,771.81 977.29,758.34 980.21,771.81 983.13,774.8 986.06,773.31 988.98,776.3 991.9,776.3 994.82,766.57 997.74,774.8 1000.66,774.8 1003.58,774.8 1006.51,771.81 1009.43,775.55 1012.35,774.8 1015.27,776.3 1018.19,758.34 1021.11,771.81 1024.03,775.55 1026.96,774.8 1029.88,776.3 1032.8,775.55 1035.72,771.81 1038.64,761.33 1041.56,686.5 1044.48,773.31 1047.4,774.8 1050.33,769.56 1053.25,776.3 1056.17,774.8 1059.09,773.31 1062.01,776.3 1064.93,775.55 1067.85,729.9 1070.78,775.55 1073.7,774.8 1076.62,776.3 1079.54,775.55 1082.46,776.3 1085.38,773.31 1088.3,765.82 1091.22,771.81 1094.15,776.3 1097.07,774.8 1099.99,769.56 1102.91,773.31 1105.83,771.81 1108.75,771.81 1111.67,775.55 1114.6,771.81 1117.52,737.39 1120.44,774.8 1123.36,760.58 1126.28,773.31 1129.2,776.3 1132.12,771.81 1135.04,771.81 1137.97,767.32 1140.89,773.31 1143.81,776.3 1146.73,776.3 1149.65,776.3 1152.57,774.8 1155.49,771.81 1158.42,774.8 1161.34,746.37 1164.26,773.31 1167.18,776.3 1170.1,775.55 1173.02,771.81 1175.94,776.3 1178.87,774.8 1181.79,771.81 1184.71,776.3 1187.63,776.3 1190.55,773.31 1193.47,734.39 1196.39,774.8 1199.31,773.31 1202.24,771.81 1205.16,773.31 1208.08,774.8 1211.0,744.12" fill="none" stroke="#98fb98" stroke-width="1.2" stroke-linejoin="round" /><line x1="946" y1="687.0" x2="951" y2="687.0" stroke="#8a8a8a" stroke-width="1"/><line x1="946" y1="701.9666666666667" x2="951" y2="701.9666666666667" stroke="#8a8a8a" stroke-width="1"/><line x1="946" y1="716.9333333333333" x2="951" y2="716.9333333333333" stroke="#8a8a8a" stroke-width="1"/><line x1="946" y1="731.9" x2="951" y2="731.9" stroke="#8a8a8a" stroke-width="1"/><line x1="946" y1="746.8666666666667" x2="951" y2="746.8666666666667" stroke="#8a8a8a" stroke-width="1"/><line x1="946" y1="761.8333333333333" x2="951" y2="761.8333333333333" stroke="#8a8a8a" stroke-width="1"/><line x1="946" y1="776.8" x2="951" y2="776.8" stroke="#8a8a8a" stroke-width="1"/><line x1="951.5" y1="686.5" x2="951.5" y2="777.3" stroke="#8a8a8a" stroke-width="1"/><line x1="951" y1="687.0" x2="1212" y2="687.0" stroke="#8a8a8a" stroke-width="1"/><line x1="951" y1="776.8" x2="1212" y2="776.8" stroke="#8a8a8a" stroke-width="1"/><line x1="1211.5" y1="686.5" x2="1211.5" y2="777.3" stroke="#ff0000" stroke-width="1.2"/><text x="944" y="691.0" font-size="12" fill="#fff" text-anchor="end" font-weight="normal" font-family='"Liberation Sans", sans-serif' >1,200</text><text x="944" y="706.0" font-size="12" fill="#fff" text-anchor="end" font-weight="normal" font-family='"Liberation Sans", sans-serif' >1,000</text><text x="944" y="720.9" font-size="12" fill="#fff" text-anchor="end" font-weight="normal" font-family='"Liberation Sans", sans-serif' >800</text><text x="944" y="735.9" font-size="12" fill="#fff" text-anchor="end" font-weight="normal" font-family='"Liberation Sans", sans-serif' >600</text><text x="944" y="750.9" font-size="12" fill="#fff" text-anchor="end" font-weight="normal" font-family='"Liberation Sans", sans-serif' >400</text><text x="944" y="765.8" font-size="12" fill="#fff" text-anchor="end" font-weight="normal" font-family='"Liberation Sans", sans-serif' >200</text><text x="944" y="780.8" font-size="12" fill="#fff" text-anchor="end" font-weight="normal" font-family='"Liberation Sans", sans-serif' >0</text><text x="1031.1" y="792.3" font-size="12" fill="#fff" text-anchor="middle" font-weight="normal" font-family='"Liberation Sans", sans-serif' >7:30:00 AM</text><text x="1117.7" y="792.3" font-size="12" fill="#fff" text-anchor="middle" font-weight="normal" font-family='"Liberation Sans", sans-serif' >7:40:00 AM</text><text x="1205.7" y="792.3" font-size="12" fill="#fff" text-anchor="middle" font-weight="normal" font-family='"Liberation Sans", sans-serif' >7:50:00 AM</text><rect x="989" y="817.3" width="22" height="10" fill="#98fb98"/><text x="1016" y="828.1" font-size="12" fill="#fff" text-anchor="start" font-weight="normal" font-family='"Liberation Sans", sans-serif' >ms/Read</text><rect x="1078.5" y="817.3" width="22" height="10" fill="#20b2aa"/><text x="1105" y="828.1" font-size="12" fill="#fff" text-anchor="start" font-weight="normal" font-family='"Liberation Sans", sans-serif' >ms/Write</text><line x1="1271" y1="709.45" x2="1527.5" y2="709.45" stroke="#9a9a9a" stroke-width="1" stroke-dasharray="1 2"/><line x1="1271" y1="731.9" x2="1527.5" y2="731.9" stroke="#9a9a9a" stroke-width="1" stroke-dasharray="1 2"/><line x1="1271" y1="754.3499999999999" x2="1527.5" y2="754.3499999999999" stroke="#9a9a9a" stroke-width="1" stroke-dasharray="1 2"/><line x1="1349.9" y1="686.5" x2="1349.9" y2="779.3" stroke="#9a9a9a" stroke-width="1" stroke-dasharray="1 2"/><line x1="1435.2" y1="686.5" x2="1435.2" y2="779.3" stroke="#9a9a9a" stroke-width="1" stroke-dasharray="1 2"/><line x1="1521.1" y1="686.5" x2="1521.1" y2="779.3" stroke="#9a9a9a" stroke-width="1" stroke-dasharray="1 2"/><polyline points="1271.1,708.35 1274.55,726.78 1278.01,709.5 1283.77,735.99 1287.22,711.8 1290.22,717.56 1292.98,765.94 1295.75,757.88 1298.28,762.48 1301.05,741.75 1304.5,739.45 1307.96,742.9 1311.41,733.69 1314.87,737.14 1318.32,702.59 1321.09,696.83 1324.08,725.63 1327.08,760.18 1329.84,727.93 1334.45,739.45 1338.59,767.09 1341.36,764.79 1344.12,729.08 1347.12,737.14 1352.88,749.81 1358.64,737.14 1360.94,702.59 1363.93,727.93 1367.16,726.78 1369.46,715.26 1372.46,762.48 1378.22,721.02 1380.98,717.56 1383.98,756.73 1386.97,755.57 1392.04,729.08 1394.8,741.75 1398.49,744.06 1401.25,740.6 1404.02,734.84 1406.32,735.99 1409.32,710.65 1412.31,729.08 1415.07,716.41 1418.53,712.96 1420.83,757.88 1426.59,729.08 1429.36,711.8 1432.35,760.18 1434.66,755.57 1438.11,737.14 1441.57,739.45 1445.02,740.6 1449.63,745.21 1453.08,745.21 1457.69,716.41 1461.15,721.02 1464.6,757.88 1468.06,768.24 1471.51,737.14 1474.97,767.09 1478.42,759.03 1483.72,746.36 1486.95,749.81 1489.94,744.06 1492.25,742.9 1494.55,712.96 1497.54,746.36 1501.46,750.97 1504.92,742.9 1506.76,739.45 1509.98,762.48 1514.13,724.47 1517.59,716.41 1521.04,744.06 1523.81,763.64 1525.65,747.51" fill="none" stroke="#daa520" stroke-width="1.2" stroke-linejoin="round" /><line x1="1266" y1="687.0" x2="1271" y2="687.0" stroke="#8a8a8a" stroke-width="1"/><line x1="1266" y1="709.45" x2="1271" y2="709.45" stroke="#8a8a8a" stroke-width="1"/><line x1="1266" y1="731.9" x2="1271" y2="731.9" stroke="#8a8a8a" stroke-width="1"/><line x1="1266" y1="754.3499999999999" x2="1271" y2="754.3499999999999" stroke="#8a8a8a" stroke-width="1"/><line x1="1266" y1="776.8" x2="1271" y2="776.8" stroke="#8a8a8a" stroke-width="1"/><line x1="1271.5" y1="686.5" x2="1271.5" y2="777.3" stroke="#8a8a8a" stroke-width="1"/><line x1="1271" y1="687.0" x2="1528.5" y2="687.0" stroke="#8a8a8a" stroke-width="1"/><line x1="1271" y1="776.8" x2="1528.5" y2="776.8" stroke="#8a8a8a" stroke-width="1"/><line x1="1528.0" y1="686.5" x2="1528.0" y2="777.3" stroke="#8a8a8a" stroke-width="1"/><line x1="1526.1" y1="686.5" x2="1526.1" y2="777.3" stroke="#ff0000" stroke-width="1.2"/><text x="1265.3" y="691.0" font-size="12" fill="#fff" text-anchor="end" font-weight="normal" font-family='"Liberation Sans", sans-serif' >800</text><text x="1265.3" y="713.5" font-size="12" fill="#fff" text-anchor="end" font-weight="normal" font-family='"Liberation Sans", sans-serif' >600</text><text x="1265.3" y="735.9" font-size="12" fill="#fff" text-anchor="end" font-weight="normal" font-family='"Liberation Sans", sans-serif' >400</text><text x="1265.3" y="758.3" font-size="12" fill="#fff" text-anchor="end" font-weight="normal" font-family='"Liberation Sans", sans-serif' >200</text><text x="1265.3" y="780.8" font-size="12" fill="#fff" text-anchor="end" font-weight="normal" font-family='"Liberation Sans", sans-serif' >0</text><text x="1349.9" y="792.3" font-size="12" fill="#fff" text-anchor="middle" font-weight="normal" font-family='"Liberation Sans", sans-serif' >7:30:00 AM</text><text x="1435.2" y="792.3" font-size="12" fill="#fff" text-anchor="middle" font-weight="normal" font-family='"Liberation Sans", sans-serif' >7:40:00 AM</text><text x="1521.1" y="792.3" font-size="12" fill="#fff" text-anchor="middle" font-weight="normal" font-family='"Liberation Sans", sans-serif' >7:50:00 AM</text><rect x="1332" y="817.3" width="22" height="10" fill="#daa520"/><text x="1359.3" y="828.1" font-size="12" fill="#fff" text-anchor="start" font-weight="normal" font-family='"Liberation Sans", sans-serif' >Log flushes</text><text x="1561" y="665" font-size="12" fill="#fff" text-anchor="start" font-weight="normal" font-family='"Liberation Sans", sans-serif' >File</text><rect x="1595.5" y="651.5" width="268" height="21" fill="#e1e1e1" stroke="#adadad" stroke-width="1"/><text x="1599" y="666" font-size="11" fill="#000" text-anchor="start" font-weight="normal" font-family='"Liberation Sans", sans-serif' >Total</text><polyline points="1849,659 1853,663 1857,659" fill="none" stroke="#333" stroke-width="1.2"/><line x1="1594" y1="705.04" x2="1861" y2="705.04" stroke="#9a9a9a" stroke-width="1" stroke-dasharray="1 2"/><line x1="1594" y1="723.08" x2="1861" y2="723.08" stroke="#9a9a9a" stroke-width="1" stroke-dasharray="1 2"/><line x1="1594" y1="741.12" x2="1861" y2="741.12" stroke="#9a9a9a" stroke-width="1" stroke-dasharray="1 2"/><line x1="1594" y1="759.1600000000001" x2="1861" y2="759.1600000000001" stroke="#9a9a9a" stroke-width="1" stroke-dasharray="1 2"/><line x1="1675.7" y1="686.5" x2="1675.7" y2="779.7" stroke="#9a9a9a" stroke-width="1" stroke-dasharray="1 2"/><line x1="1765.0" y1="686.5" x2="1765.0" y2="779.7" stroke="#9a9a9a" stroke-width="1" stroke-dasharray="1 2"/><line x1="1854.1" y1="686.5" x2="1854.1" y2="779.7" stroke="#9a9a9a" stroke-width="1" stroke-dasharray="1 2"/><polyline points="1594,776.7 1598.76,776.7 1602.26,704.82 1603.76,696.82 1604.96,700.82 1608.26,776.7 1611.43,776.7 1614.93,699.06 1616.43,691.06 1617.63,695.06 1620.93,776.7 1622.94,776.7 1626.44,740.52 1627.94,732.52 1629.14,736.52 1632.44,776.7 1634.46,776.7 1637.96,723.24 1639.46,715.24 1640.66,719.24 1643.96,776.7 1646.66,776.7 1650.16,697.91 1651.66,689.91 1652.86,693.91 1656.16,776.7 1660.48,776.7 1663.98,695.61 1665.48,687.61 1666.68,691.61 1669.98,776.7 1672.46,776.7 1675.96,714.03 1677.46,706.03 1678.66,710.03 1681.96,776.7 1683.97,776.7 1687.47,696.76 1688.97,688.76 1690.17,692.76 1693.47,776.7 1695.49,776.7 1698.99,696.76 1700.49,688.76 1701.69,692.76 1704.99,776.7 1707.46,776.7 1710.96,699.06 1712.46,691.06 1713.66,695.06 1716.96,776.7 1719.67,776.7 1723.17,701.36 1724.67,693.36 1725.87,697.36 1729.17,776.7 1731.88,776.7 1735.38,701.36 1736.88,693.36 1738.08,697.36 1741.38,776.7 1743.39,776.7 1746.89,709.43 1748.39,701.43 1749.59,705.43 1752.89,776.7 1755.37,776.7 1758.87,702.52 1760.37,694.52 1761.57,698.52 1764.87,776.7 1768.73,776.7 1772.23,708.27 1773.73,700.27 1774.93,704.27 1778.23,776.7 1780.7,776.7 1784.2,701.36 1785.7,693.36 1786.9,697.36 1790.2,776.7 1793.37,776.7 1796.87,699.06 1798.37,691.06 1799.57,695.06 1802.87,776.7 1804.42,776.7 1807.92,724.4 1809.42,716.4 1810.62,720.4 1813.92,776.7 1816.4,776.7 1819.9,701.36 1821.4,693.36 1822.6,697.36 1825.9,776.7 1827.92,776.7 1831.42,711.73 1832.92,703.73 1834.12,707.73 1837.42,776.7 1838.74,776.7 1842.24,702.52 1843.74,694.52 1844.94,698.52 1848.24,776.7 1850.95,776.7 1854.45,699.06 1855.95,691.06 1857.15,695.06 1860.45,776.7 1861,776.7" fill="none" stroke="#b8860b" stroke-width="1.3" stroke-linejoin="round" /><polyline points="1594,770.45 1595.29,773.53 1597.38,771.88 1598.68,758.13 1600.44,773.11 1602.13,765.86 1603.38,762.17 1605.17,771.48 1607.18,727.02 1608.88,744.32 1610.15,739.14 1612.13,743.09 1613.48,740.01 1615.64,747.69 1617.28,768.8 1618.93,770.15 1620.76,757.86 1622.1,746.89 1623.44,749.34 1624.9,746.23 1626.4,752.22 1627.74,744.24 1629.1,753.58 1630.73,768.77 1632.6,775.07 1634.18,770.89 1636.08,769.0 1638.07,771.61 1639.44,771.89 1641.14,770.42 1642.5,763.76 1643.84,775.5 1645.66,770.62 1647.65,775.2 1649.75,772.63 1651.82,771.91 1653.41,768.58 1654.65,758.48 1655.98,774.45 1657.38,751.99 1659.23,739.07 1660.81,747.57 1662.48,739.2 1664.07,773.34 1665.45,775.73 1667.36,776.2 1668.62,769.61 1670.06,770.23 1671.34,769.31 1673.3,776.54 1674.74,775.55 1676.15,761.16 1677.55,776.03 1679.45,774.68 1681.03,755.59 1682.39,761.31 1684.48,760.65 1685.95,759.28 1687.66,754.06 1689.22,753.93 1691.38,770.11 1693.38,773.19 1694.93,774.15 1696.57,776.11 1698.33,775.31 1700.43,772.71 1702.61,769.31 1704.51,773.69 1706.52,770.05 1707.98,769.15 1709.64,738.47 1711.53,734.15 1713.52,776.56 1714.88,758.94 1716.31,769.5 1718.13,773.04 1719.81,767.27 1721.52,776.48 1722.89,774.71 1724.42,771.07 1725.68,762.0 1727.1,764.21 1728.78,768.82 1730.96,756.13 1732.41,745.76 1734.18,748.09 1735.74,757.83 1737.24,749.62 1738.53,757.21 1740.64,776.19 1742.64,769.07 1744.13,755.07 1745.68,773.8 1747.87,768.67 1749.69,768.93 1751.34,768.18 1753.15,772.68 1754.41,768.67 1755.87,771.73 1758.02,733.1 1759.95,714.42 1761.95,769.14 1763.43,776.58 1765.52,771.59 1767.61,766.34 1769.55,770.45 1771.09,759.12 1772.78,769.12 1774.86,772.27 1776.65,773.16 1778.78,776.16 1780.62,748.02 1781.85,754.82 1783.87,760.69 1785.07,754.26 1786.37,758.95 1788.31,760.54 1789.88,759.26 1791.79,772.49 1793.0,769.17 1794.2,773.42 1796.34,763.73 1798.27,769.46 1800.41,771.18 1802.52,771.73 1803.91,726.5 1805.22,736.69 1806.59,735.5 1808.54,760.8 1810.01,761.75 1811.49,769.61 1813.68,756.58 1815.79,773.41 1817.92,774.99 1819.47,765.75 1821.61,776.42 1823.69,756.42 1825.56,769.84 1827.12,769.22 1829.07,742.97 1831.27,768.63 1833.38,774.14 1835.38,768.7 1837.03,774.59 1839.15,763.43 1840.63,770.5 1841.86,762.93 1843.95,773.24 1845.7,774.44 1846.96,769.37 1848.32,771.17 1849.94,775.9 1851.88,770.83 1853.46,732.06 1855.24,723.74 1857.02,775.68 1859.11,775.17 1860.41,773.58" fill="none" stroke="#f0e68c" stroke-width="1.1" stroke-linejoin="round" /><line x1="1589" y1="687.0" x2="1594" y2="687.0" stroke="#8a8a8a" stroke-width="1"/><line x1="1589" y1="705.04" x2="1594" y2="705.04" stroke="#8a8a8a" stroke-width="1"/><line x1="1589" y1="723.08" x2="1594" y2="723.08" stroke="#8a8a8a" stroke-width="1"/><line x1="1589" y1="741.12" x2="1594" y2="741.12" stroke="#8a8a8a" stroke-width="1"/><line x1="1589" y1="759.1600000000001" x2="1594" y2="759.1600000000001" stroke="#8a8a8a" stroke-width="1"/><line x1="1589" y1="777.2" x2="1594" y2="777.2" stroke="#8a8a8a" stroke-width="1"/><line x1="1861" y1="687.0" x2="1866" y2="687.0" stroke="#8a8a8a" stroke-width="1"/><line x1="1861" y1="705.04" x2="1866" y2="705.04" stroke="#8a8a8a" stroke-width="1"/><line x1="1861" y1="723.08" x2="1866" y2="723.08" stroke="#8a8a8a" stroke-width="1"/><line x1="1861" y1="741.12" x2="1866" y2="741.12" stroke="#8a8a8a" stroke-width="1"/><line x1="1861" y1="759.1600000000001" x2="1866" y2="759.1600000000001" stroke="#8a8a8a" stroke-width="1"/><line x1="1861" y1="777.2" x2="1866" y2="777.2" stroke="#8a8a8a" stroke-width="1"/><line x1="1594.5" y1="686.5" x2="1594.5" y2="777.7" stroke="#8a8a8a" stroke-width="1"/><line x1="1594" y1="687.0" x2="1862" y2="687.0" stroke="#8a8a8a" stroke-width="1"/><line x1="1594" y1="777.2" x2="1862" y2="777.2" stroke="#8a8a8a" stroke-width="1"/><line x1="1861.5" y1="686.5" x2="1861.5" y2="777.7" stroke="#ff0000" stroke-width="1.2"/><text x="1588.8" y="691.0" font-size="12" fill="#fff" text-anchor="end" font-weight="normal" font-family='"Liberation Sans", sans-serif' >5,000</text><text x="1588.8" y="709.0" font-size="12" fill="#fff" text-anchor="end" font-weight="normal" font-family='"Liberation Sans", sans-serif' >4,000</text><text x="1588.8" y="727.1" font-size="12" fill="#fff" text-anchor="end" font-weight="normal" font-family='"Liberation Sans", sans-serif' >3,000</text><text x="1588.8" y="745.1" font-size="12" fill="#fff" text-anchor="end" font-weight="normal" font-family='"Liberation Sans", sans-serif' >2,000</text><text x="1588.8" y="763.2" font-size="12" fill="#fff" text-anchor="end" font-weight="normal" font-family='"Liberation Sans", sans-serif' >1,000</text><text x="1588.8" y="781.2" font-size="12" fill="#fff" text-anchor="end" font-weight="normal" font-family='"Liberation Sans", sans-serif' >0</text><text x="1866.3" y="691.0" font-size="12" fill="#fff" text-anchor="start" font-weight="normal" font-family='"Liberation Sans", sans-serif' >3,500</text><text x="1866.3" y="703.9" font-size="12" fill="#fff" text-anchor="start" font-weight="normal" font-family='"Liberation Sans", sans-serif' >3,000</text><text x="1866.3" y="716.8" font-size="12" fill="#fff" text-anchor="start" font-weight="normal" font-family='"Liberation Sans", sans-serif' >2,500</text><text x="1866.3" y="729.7" font-size="12" fill="#fff" text-anchor="start" font-weight="normal" font-family='"Liberation Sans", sans-serif' >2,000</text><text x="1866.3" y="742.5" font-size="12" fill="#fff" text-anchor="start" font-weight="normal" font-family='"Liberation Sans", sans-serif' >1,500</text><text x="1866.3" y="755.4" font-size="12" fill="#fff" text-anchor="start" font-weight="normal" font-family='"Liberation Sans", sans-serif' >1,000</text><text x="1866.3" y="768.3" font-size="12" fill="#fff" text-anchor="start" font-weight="normal" font-family='"Liberation Sans", sans-serif' >500</text><text x="1866.3" y="781.2" font-size="12" fill="#fff" text-anchor="start" font-weight="normal" font-family='"Liberation Sans", sans-serif' >0</text><text x="1675.7" y="795.1" font-size="12" fill="#fff" text-anchor="middle" font-weight="normal" font-family='"Liberation Sans", sans-serif' >7:30:00 AM</text><text x="1765.0" y="795.1" font-size="12" fill="#fff" text-anchor="middle" font-weight="normal" font-family='"Liberation Sans", sans-serif' >7:40:00 AM</text><text x="1854.1" y="795.1" font-size="12" fill="#fff" text-anchor="middle" font-weight="normal" font-family='"Liberation Sans", sans-serif' >7:50:00 AM</text><rect x="1616" y="817.3" width="22" height="10" fill="#b8860b"/><text x="1643" y="828.1" font-size="12" fill="#fff" text-anchor="start" font-weight="normal" font-family='"Liberation Sans", sans-serif' >Checkpoint pgs</text><rect x="1740" y="817.3" width="22" height="10" fill="#f0e68c"/><text x="1767" y="828.1" font-size="12" fill="#fff" text-anchor="start" font-weight="normal" font-family='"Liberation Sans", sans-serif' >Lazy writes</text><rect x="1112.5" y="59.5" width="144" height="19" fill="#cce4f7" stroke="#c8102e" stroke-width="3"/><polyline points="1243,66 1247,70 1251,66" fill="none" stroke="#333" stroke-width="1.2"/><rect x="1111.5" y="79" width="247" height="45.5" fill="#fff" stroke="#c8102e" stroke-width="3"/><rect x="1113" y="101.3" width="244" height="10.3" fill="#0078d7"/><text x="1114" y="98.7" font-size="9.2" fill="#000" text-anchor="start" font-weight="normal" font-family='"Liberation Sans", sans-serif' >(Previous Period)</text><text x="1114" y="109.3" font-size="9.2" fill="#fff" text-anchor="start" font-weight="normal" font-family='"Liberation Sans", sans-serif' >(Previous Day)</text><text x="1114" y="120" font-size="9.2" fill="#000" text-anchor="start" font-weight="normal" font-family='"Liberation Sans", sans-serif' >(Previous Week)</text>
</svg>
</body></html>
